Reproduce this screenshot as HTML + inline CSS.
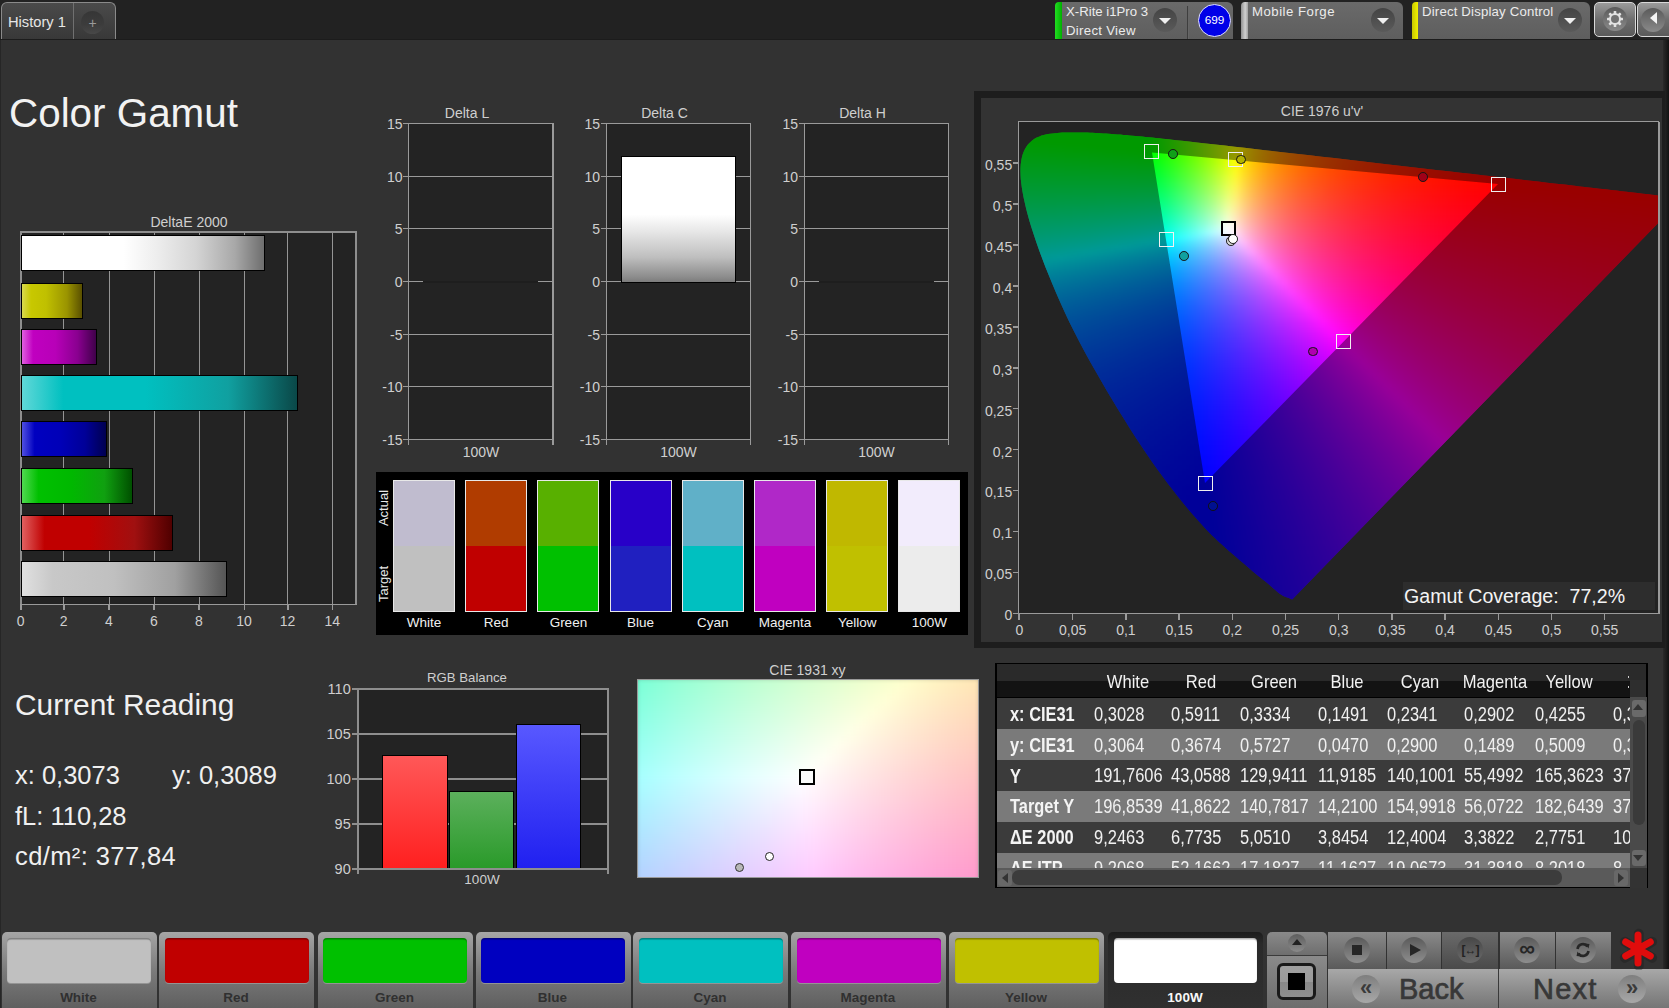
<!DOCTYPE html>
<html><head><meta charset="utf-8"><style>
html,body{margin:0;padding:0;}
body{width:1669px;height:1008px;position:relative;overflow:hidden;background:#323232;font-family:"Liberation Sans", sans-serif;}
.t{position:absolute;white-space:nowrap;font-family:"Liberation Sans", sans-serif;}
</style></head><body>
<div style="position:absolute;left:0px;top:0px;width:1669px;height:39px;background:#222;"></div>
<div style="position:absolute;left:0px;top:39px;width:1669px;height:1px;background:#1c1c1c;"></div>
<div style="position:absolute;left:1px;top:2px;width:114.5px;height:37px;background:linear-gradient(#4a4a4a,#383838);border:1px solid #8a8a8a;border-bottom:none;border-radius:6px 6px 0 0;box-sizing:border-box;"></div>
<div style="position:absolute;left:73px;top:3px;width:1px;height:36px;background:#707070;"></div>
<div style="position:absolute;left:81px;top:11px;width:23px;height:23px;border-radius:50%;background:linear-gradient(#363636,#3c3c3c 60%,#484848);"></div>
<div class="t" style="left:-407.5px;width:1000px;text-align:center;top:15.5px;font-size:14px;line-height:14px;color:#9a9a9a;font-weight:normal;">+</div>
<div class="t" style="left:8px;top:14.7px;font-size:14.7px;line-height:14.7px;color:#e6e6e6;font-weight:normal;">History 1</div>
<div style="position:absolute;left:1055px;top:2px;width:178px;height:37px;background:linear-gradient(#6a6a6a,#5e5e5e);border-radius:6px 6px 0 0;"></div>
<div style="position:absolute;left:1055px;top:2px;width:7px;height:37px;background:linear-gradient(90deg,#22dd22,#00b000);border-radius:4px 0 0 0;"></div>
<div style="position:absolute;left:1187px;top:6px;width:1px;height:33px;background:#3e3e3e;"></div>
<div style="position:absolute;left:1188px;top:6px;width:1px;height:33px;background:#666;"></div>
<div class="t" style="left:1066px;top:5.4px;font-size:13.2px;line-height:13.2px;color:#ececec;font-weight:normal;">X-Rite i1Pro 3</div>
<div class="t" style="left:1066px;top:23.9px;font-size:13.2px;line-height:13.2px;color:#ececec;font-weight:normal;letter-spacing:0.3px;">Direct View</div>
<div style="position:absolute;left:1152.5px;top:8px;width:24px;height:24px;border-radius:50%;background:linear-gradient(#444,#5a5a5a);"></div>
<div style="position:absolute;left:1158.5px;top:18px;width:0;height:0;border-left:6px solid transparent;border-right:6px solid transparent;border-top:6px solid #f0f0f0;"></div>
<div style="position:absolute;left:1198.2px;top:4px;width:33px;height:33px;border-radius:50%;background:#0000e8;border:1.8px solid #e0e0ff;box-sizing:border-box;"></div>
<div class="t" style="left:714.5999999999999px;width:1000px;text-align:center;top:15.4px;font-size:11.8px;line-height:11.8px;color:#ffffff;font-weight:normal;">699</div>
<div style="position:absolute;left:1241px;top:2px;width:162px;height:37px;background:linear-gradient(#6a6a6a,#5e5e5e);border-radius:6px 6px 0 0;"></div>
<div style="position:absolute;left:1241px;top:2px;width:7px;height:37px;background:linear-gradient(90deg,#909090,#d0d0d0 60%,#a0a0a0);border-radius:4px 0 0 0;"></div>
<div class="t" style="left:1252px;top:5.4px;font-size:13.2px;line-height:13.2px;color:#ececec;font-weight:normal;letter-spacing:0.5px;">Mobile Forge</div>
<div style="position:absolute;left:1371px;top:8px;width:24px;height:24px;border-radius:50%;background:linear-gradient(#444,#5a5a5a);"></div>
<div style="position:absolute;left:1377px;top:18px;width:0;height:0;border-left:6px solid transparent;border-right:6px solid transparent;border-top:6px solid #f0f0f0;"></div>
<div style="position:absolute;left:1412px;top:2px;width:178px;height:37px;background:linear-gradient(#6a6a6a,#5e5e5e);border-radius:6px 6px 0 0;"></div>
<div style="position:absolute;left:1412px;top:2px;width:6px;height:37px;background:linear-gradient(90deg,#c8c800,#f0f000);border-radius:4px 0 0 0;"></div>
<div class="t" style="left:1422px;top:5.4px;font-size:13.2px;line-height:13.2px;color:#ececec;font-weight:normal;letter-spacing:0.18px;">Direct Display Control</div>
<div style="position:absolute;left:1558px;top:8px;width:24px;height:24px;border-radius:50%;background:linear-gradient(#444,#5a5a5a);"></div>
<div style="position:absolute;left:1564px;top:18px;width:0;height:0;border-left:6px solid transparent;border-right:6px solid transparent;border-top:6px solid #f0f0f0;"></div>
<div style="position:absolute;left:1594px;top:2px;width:42px;height:35px;background:linear-gradient(#9a9a9a,#6e6e6e 50%,#5a5a5a);border:1.5px solid #d8d8d8;border-radius:5px;box-sizing:border-box;"></div>
<div style="position:absolute;left:1603px;top:7px;width:24px;height:24px;border-radius:50%;background:linear-gradient(#5a5a5a,#8a8a8a);"></div>
<svg style="position:absolute;left:1605px;top:9.3px" width="20" height="20" viewBox="-10 -10 20 20"><g fill="#e2e2e2"><rect x="-1.3" y="-8" width="2.6" height="4" rx="0.6" transform="rotate(0)"/><rect x="-1.3" y="-8" width="2.6" height="4" rx="0.6" transform="rotate(45)"/><rect x="-1.3" y="-8" width="2.6" height="4" rx="0.6" transform="rotate(90)"/><rect x="-1.3" y="-8" width="2.6" height="4" rx="0.6" transform="rotate(135)"/><rect x="-1.3" y="-8" width="2.6" height="4" rx="0.6" transform="rotate(180)"/><rect x="-1.3" y="-8" width="2.6" height="4" rx="0.6" transform="rotate(225)"/><rect x="-1.3" y="-8" width="2.6" height="4" rx="0.6" transform="rotate(270)"/><rect x="-1.3" y="-8" width="2.6" height="4" rx="0.6" transform="rotate(315)"/><circle r="6"/></g><circle r="4" fill="#727272"/></svg>
<div style="position:absolute;left:1637px;top:2px;width:40px;height:35px;background:linear-gradient(#9a9a9a,#6e6e6e 50%,#5a5a5a);border:1.5px solid #d8d8d8;border-radius:5px;box-sizing:border-box;"></div>
<div style="position:absolute;left:1641px;top:7.5px;width:24px;height:24px;border-radius:50%;background:linear-gradient(#5a5a5a,#8a8a8a);"></div>
<div style="position:absolute;left:1650px;top:12px;width:0;height:0;border-top:6.5px solid transparent;border-bottom:6.5px solid transparent;border-right:7px solid #f4f4f4;"></div>
<div style="position:absolute;left:0px;top:40px;width:1.2px;height:968px;background:#262626;"></div>
<div style="position:absolute;left:1663px;top:40px;width:6px;height:968px;background:linear-gradient(90deg,#2a2a2a,#111);"></div>
<div class="t" style="left:9px;top:93.0px;font-size:40.4px;line-height:40.4px;color:#f2f2f2;font-weight:normal;">Color Gamut</div>
<div class="t" style="left:-311px;width:1000px;text-align:center;top:215.0px;font-size:14px;line-height:14px;color:#cfcfcf;font-weight:normal;">DeltaE 2000</div>
<div style="position:absolute;left:20.2px;top:231px;width:335px;height:373px;background:#232323;"></div>
<div style="position:absolute;left:63.3px;top:231px;width:1.2px;height:373px;background:#959595;"></div>
<div style="position:absolute;left:108.60000000000001px;top:231px;width:1.2px;height:373px;background:#959595;"></div>
<div style="position:absolute;left:153.6px;top:231px;width:1.2px;height:373px;background:#959595;"></div>
<div style="position:absolute;left:198.6px;top:231px;width:1.2px;height:373px;background:#959595;"></div>
<div style="position:absolute;left:243.8px;top:231px;width:1.2px;height:373px;background:#959595;"></div>
<div style="position:absolute;left:287.2px;top:231px;width:1.2px;height:373px;background:#959595;"></div>
<div style="position:absolute;left:331.9px;top:231px;width:1.2px;height:373px;background:#959595;"></div>
<div style="position:absolute;left:20.2px;top:231px;width:336px;height:1.5px;background:#8e8e8e;"></div>
<div style="position:absolute;left:20.2px;top:231px;width:1.5px;height:373px;background:#8e8e8e;"></div>
<div style="position:absolute;left:355.2px;top:231px;width:1.5px;height:373px;background:#8e8e8e;"></div>
<div style="position:absolute;left:20.2px;top:603.5px;width:336.5px;height:1.5px;background:#9a9a9a;"></div>
<div style="position:absolute;left:20.15px;top:604px;width:1.5px;height:6px;background:#9a9a9a;"></div>
<div class="t" style="left:-479.4px;width:1000px;text-align:center;top:614.0px;font-size:14px;line-height:14px;color:#cfcfcf;font-weight:normal;">0</div>
<div style="position:absolute;left:63.15px;top:604px;width:1.5px;height:6px;background:#9a9a9a;"></div>
<div class="t" style="left:-436.4px;width:1000px;text-align:center;top:614.0px;font-size:14px;line-height:14px;color:#cfcfcf;font-weight:normal;">2</div>
<div style="position:absolute;left:108.45px;top:604px;width:1.5px;height:6px;background:#9a9a9a;"></div>
<div class="t" style="left:-391.1px;width:1000px;text-align:center;top:614.0px;font-size:14px;line-height:14px;color:#cfcfcf;font-weight:normal;">4</div>
<div style="position:absolute;left:153.45px;top:604px;width:1.5px;height:6px;background:#9a9a9a;"></div>
<div class="t" style="left:-346.1px;width:1000px;text-align:center;top:614.0px;font-size:14px;line-height:14px;color:#cfcfcf;font-weight:normal;">6</div>
<div style="position:absolute;left:198.45px;top:604px;width:1.5px;height:6px;background:#9a9a9a;"></div>
<div class="t" style="left:-301.1px;width:1000px;text-align:center;top:614.0px;font-size:14px;line-height:14px;color:#cfcfcf;font-weight:normal;">8</div>
<div style="position:absolute;left:243.65px;top:604px;width:1.5px;height:6px;background:#9a9a9a;"></div>
<div class="t" style="left:-255.9px;width:1000px;text-align:center;top:614.0px;font-size:14px;line-height:14px;color:#cfcfcf;font-weight:normal;">10</div>
<div style="position:absolute;left:287.05px;top:604px;width:1.5px;height:6px;background:#9a9a9a;"></div>
<div class="t" style="left:-212.5px;width:1000px;text-align:center;top:614.0px;font-size:14px;line-height:14px;color:#cfcfcf;font-weight:normal;">12</div>
<div style="position:absolute;left:331.75px;top:604px;width:1.5px;height:6px;background:#9a9a9a;"></div>
<div class="t" style="left:-167.8px;width:1000px;text-align:center;top:614.0px;font-size:14px;line-height:14px;color:#cfcfcf;font-weight:normal;">14</div>
<div style="position:absolute;left:21px;top:234.8px;width:243.5px;height:36px;background:linear-gradient(90deg,#fff 0%,#fff 42%,#ededed 56%,#d4d4d4 72%,#a8a8a8 88%,#6e6e6e 100%);border:1.5px solid #000;box-sizing:border-box;"></div>
<div style="position:absolute;left:21px;top:282.8px;width:61.5px;height:36px;background:linear-gradient(90deg,#dada50 0%,#c8c800 15%,#c0c000 40%,#9a9400 75%,#5a5000 100%);border:1.5px solid #000;box-sizing:border-box;"></div>
<div style="position:absolute;left:21px;top:328.8px;width:75.5px;height:36px;background:linear-gradient(90deg,#e060e0 0%,#c000c0 15%,#b800b8 45%,#8a0090 75%,#40004a 100%);border:1.5px solid #000;box-sizing:border-box;"></div>
<div style="position:absolute;left:21px;top:374.8px;width:276.5px;height:36px;background:linear-gradient(90deg,#60d8d8 0%,#00c0c0 15%,#00c0c0 45%,#10a0a0 75%,#0a4848 100%);border:1.5px solid #000;box-sizing:border-box;"></div>
<div style="position:absolute;left:21px;top:421.3px;width:86px;height:36px;background:linear-gradient(90deg,#5050e0 0%,#0000c0 15%,#0000b8 45%,#000098 75%,#000050 100%);border:1.5px solid #000;box-sizing:border-box;"></div>
<div style="position:absolute;left:21px;top:467.8px;width:111.5px;height:36px;background:linear-gradient(90deg,#50d850 0%,#00c000 15%,#00b800 45%,#10a010 75%,#005000 100%);border:1.5px solid #000;box-sizing:border-box;"></div>
<div style="position:absolute;left:21px;top:514.8px;width:152px;height:36px;background:linear-gradient(90deg,#e06060 0%,#c00000 15%,#c00000 45%,#a01010 75%,#500000 100%);border:1.5px solid #000;box-sizing:border-box;"></div>
<div style="position:absolute;left:21px;top:561.3px;width:206px;height:36px;background:linear-gradient(90deg,#e0e0e0 0%,#c8c8c8 15%,#c0c0c0 45%,#a0a0a0 75%,#555 100%);border:1.5px solid #000;box-sizing:border-box;"></div>
<div class="t" style="left:-33px;width:1000px;text-align:center;top:106.0px;font-size:14px;line-height:14px;color:#cfcfcf;font-weight:normal;">Delta L</div>
<div style="position:absolute;left:408px;top:123px;width:144.4px;height:316px;background:#232323;"></div>
<div style="position:absolute;left:403px;top:123.2px;width:149.4px;height:1.2px;background:#9a9a9a;"></div>
<div class="t" style="left:-597.5px;width:1000px;text-align:right;top:116.5px;font-size:14px;line-height:14px;color:#cfcfcf;font-weight:normal;">15</div>
<div style="position:absolute;left:403px;top:176.2px;width:149.4px;height:1.2px;background:#9a9a9a;"></div>
<div class="t" style="left:-597.5px;width:1000px;text-align:right;top:169.5px;font-size:14px;line-height:14px;color:#cfcfcf;font-weight:normal;">10</div>
<div style="position:absolute;left:403px;top:228.2px;width:149.4px;height:1.2px;background:#9a9a9a;"></div>
<div class="t" style="left:-597.5px;width:1000px;text-align:right;top:221.5px;font-size:14px;line-height:14px;color:#cfcfcf;font-weight:normal;">5</div>
<div style="position:absolute;left:403px;top:281.2px;width:149.4px;height:1.2px;background:#9a9a9a;"></div>
<div class="t" style="left:-597.5px;width:1000px;text-align:right;top:274.5px;font-size:14px;line-height:14px;color:#cfcfcf;font-weight:normal;">0</div>
<div style="position:absolute;left:403px;top:334.2px;width:149.4px;height:1.2px;background:#9a9a9a;"></div>
<div class="t" style="left:-597.5px;width:1000px;text-align:right;top:327.5px;font-size:14px;line-height:14px;color:#cfcfcf;font-weight:normal;">-5</div>
<div style="position:absolute;left:403px;top:386.2px;width:149.4px;height:1.2px;background:#9a9a9a;"></div>
<div class="t" style="left:-597.5px;width:1000px;text-align:right;top:379.5px;font-size:14px;line-height:14px;color:#cfcfcf;font-weight:normal;">-10</div>
<div style="position:absolute;left:403px;top:439.2px;width:149.4px;height:1.2px;background:#9a9a9a;"></div>
<div class="t" style="left:-597.5px;width:1000px;text-align:right;top:432.5px;font-size:14px;line-height:14px;color:#cfcfcf;font-weight:normal;">-15</div>
<div style="position:absolute;left:408px;top:123px;width:1.2px;height:322px;background:#9a9a9a;"></div>
<div style="position:absolute;left:552.4px;top:123px;width:1.2px;height:322px;background:#9a9a9a;"></div>
<div class="t" style="left:-19px;width:1000px;text-align:center;top:444.5px;font-size:14px;line-height:14px;color:#cfcfcf;font-weight:normal;">100W</div>
<div style="position:absolute;left:423px;top:280.7px;width:115px;height:2px;background:#1e1e1e;"></div>
<div class="t" style="left:164.5px;width:1000px;text-align:center;top:106.0px;font-size:14px;line-height:14px;color:#cfcfcf;font-weight:normal;">Delta C</div>
<div style="position:absolute;left:605.5px;top:123px;width:144.4px;height:316px;background:#232323;"></div>
<div style="position:absolute;left:600.5px;top:123.2px;width:149.4px;height:1.2px;background:#9a9a9a;"></div>
<div class="t" style="left:-400.0px;width:1000px;text-align:right;top:116.5px;font-size:14px;line-height:14px;color:#cfcfcf;font-weight:normal;">15</div>
<div style="position:absolute;left:600.5px;top:176.2px;width:149.4px;height:1.2px;background:#9a9a9a;"></div>
<div class="t" style="left:-400.0px;width:1000px;text-align:right;top:169.5px;font-size:14px;line-height:14px;color:#cfcfcf;font-weight:normal;">10</div>
<div style="position:absolute;left:600.5px;top:228.2px;width:149.4px;height:1.2px;background:#9a9a9a;"></div>
<div class="t" style="left:-400.0px;width:1000px;text-align:right;top:221.5px;font-size:14px;line-height:14px;color:#cfcfcf;font-weight:normal;">5</div>
<div style="position:absolute;left:600.5px;top:281.2px;width:149.4px;height:1.2px;background:#9a9a9a;"></div>
<div class="t" style="left:-400.0px;width:1000px;text-align:right;top:274.5px;font-size:14px;line-height:14px;color:#cfcfcf;font-weight:normal;">0</div>
<div style="position:absolute;left:600.5px;top:334.2px;width:149.4px;height:1.2px;background:#9a9a9a;"></div>
<div class="t" style="left:-400.0px;width:1000px;text-align:right;top:327.5px;font-size:14px;line-height:14px;color:#cfcfcf;font-weight:normal;">-5</div>
<div style="position:absolute;left:600.5px;top:386.2px;width:149.4px;height:1.2px;background:#9a9a9a;"></div>
<div class="t" style="left:-400.0px;width:1000px;text-align:right;top:379.5px;font-size:14px;line-height:14px;color:#cfcfcf;font-weight:normal;">-10</div>
<div style="position:absolute;left:600.5px;top:439.2px;width:149.4px;height:1.2px;background:#9a9a9a;"></div>
<div class="t" style="left:-400.0px;width:1000px;text-align:right;top:432.5px;font-size:14px;line-height:14px;color:#cfcfcf;font-weight:normal;">-15</div>
<div style="position:absolute;left:605.5px;top:123px;width:1.2px;height:322px;background:#9a9a9a;"></div>
<div style="position:absolute;left:749.9px;top:123px;width:1.2px;height:322px;background:#9a9a9a;"></div>
<div class="t" style="left:178.5px;width:1000px;text-align:center;top:444.5px;font-size:14px;line-height:14px;color:#cfcfcf;font-weight:normal;">100W</div>
<div style="position:absolute;left:621.0px;top:156px;width:115px;height:126.5px;background:linear-gradient(#fff 0%,#fff 46%,#e6e6e6 60%,#bfbfbf 80%,#8c8c8c 96%,#7c7c7c 100%);border:1.5px solid #000;box-sizing:border-box;"></div>
<div class="t" style="left:362.5px;width:1000px;text-align:center;top:106.0px;font-size:14px;line-height:14px;color:#cfcfcf;font-weight:normal;">Delta H</div>
<div style="position:absolute;left:803.5px;top:123px;width:144.4px;height:316px;background:#232323;"></div>
<div style="position:absolute;left:798.5px;top:123.2px;width:149.4px;height:1.2px;background:#9a9a9a;"></div>
<div class="t" style="left:-202.0px;width:1000px;text-align:right;top:116.5px;font-size:14px;line-height:14px;color:#cfcfcf;font-weight:normal;">15</div>
<div style="position:absolute;left:798.5px;top:176.2px;width:149.4px;height:1.2px;background:#9a9a9a;"></div>
<div class="t" style="left:-202.0px;width:1000px;text-align:right;top:169.5px;font-size:14px;line-height:14px;color:#cfcfcf;font-weight:normal;">10</div>
<div style="position:absolute;left:798.5px;top:228.2px;width:149.4px;height:1.2px;background:#9a9a9a;"></div>
<div class="t" style="left:-202.0px;width:1000px;text-align:right;top:221.5px;font-size:14px;line-height:14px;color:#cfcfcf;font-weight:normal;">5</div>
<div style="position:absolute;left:798.5px;top:281.2px;width:149.4px;height:1.2px;background:#9a9a9a;"></div>
<div class="t" style="left:-202.0px;width:1000px;text-align:right;top:274.5px;font-size:14px;line-height:14px;color:#cfcfcf;font-weight:normal;">0</div>
<div style="position:absolute;left:798.5px;top:334.2px;width:149.4px;height:1.2px;background:#9a9a9a;"></div>
<div class="t" style="left:-202.0px;width:1000px;text-align:right;top:327.5px;font-size:14px;line-height:14px;color:#cfcfcf;font-weight:normal;">-5</div>
<div style="position:absolute;left:798.5px;top:386.2px;width:149.4px;height:1.2px;background:#9a9a9a;"></div>
<div class="t" style="left:-202.0px;width:1000px;text-align:right;top:379.5px;font-size:14px;line-height:14px;color:#cfcfcf;font-weight:normal;">-10</div>
<div style="position:absolute;left:798.5px;top:439.2px;width:149.4px;height:1.2px;background:#9a9a9a;"></div>
<div class="t" style="left:-202.0px;width:1000px;text-align:right;top:432.5px;font-size:14px;line-height:14px;color:#cfcfcf;font-weight:normal;">-15</div>
<div style="position:absolute;left:803.5px;top:123px;width:1.2px;height:322px;background:#9a9a9a;"></div>
<div style="position:absolute;left:947.9px;top:123px;width:1.2px;height:322px;background:#9a9a9a;"></div>
<div class="t" style="left:376.5px;width:1000px;text-align:center;top:444.5px;font-size:14px;line-height:14px;color:#cfcfcf;font-weight:normal;">100W</div>
<div style="position:absolute;left:818.5px;top:280.7px;width:115px;height:2px;background:#1e1e1e;"></div>
<div style="position:absolute;left:376px;top:472px;width:592px;height:163px;background:#000;"></div>
<div style="position:absolute;left:393.0px;top:480px;width:62px;height:132px;border:1.5px solid #e8e8e8;box-sizing:border-box;background:linear-gradient(#c0bccf 0,#c0bccf 50%,#c0c0c0 50%,#c0c0c0 100%);"></div>
<div class="t" style="left:-76.0px;width:1000px;text-align:center;top:615.8px;font-size:13.5px;line-height:13.5px;color:#f0f0f0;font-weight:normal;">White</div>
<div style="position:absolute;left:465.2px;top:480px;width:62px;height:132px;border:1.5px solid #e8e8e8;box-sizing:border-box;background:linear-gradient(#b03c00 0,#b03c00 50%,#c00000 50%,#c00000 100%);"></div>
<div class="t" style="left:-3.8000000000000114px;width:1000px;text-align:center;top:615.8px;font-size:13.5px;line-height:13.5px;color:#f0f0f0;font-weight:normal;">Red</div>
<div style="position:absolute;left:537.4px;top:480px;width:62px;height:132px;border:1.5px solid #e8e8e8;box-sizing:border-box;background:linear-gradient(#58b000 0,#58b000 50%,#00c000 50%,#00c000 100%);"></div>
<div class="t" style="left:68.39999999999998px;width:1000px;text-align:center;top:615.8px;font-size:13.5px;line-height:13.5px;color:#f0f0f0;font-weight:normal;">Green</div>
<div style="position:absolute;left:609.6px;top:480px;width:62px;height:132px;border:1.5px solid #e8e8e8;box-sizing:border-box;background:linear-gradient(#2800c8 0,#2800c8 50%,#2020c0 50%,#2020c0 100%);"></div>
<div class="t" style="left:140.60000000000002px;width:1000px;text-align:center;top:615.8px;font-size:13.5px;line-height:13.5px;color:#f0f0f0;font-weight:normal;">Blue</div>
<div style="position:absolute;left:681.8px;top:480px;width:62px;height:132px;border:1.5px solid #e8e8e8;box-sizing:border-box;background:linear-gradient(#60b0c8 0,#60b0c8 50%,#00c0c0 50%,#00c0c0 100%);"></div>
<div class="t" style="left:212.79999999999995px;width:1000px;text-align:center;top:615.8px;font-size:13.5px;line-height:13.5px;color:#f0f0f0;font-weight:normal;">Cyan</div>
<div style="position:absolute;left:754.0px;top:480px;width:62px;height:132px;border:1.5px solid #e8e8e8;box-sizing:border-box;background:linear-gradient(#b028c8 0,#b028c8 50%,#c000c0 50%,#c000c0 100%);"></div>
<div class="t" style="left:285.0px;width:1000px;text-align:center;top:615.8px;font-size:13.5px;line-height:13.5px;color:#f0f0f0;font-weight:normal;">Magenta</div>
<div style="position:absolute;left:826.2px;top:480px;width:62px;height:132px;border:1.5px solid #e8e8e8;box-sizing:border-box;background:linear-gradient(#c0b800 0,#c0b800 50%,#c0c000 50%,#c0c000 100%);"></div>
<div class="t" style="left:357.20000000000005px;width:1000px;text-align:center;top:615.8px;font-size:13.5px;line-height:13.5px;color:#f0f0f0;font-weight:normal;">Yellow</div>
<div style="position:absolute;left:898.4px;top:480px;width:62px;height:132px;border:1.5px solid #e8e8e8;box-sizing:border-box;background:linear-gradient(#f2ecfc 0,#f2ecfc 50%,#ececec 50%,#ececec 100%);"></div>
<div class="t" style="left:429.4px;width:1000px;text-align:center;top:615.8px;font-size:13.5px;line-height:13.5px;color:#f0f0f0;font-weight:normal;">100W</div>
<div class="t" style="left:354px;top:501px;width:60px;text-align:center;font-size:13px;line-height:14px;color:#e8e8e8;transform:rotate(-90deg);">Actual</div>
<div class="t" style="left:354px;top:576.5px;width:60px;text-align:center;font-size:13px;line-height:14px;color:#e8e8e8;transform:rotate(-90deg);">Target</div>
<div style="position:absolute;left:974px;top:91px;width:691px;height:557px;background:#1d1d1d;"></div>
<div style="position:absolute;left:981px;top:98px;width:681px;height:544px;background:#333;"></div>
<div class="t" style="left:822px;width:1000px;text-align:center;top:104.0px;font-size:14px;line-height:14px;color:#cfcfcf;font-weight:normal;">CIE 1976 u'v'</div>
<div style="position:absolute;left:1019px;top:121.5px;width:639px;height:491.5px;background:#232323;"></div>
<div style="position:absolute;left:1017.8px;top:120.7px;width:641.7px;height:1.5px;background:#9a9a9a;"></div>
<div style="position:absolute;left:1017.8px;top:120.7px;width:1.5px;height:499.3px;background:#9a9a9a;"></div>
<div style="position:absolute;left:1658px;top:121.5px;width:1.5px;height:491.5px;background:#9a9a9a;"></div>
<div style="position:absolute;left:1013px;top:612.5px;width:646.5px;height:1.5px;background:#9a9a9a;"></div>
<div style="position:absolute;left:1013px;top:612.5px;width:6px;height:1.5px;background:#9a9a9a;"></div>
<div class="t" style="left:12.200000000000045px;width:1000px;text-align:right;top:608.3px;font-size:14px;line-height:14px;color:#cfcfcf;font-weight:normal;">0</div>
<div style="position:absolute;left:1013px;top:571.5px;width:6px;height:1.5px;background:#9a9a9a;"></div>
<div class="t" style="left:12.200000000000045px;width:1000px;text-align:right;top:567.3px;font-size:14px;line-height:14px;color:#cfcfcf;font-weight:normal;">0,05</div>
<div style="position:absolute;left:1013px;top:530.5px;width:6px;height:1.5px;background:#9a9a9a;"></div>
<div class="t" style="left:12.200000000000045px;width:1000px;text-align:right;top:526.4px;font-size:14px;line-height:14px;color:#cfcfcf;font-weight:normal;">0,1</div>
<div style="position:absolute;left:1013px;top:489.5px;width:6px;height:1.5px;background:#9a9a9a;"></div>
<div class="t" style="left:12.200000000000045px;width:1000px;text-align:right;top:485.4px;font-size:14px;line-height:14px;color:#cfcfcf;font-weight:normal;">0,15</div>
<div style="position:absolute;left:1013px;top:448.5px;width:6px;height:1.5px;background:#9a9a9a;"></div>
<div class="t" style="left:12.200000000000045px;width:1000px;text-align:right;top:444.5px;font-size:14px;line-height:14px;color:#cfcfcf;font-weight:normal;">0,2</div>
<div style="position:absolute;left:1013px;top:407.5px;width:6px;height:1.5px;background:#9a9a9a;"></div>
<div class="t" style="left:12.200000000000045px;width:1000px;text-align:right;top:403.6px;font-size:14px;line-height:14px;color:#cfcfcf;font-weight:normal;">0,25</div>
<div style="position:absolute;left:1013px;top:367.0px;width:6px;height:1.5px;background:#9a9a9a;"></div>
<div class="t" style="left:12.200000000000045px;width:1000px;text-align:right;top:362.6px;font-size:14px;line-height:14px;color:#cfcfcf;font-weight:normal;">0,3</div>
<div style="position:absolute;left:1013px;top:326.0px;width:6px;height:1.5px;background:#9a9a9a;"></div>
<div class="t" style="left:12.200000000000045px;width:1000px;text-align:right;top:321.6px;font-size:14px;line-height:14px;color:#cfcfcf;font-weight:normal;">0,35</div>
<div style="position:absolute;left:1013px;top:285.0px;width:6px;height:1.5px;background:#9a9a9a;"></div>
<div class="t" style="left:12.200000000000045px;width:1000px;text-align:right;top:280.7px;font-size:14px;line-height:14px;color:#cfcfcf;font-weight:normal;">0,4</div>
<div style="position:absolute;left:1013px;top:244.0px;width:6px;height:1.5px;background:#9a9a9a;"></div>
<div class="t" style="left:12.200000000000045px;width:1000px;text-align:right;top:239.8px;font-size:14px;line-height:14px;color:#cfcfcf;font-weight:normal;">0,45</div>
<div style="position:absolute;left:1013px;top:203.0px;width:6px;height:1.5px;background:#9a9a9a;"></div>
<div class="t" style="left:12.200000000000045px;width:1000px;text-align:right;top:198.8px;font-size:14px;line-height:14px;color:#cfcfcf;font-weight:normal;">0,5</div>
<div style="position:absolute;left:1013px;top:162.0px;width:6px;height:1.5px;background:#9a9a9a;"></div>
<div class="t" style="left:12.200000000000045px;width:1000px;text-align:right;top:157.8px;font-size:14px;line-height:14px;color:#cfcfcf;font-weight:normal;">0,55</div>
<div style="position:absolute;left:1018.5px;top:613px;width:1.5px;height:7px;background:#9a9a9a;"></div>
<div class="t" style="left:519.5px;width:1000px;text-align:center;top:623.0px;font-size:14px;line-height:14px;color:#cfcfcf;font-weight:normal;">0</div>
<div style="position:absolute;left:1071.5px;top:613px;width:1.5px;height:7px;background:#9a9a9a;"></div>
<div class="t" style="left:572.7px;width:1000px;text-align:center;top:623.0px;font-size:14px;line-height:14px;color:#cfcfcf;font-weight:normal;">0,05</div>
<div style="position:absolute;left:1125.0px;top:613px;width:1.5px;height:7px;background:#9a9a9a;"></div>
<div class="t" style="left:625.9000000000001px;width:1000px;text-align:center;top:623.0px;font-size:14px;line-height:14px;color:#cfcfcf;font-weight:normal;">0,1</div>
<div style="position:absolute;left:1178.0px;top:613px;width:1.5px;height:7px;background:#9a9a9a;"></div>
<div class="t" style="left:679.0999999999999px;width:1000px;text-align:center;top:623.0px;font-size:14px;line-height:14px;color:#cfcfcf;font-weight:normal;">0,15</div>
<div style="position:absolute;left:1231.5px;top:613px;width:1.5px;height:7px;background:#9a9a9a;"></div>
<div class="t" style="left:732.3px;width:1000px;text-align:center;top:623.0px;font-size:14px;line-height:14px;color:#cfcfcf;font-weight:normal;">0,2</div>
<div style="position:absolute;left:1284.5px;top:613px;width:1.5px;height:7px;background:#9a9a9a;"></div>
<div class="t" style="left:785.5px;width:1000px;text-align:center;top:623.0px;font-size:14px;line-height:14px;color:#cfcfcf;font-weight:normal;">0,25</div>
<div style="position:absolute;left:1337.5px;top:613px;width:1.5px;height:7px;background:#9a9a9a;"></div>
<div class="t" style="left:838.7px;width:1000px;text-align:center;top:623.0px;font-size:14px;line-height:14px;color:#cfcfcf;font-weight:normal;">0,3</div>
<div style="position:absolute;left:1391.0px;top:613px;width:1.5px;height:7px;background:#9a9a9a;"></div>
<div class="t" style="left:891.9000000000001px;width:1000px;text-align:center;top:623.0px;font-size:14px;line-height:14px;color:#cfcfcf;font-weight:normal;">0,35</div>
<div style="position:absolute;left:1444.0px;top:613px;width:1.5px;height:7px;background:#9a9a9a;"></div>
<div class="t" style="left:945.0999999999999px;width:1000px;text-align:center;top:623.0px;font-size:14px;line-height:14px;color:#cfcfcf;font-weight:normal;">0,4</div>
<div style="position:absolute;left:1497.5px;top:613px;width:1.5px;height:7px;background:#9a9a9a;"></div>
<div class="t" style="left:998.3px;width:1000px;text-align:center;top:623.0px;font-size:14px;line-height:14px;color:#cfcfcf;font-weight:normal;">0,45</div>
<div style="position:absolute;left:1550.5px;top:613px;width:1.5px;height:7px;background:#9a9a9a;"></div>
<div class="t" style="left:1051.5px;width:1000px;text-align:center;top:623.0px;font-size:14px;line-height:14px;color:#cfcfcf;font-weight:normal;">0,5</div>
<div style="position:absolute;left:1603.5px;top:613px;width:1.5px;height:7px;background:#9a9a9a;"></div>
<div class="t" style="left:1104.7px;width:1000px;text-align:center;top:623.0px;font-size:14px;line-height:14px;color:#cfcfcf;font-weight:normal;">0,55</div>
<div style="position:absolute;left:1012px;top:115px;width:652px;height:505px;overflow:hidden;clip-path:path('M280.2 484.4 L279.0 483.9 L277.3 483.3 L275.3 482.6 L273.1 481.7 L270.9 480.7 L268.9 479.5 L267.0 478.2 L265.2 476.7 L263.3 475.1 L261.4 473.4 L259.2 471.4 L256.7 469.3 L254.0 467.1 L251.1 464.7 L247.9 462.2 L244.5 459.4 L240.9 456.4 L236.9 453.0 L232.3 449.1 L227.2 444.7 L221.8 440.1 L216.4 435.4 L211.3 430.8 L206.7 426.7 L202.9 423.1 L199.6 419.9 L196.5 416.8 L193.5 413.7 L190.4 410.3 L186.8 406.3 L182.8 401.8 L178.6 397.0 L174.2 391.8 L169.7 386.3 L165.1 380.5 L160.3 374.3 L155.4 367.9 L150.3 361.0 L145.1 353.9 L139.8 346.4 L134.5 338.7 L129.0 330.6 L123.5 322.2 L117.9 313.4 L112.2 304.3 L106.4 295.1 L100.7 285.6 L95.1 276.2 L89.5 266.6 L83.9 256.8 L78.3 246.9 L72.8 236.9 L67.5 227.1 L62.5 217.3 L57.7 207.7 L53.1 198.0 L48.8 188.4 L44.6 178.9 L40.7 169.7 L37.0 160.8 L33.5 152.2 L30.3 143.8 L27.3 135.7 L24.5 127.8 L22.0 120.3 L19.7 113.2 L17.6 106.5 L15.8 100.1 L14.2 94.1 L12.9 88.3 L11.7 82.9 L10.7 77.8 L9.9 73.0 L9.3 68.5 L8.8 64.3 L8.6 60.4 L8.5 56.7 L8.5 53.2 L8.7 49.8 L9.1 46.7 L9.6 43.8 L10.2 41.1 L11.0 38.6 L11.9 36.2 L13.0 34.0 L14.2 32.0 L15.5 30.1 L16.9 28.4 L18.5 26.9 L20.1 25.5 L21.8 24.2 L23.6 23.1 L25.5 22.2 L27.5 21.4 L29.5 20.6 L31.6 20.0 L33.7 19.4 L36.0 19.0 L38.2 18.7 L40.6 18.4 L42.9 18.2 L45.3 17.9 L47.7 17.8 L50.2 17.6 L52.7 17.6 L55.2 17.5 L57.7 17.5 L60.3 17.4 L62.8 17.4 L65.3 17.4 L67.8 17.5 L70.3 17.5 L72.9 17.6 L75.5 17.6 L78.0 17.7 L80.6 17.8 L83.3 17.9 L85.9 18.1 L88.6 18.2 L91.3 18.4 L94.1 18.6 L96.8 18.7 L99.7 18.9 L102.5 19.2 L105.4 19.4 L108.4 19.6 L111.4 19.9 L114.4 20.1 L117.4 20.4 L120.5 20.7 L123.7 21.0 L126.9 21.3 L130.2 21.6 L133.5 21.9 L136.9 22.3 L140.3 22.6 L143.8 23.0 L147.3 23.3 L150.6 23.7 L153.6 24.0 L156.6 24.3 L160.1 24.7 L164.4 25.2 L169.9 25.8 L176.8 26.5 L184.8 27.4 L193.7 28.4 L203.1 29.5 L212.8 30.6 L222.6 31.7 L232.4 32.8 L242.6 34.0 L253.0 35.2 L263.8 36.4 L274.8 37.7 L286.1 39.0 L297.8 40.3 L309.8 41.7 L322.1 43.1 L334.6 44.6 L347.2 46.0 L359.7 47.5 L372.4 48.9 L385.3 50.4 L398.3 51.9 L411.2 53.4 L423.9 54.9 L436.3 56.3 L448.5 57.7 L460.7 59.1 L472.6 60.4 L484.3 61.8 L495.5 63.1 L506.2 64.3 L516.3 65.5 L526.1 66.6 L535.3 67.7 L544.2 68.7 L552.6 69.6 L560.6 70.6 L568.0 71.4 L575.0 72.2 L581.5 73.0 L587.6 73.7 L593.5 74.3 L599.1 75.0 L604.5 75.6 L609.7 76.2 L614.5 76.8 L619.0 77.3 L623.3 77.8 L627.4 78.3 L630.9 78.7 L634.0 79.0 L636.9 79.3 L639.7 79.7 L642.6 80.0 L645.9 80.4 L646.0 80.4 L646.0 108.2 Z');"><div style="filter:blur(2.5px);"><div style="height:5px;background:linear-gradient(90deg,#00ff00 0px,#00ff00 8px,#00ff00 16px,#00ff00 24px,#00ff00 32px,#00ff00 40px,#00ff00 48px,#00ff00 56px,#00ff00 64px,#00ff00 72px,#00ff00 80px,#00ff00 88px,#00ff00 96px,#00ff00 104px,#00ff00 112px,#00ff00 120px,#00ff00 128px,#03ff00 136px,#15ff00 144px,#27ff00 152px,#3aff00 160px,#4dff00 168px,#62ff00 176px,#77ff00 184px,#8dff00 192px,#a5ff00 200px,#bdff00 208px,#d6ff00 216px,#f1ff00 224px,#fff200 232px,#ffda00 240px,#ffc500 248px,#ffb300 256px,#ffa400 264px,#ff9600 272px,#ff8a00 280px,#ff7f00 288px,#ff7500 296px,#ff6c00 304px,#ff6400 312px,#ff5c00 320px,#ff5500 328px,#ff4f00 336px,#ff4900 344px,#ff4400 352px,#ff3f00 360px,#ff3a00 368px,#ff3600 376px,#ff3200 384px,#ff2e00 392px,#ff2a00 400px,#ff2700 408px,#ff2400 416px,#ff2100 424px,#ff1e00 432px,#ff1b00 440px,#ff1900 448px,#ff1600 456px,#ff1400 464px,#ff1200 472px,#ff0f00 480px,#ff0d00 488px,#ff0c00 496px,#ff0a00 504px,#ff0800 512px,#ff0600 520px,#ff0500 528px,#ff0300 536px,#ff0200 544px,#ff0000 552px,#ff0000 560px,#ff0000 568px,#ff0000 576px,#ff0000 584px,#ff0000 592px,#ff0000 600px,#ff0000 608px,#ff0000 616px,#ff0000 624px,#ff0000 632px,#ff0000 640px,#ff0000 648px,#ff0000 656px);"></div><div style="height:5px;background:linear-gradient(90deg,#00ff00 0px,#00ff00 8px,#00ff00 16px,#00ff00 24px,#00ff00 32px,#00ff00 40px,#00ff00 48px,#00ff00 56px,#00ff00 64px,#00ff00 72px,#00ff00 80px,#00ff00 88px,#00ff00 96px,#00ff00 104px,#00ff00 112px,#00ff00 120px,#00ff00 128px,#02ff00 136px,#13ff00 144px,#26ff00 152px,#39ff00 160px,#4cff00 168px,#61ff00 176px,#77ff00 184px,#8dff00 192px,#a5ff00 200px,#beff00 208px,#d7ff00 216px,#f3ff00 224px,#fff000 232px,#ffd800 240px,#ffc300 248px,#ffb200 256px,#ffa200 264px,#ff9400 272px,#ff8800 280px,#ff7d00 288px,#ff7300 296px,#ff6a00 304px,#ff6200 312px,#ff5b00 320px,#ff5400 328px,#ff4e00 336px,#ff4800 344px,#ff4200 352px,#ff3d00 360px,#ff3900 368px,#ff3400 376px,#ff3000 384px,#ff2d00 392px,#ff2900 400px,#ff2600 408px,#ff2200 416px,#ff2000 424px,#ff1d00 432px,#ff1a00 440px,#ff1700 448px,#ff1500 456px,#ff1300 464px,#ff1100 472px,#ff0e00 480px,#ff0c00 488px,#ff0b00 496px,#ff0900 504px,#ff0700 512px,#ff0500 520px,#ff0400 528px,#ff0200 536px,#ff0100 544px,#ff0000 552px,#ff0000 560px,#ff0000 568px,#ff0000 576px,#ff0000 584px,#ff0000 592px,#ff0000 600px,#ff0000 608px,#ff0000 616px,#ff0000 624px,#ff0000 632px,#ff0000 640px,#ff0000 648px,#ff0000 656px);"></div><div style="height:5px;background:linear-gradient(90deg,#00ff00 0px,#00ff00 8px,#00ff00 16px,#00ff00 24px,#00ff00 32px,#00ff00 40px,#00ff00 48px,#00ff00 56px,#00ff00 64px,#00ff00 72px,#00ff00 80px,#00ff00 88px,#00ff00 96px,#00ff00 104px,#00ff00 112px,#00ff00 120px,#00ff00 128px,#00ff00 136px,#12ff00 144px,#24ff00 152px,#37ff00 160px,#4cff00 168px,#60ff00 176px,#76ff00 184px,#8dff00 192px,#a5ff00 200px,#beff00 208px,#d8ff00 216px,#f4ff00 224px,#ffee00 232px,#ffd600 240px,#ffc200 248px,#ffb000 256px,#ffa000 264px,#ff9200 272px,#ff8600 280px,#ff7b00 288px,#ff7100 296px,#ff6900 304px,#ff6000 312px,#ff5900 320px,#ff5200 328px,#ff4c00 336px,#ff4600 344px,#ff4100 352px,#ff3c00 360px,#ff3700 368px,#ff3300 376px,#ff2f00 384px,#ff2b00 392px,#ff2800 400px,#ff2400 408px,#ff2100 416px,#ff1e00 424px,#ff1c00 432px,#ff1900 440px,#ff1600 448px,#ff1400 456px,#ff1200 464px,#ff0f00 472px,#ff0d00 480px,#ff0b00 488px,#ff0a00 496px,#ff0800 504px,#ff0600 512px,#ff0400 520px,#ff0300 528px,#ff0100 536px,#ff0000 544px,#ff0000 552px,#ff0000 560px,#ff0000 568px,#ff0000 576px,#ff0000 584px,#ff0000 592px,#ff0000 600px,#ff0000 608px,#ff0000 616px,#ff0000 624px,#ff0000 632px,#ff0000 640px,#ff0000 648px,#ff0000 656px);"></div><div style="height:5px;background:linear-gradient(90deg,#00ff00 0px,#00ff00 8px,#00ff00 16px,#00ff00 24px,#00ff00 32px,#00ff00 40px,#00ff00 48px,#00ff00 56px,#00ff00 64px,#00ff00 72px,#00ff00 80px,#00ff00 88px,#00ff00 96px,#00ff00 104px,#00ff00 112px,#00ff00 120px,#00ff00 128px,#00ff00 136px,#10ff00 144px,#23ff00 152px,#36ff00 160px,#4bff00 168px,#60ff00 176px,#76ff00 184px,#8dff00 192px,#a5ff00 200px,#bfff00 208px,#daff00 216px,#f6ff00 224px,#ffec00 232px,#ffd400 240px,#ffc000 248px,#ffae00 256px,#ff9e00 264px,#ff9100 272px,#ff8400 280px,#ff7a00 288px,#ff7000 296px,#ff6700 304px,#ff5f00 312px,#ff5700 320px,#ff5100 328px,#ff4b00 336px,#ff4500 344px,#ff4000 352px,#ff3b00 360px,#ff3600 368px,#ff3200 376px,#ff2e00 384px,#ff2a00 392px,#ff2700 400px,#ff2300 408px,#ff2000 416px,#ff1d00 424px,#ff1a00 432px,#ff1800 440px,#ff1500 448px,#ff1300 456px,#ff1100 464px,#ff0e00 472px,#ff0c00 480px,#ff0a00 488px,#ff0900 496px,#ff0700 504px,#ff0500 512px,#ff0300 520px,#ff0200 528px,#ff0000 536px,#ff0000 544px,#ff0000 552px,#ff0000 560px,#ff0000 568px,#ff0000 576px,#ff0000 584px,#ff0000 592px,#ff0000 600px,#ff0000 608px,#ff0000 616px,#ff0000 624px,#ff0000 632px,#ff0000 640px,#ff0000 648px,#ff0000 656px);"></div><div style="height:5px;background:linear-gradient(90deg,#00ff00 0px,#00ff00 8px,#00ff00 16px,#00ff00 24px,#00ff00 32px,#00ff00 40px,#00ff00 48px,#00ff00 56px,#00ff00 64px,#00ff00 72px,#00ff00 80px,#00ff00 88px,#00ff00 96px,#00ff00 104px,#00ff00 112px,#00ff00 120px,#00ff00 128px,#00ff00 136px,#0fff00 144px,#21ff00 152px,#35ff00 160px,#4aff00 168px,#5fff00 176px,#76ff00 184px,#8dff00 192px,#a6ff00 200px,#bfff00 208px,#dbff00 216px,#f7ff00 224px,#ffeb00 232px,#ffd200 240px,#ffbe00 248px,#ffac00 256px,#ff9d00 264px,#ff8f00 272px,#ff8300 280px,#ff7800 288px,#ff6e00 296px,#ff6500 304px,#ff5d00 312px,#ff5600 320px,#ff4f00 328px,#ff4900 336px,#ff4300 344px,#ff3e00 352px,#ff3900 360px,#ff3500 368px,#ff3000 376px,#ff2c00 384px,#ff2900 392px,#ff2500 400px,#ff2200 408px,#ff1f00 416px,#ff1c00 424px,#ff1900 432px,#ff1700 440px,#ff1400 448px,#ff1200 456px,#ff1000 464px,#ff0d00 472px,#ff0b00 480px,#ff0900 488px,#ff0800 496px,#ff0600 504px,#ff0400 512px,#ff0200 520px,#ff0100 528px,#ff0000 536px,#ff0000 544px,#ff0000 552px,#ff0000 560px,#ff0000 568px,#ff0000 576px,#ff0000 584px,#ff0000 592px,#ff0000 600px,#ff0000 608px,#ff0000 616px,#ff0000 624px,#ff0000 632px,#ff0000 640px,#ff0000 648px,#ff0000 656px);"></div><div style="height:5px;background:linear-gradient(90deg,#00ff05 0px,#00ff04 8px,#00ff03 16px,#00ff02 24px,#00ff00 32px,#00ff00 40px,#00ff00 48px,#00ff00 56px,#00ff00 64px,#00ff00 72px,#00ff00 80px,#00ff00 88px,#00ff00 96px,#00ff00 104px,#00ff00 112px,#00ff00 120px,#00ff00 128px,#00ff00 136px,#0dff00 144px,#20ff00 152px,#34ff00 160px,#49ff00 168px,#5eff00 176px,#75ff00 184px,#8dff00 192px,#a6ff00 200px,#c0ff00 208px,#dcff00 216px,#f9ff00 224px,#ffe900 232px,#ffd100 240px,#ffbc00 248px,#ffaa00 256px,#ff9b00 264px,#ff8d00 272px,#ff8100 280px,#ff7600 288px,#ff6c00 296px,#ff6400 304px,#ff5c00 312px,#ff5400 320px,#ff4e00 328px,#ff4800 336px,#ff4200 344px,#ff3d00 352px,#ff3800 360px,#ff3300 368px,#ff2f00 376px,#ff2b00 384px,#ff2700 392px,#ff2400 400px,#ff2100 408px,#ff1e00 416px,#ff1b00 424px,#ff1800 432px,#ff1500 440px,#ff1300 448px,#ff1100 456px,#ff0e00 464px,#ff0c00 472px,#ff0a00 480px,#ff0800 488px,#ff0700 496px,#ff0500 504px,#ff0300 512px,#ff0200 520px,#ff0000 528px,#ff0000 536px,#ff0000 544px,#ff0000 552px,#ff0000 560px,#ff0000 568px,#ff0000 576px,#ff0000 584px,#ff0000 592px,#ff0000 600px,#ff0000 608px,#ff0000 616px,#ff0000 624px,#ff0000 632px,#ff0000 640px,#ff0000 648px,#ff0000 656px);"></div><div style="height:5px;background:linear-gradient(90deg,#00ff0d 0px,#00ff0c 8px,#00ff0b 16px,#00ff0a 24px,#00ff09 32px,#00ff08 40px,#00ff07 48px,#00ff05 56px,#00ff04 64px,#00ff03 72px,#00ff01 80px,#00ff00 88px,#00ff00 96px,#00ff00 104px,#00ff00 112px,#00ff00 120px,#00ff00 128px,#00ff00 136px,#0bff00 144px,#1eff00 152px,#33ff00 160px,#48ff00 168px,#5eff00 176px,#75ff00 184px,#8dff00 192px,#a6ff00 200px,#c1ff00 208px,#ddff00 216px,#faff00 224px,#ffe700 232px,#ffcf00 240px,#ffba00 248px,#ffa800 256px,#ff9900 264px,#ff8b00 272px,#ff7f00 280px,#ff7400 288px,#ff6b00 296px,#ff6200 304px,#ff5a00 312px,#ff5300 320px,#ff4c00 328px,#ff4600 336px,#ff4000 344px,#ff3b00 352px,#ff3600 360px,#ff3200 368px,#ff2e00 376px,#ff2a00 384px,#ff2600 392px,#ff2300 400px,#ff2000 408px,#ff1c00 416px,#ff1a00 424px,#ff1700 432px,#ff1400 440px,#ff1200 448px,#ff1000 456px,#ff0d00 464px,#ff0b00 472px,#ff0900 480px,#ff0700 488px,#ff0600 496px,#ff0400 504px,#ff0200 512px,#ff0100 520px,#ff0000 528px,#ff0000 536px,#ff0000 544px,#ff0000 552px,#ff0000 560px,#ff0000 568px,#ff0000 576px,#ff0000 584px,#ff0000 592px,#ff0000 600px,#ff0000 608px,#ff0000 616px,#ff0000 624px,#ff0000 632px,#ff0000 640px,#ff0000 648px,#ff0000 656px);"></div><div style="height:5px;background:linear-gradient(90deg,#00ff15 0px,#00ff14 8px,#00ff13 16px,#00ff12 24px,#00ff11 32px,#00ff10 40px,#00ff0f 48px,#00ff0e 56px,#00ff0d 64px,#00ff0c 72px,#00ff0b 80px,#00ff0a 88px,#00ff08 96px,#00ff07 104px,#00ff06 112px,#00ff04 120px,#00ff03 128px,#00ff01 136px,#09ff00 144px,#1dff00 152px,#31ff00 160px,#47ff00 168px,#5dff00 176px,#74ff00 184px,#8dff00 192px,#a7ff00 200px,#c2ff00 208px,#deff00 216px,#fcff00 224px,#ffe500 232px,#ffcd00 240px,#ffb800 248px,#ffa600 256px,#ff9700 264px,#ff8900 272px,#ff7d00 280px,#ff7200 288px,#ff6900 296px,#ff6000 304px,#ff5800 312px,#ff5100 320px,#ff4a00 328px,#ff4400 336px,#ff3f00 344px,#ff3a00 352px,#ff3500 360px,#ff3000 368px,#ff2c00 376px,#ff2800 384px,#ff2500 392px,#ff2100 400px,#ff1e00 408px,#ff1b00 416px,#ff1800 424px,#ff1600 432px,#ff1300 440px,#ff1100 448px,#ff0f00 456px,#ff0c00 464px,#ff0a00 472px,#ff0800 480px,#ff0600 488px,#ff0500 496px,#ff0300 504px,#ff0100 512px,#ff0000 520px,#ff0000 528px,#ff0000 536px,#ff0000 544px,#ff0000 552px,#ff0000 560px,#ff0000 568px,#ff0000 576px,#ff0000 584px,#ff0000 592px,#ff0000 600px,#ff0000 608px,#ff0000 616px,#ff0000 624px,#ff0000 632px,#ff0000 640px,#ff0000 648px,#ff0000 656px);"></div><div style="height:5px;background:linear-gradient(90deg,#00ff1d 0px,#00ff1d 8px,#00ff1c 16px,#00ff1b 24px,#00ff1a 32px,#00ff19 40px,#00ff18 48px,#00ff17 56px,#00ff17 64px,#00ff16 72px,#00ff15 80px,#00ff13 88px,#00ff12 96px,#00ff11 104px,#00ff10 112px,#00ff0f 120px,#00ff0d 128px,#00ff0c 136px,#08ff0b 144px,#1bff09 152px,#30ff08 160px,#46ff06 168px,#5cff04 176px,#74ff03 184px,#8dff01 192px,#a7ff00 200px,#c2ff00 208px,#dfff00 216px,#feff00 224px,#ffe300 232px,#ffcb00 240px,#ffb600 248px,#ffa400 256px,#ff9500 264px,#ff8700 272px,#ff7b00 280px,#ff7100 288px,#ff6700 296px,#ff5e00 304px,#ff5700 312px,#ff4f00 320px,#ff4900 328px,#ff4300 336px,#ff3d00 344px,#ff3800 352px,#ff3300 360px,#ff2f00 368px,#ff2b00 376px,#ff2700 384px,#ff2400 392px,#ff2000 400px,#ff1d00 408px,#ff1a00 416px,#ff1700 424px,#ff1500 432px,#ff1200 440px,#ff1000 448px,#ff0d00 456px,#ff0b00 464px,#ff0900 472px,#ff0700 480px,#ff0500 488px,#ff0400 496px,#ff0200 504px,#ff0000 512px,#ff0000 520px,#ff0000 528px,#ff0000 536px,#ff0000 544px,#ff0000 552px,#ff0000 560px,#ff0000 568px,#ff0000 576px,#ff0000 584px,#ff0000 592px,#ff0000 600px,#ff0000 608px,#ff0000 616px,#ff0000 624px,#ff0000 632px,#ff0000 640px,#ff0000 648px,#ff0000 656px);"></div><div style="height:5px;background:linear-gradient(90deg,#00ff26 0px,#00ff25 8px,#00ff24 16px,#00ff24 24px,#00ff23 32px,#00ff22 40px,#00ff22 48px,#00ff21 56px,#00ff20 64px,#00ff1f 72px,#00ff1e 80px,#00ff1d 88px,#00ff1d 96px,#00ff1c 104px,#00ff1b 112px,#00ff1a 120px,#00ff18 128px,#00ff17 136px,#06ff16 144px,#1aff15 152px,#2fff14 160px,#44ff12 168px,#5bff11 176px,#73ff0f 184px,#8dff0e 192px,#a7ff0c 200px,#c3ff0a 208px,#e1ff09 216px,#fffe07 224px,#ffe104 232px,#ffc902 240px,#ffb400 248px,#ffa200 256px,#ff9300 264px,#ff8500 272px,#ff7900 280px,#ff6f00 288px,#ff6500 296px,#ff5d00 304px,#ff5500 312px,#ff4e00 320px,#ff4700 328px,#ff4100 336px,#ff3c00 344px,#ff3700 352px,#ff3200 360px,#ff2e00 368px,#ff2a00 376px,#ff2600 384px,#ff2200 392px,#ff1f00 400px,#ff1c00 408px,#ff1900 416px,#ff1600 424px,#ff1300 432px,#ff1100 440px,#ff0f00 448px,#ff0c00 456px,#ff0a00 464px,#ff0800 472px,#ff0600 480px,#ff0400 488px,#ff0300 496px,#ff0100 504px,#ff0000 512px,#ff0000 520px,#ff0000 528px,#ff0000 536px,#ff0000 544px,#ff0000 552px,#ff0000 560px,#ff0000 568px,#ff0000 576px,#ff0000 584px,#ff0000 592px,#ff0000 600px,#ff0000 608px,#ff0000 616px,#ff0000 624px,#ff0000 632px,#ff0000 640px,#ff0000 648px,#ff0000 656px);"></div><div style="height:5px;background:linear-gradient(90deg,#00ff2e 0px,#00ff2e 8px,#00ff2d 16px,#00ff2d 24px,#00ff2c 32px,#00ff2c 40px,#00ff2b 48px,#00ff2a 56px,#00ff2a 64px,#00ff29 72px,#00ff28 80px,#00ff28 88px,#00ff27 96px,#00ff26 104px,#00ff25 112px,#00ff25 120px,#00ff24 128px,#00ff23 136px,#04ff22 144px,#18ff21 152px,#2dff20 160px,#43ff1f 168px,#5bff1e 176px,#73ff1c 184px,#8dff1b 192px,#a8ff1a 200px,#c4ff19 208px,#e2ff17 216px,#fffc15 224px,#ffdf11 232px,#ffc70e 240px,#ffb20b 248px,#ffa009 256px,#ff9107 264px,#ff8405 272px,#ff7804 280px,#ff6d02 288px,#ff6301 296px,#ff5b00 304px,#ff5300 312px,#ff4c00 320px,#ff4600 328px,#ff4000 336px,#ff3a00 344px,#ff3500 352px,#ff3100 360px,#ff2c00 368px,#ff2800 376px,#ff2400 384px,#ff2100 392px,#ff1e00 400px,#ff1a00 408px,#ff1800 416px,#ff1500 424px,#ff1200 432px,#ff1000 440px,#ff0d00 448px,#ff0b00 456px,#ff0900 464px,#ff0700 472px,#ff0500 480px,#ff0300 488px,#ff0200 496px,#ff0000 504px,#ff0000 512px,#ff0000 520px,#ff0000 528px,#ff0000 536px,#ff0000 544px,#ff0000 552px,#ff0000 560px,#ff0000 568px,#ff0000 576px,#ff0000 584px,#ff0000 592px,#ff0000 600px,#ff0000 608px,#ff0000 616px,#ff0000 624px,#ff0000 632px,#ff0000 640px,#ff0000 648px,#ff0000 656px);"></div><div style="height:5px;background:linear-gradient(90deg,#00ff37 0px,#00ff37 8px,#00ff36 16px,#00ff36 24px,#00ff35 32px,#00ff35 40px,#00ff35 48px,#00ff34 56px,#00ff34 64px,#00ff33 72px,#00ff33 80px,#00ff32 88px,#00ff32 96px,#00ff31 104px,#00ff31 112px,#00ff30 120px,#00ff2f 128px,#00ff2f 136px,#02ff2e 144px,#16ff2d 152px,#2cff2c 160px,#42ff2c 168px,#5aff2b 176px,#72ff2a 184px,#8cff29 192px,#a8ff28 200px,#c5ff27 208px,#e3ff26 216px,#fffa24 224px,#ffdd1f 232px,#ffc51b 240px,#ffb017 248px,#ff9e14 256px,#ff8f11 264px,#ff820e 272px,#ff760c 280px,#ff6b0a 288px,#ff6209 296px,#ff5907 304px,#ff5106 312px,#ff4a04 320px,#ff4403 328px,#ff3e02 336px,#ff3901 344px,#ff3400 352px,#ff2f00 360px,#ff2b00 368px,#ff2700 376px,#ff2300 384px,#ff2000 392px,#ff1c00 400px,#ff1900 408px,#ff1600 416px,#ff1400 424px,#ff1100 432px,#ff0f00 440px,#ff0c00 448px,#ff0a00 456px,#ff0800 464px,#ff0600 472px,#ff0400 480px,#ff0200 488px,#ff0100 496px,#ff0000 504px,#ff0000 512px,#ff0000 520px,#ff0000 528px,#ff0000 536px,#ff0000 544px,#ff0000 552px,#ff0000 560px,#ff0000 568px,#ff0000 576px,#ff0000 584px,#ff0000 592px,#ff0000 600px,#ff0000 608px,#ff0000 616px,#ff0000 624px,#ff0000 632px,#ff0000 640px,#ff0000 648px,#ff0000 656px);"></div><div style="height:5px;background:linear-gradient(90deg,#00ff40 0px,#00ff40 8px,#00ff3f 16px,#00ff3f 24px,#00ff3f 32px,#00ff3f 40px,#00ff3e 48px,#00ff3e 56px,#00ff3e 64px,#00ff3e 72px,#00ff3d 80px,#00ff3d 88px,#00ff3d 96px,#00ff3c 104px,#00ff3c 112px,#00ff3c 120px,#00ff3b 128px,#00ff3b 136px,#00ff3a 144px,#14ff3a 152px,#2aff39 160px,#41ff39 168px,#59ff38 176px,#72ff38 184px,#8cff37 192px,#a8ff37 200px,#c6ff36 208px,#e5ff36 216px,#fff833 224px,#ffdb2d 232px,#ffc327 240px,#ffae22 248px,#ff9c1e 256px,#ff8d1b 264px,#ff8018 272px,#ff7415 280px,#ff6913 288px,#ff6011 296px,#ff570f 304px,#ff500d 312px,#ff490b 320px,#ff420a 328px,#ff3c08 336px,#ff3707 344px,#ff3206 352px,#ff2e05 360px,#ff2904 368px,#ff2503 376px,#ff2202 384px,#ff1e02 392px,#ff1b01 400px,#ff1800 408px,#ff1500 416px,#ff1200 424px,#ff1000 432px,#ff0d00 440px,#ff0b00 448px,#ff0900 456px,#ff0700 464px,#ff0500 472px,#ff0300 480px,#ff0100 488px,#ff0000 496px,#ff0000 504px,#ff0000 512px,#ff0000 520px,#ff0000 528px,#ff0000 536px,#ff0000 544px,#ff0000 552px,#ff0000 560px,#ff0000 568px,#ff0000 576px,#ff0000 584px,#ff0000 592px,#ff0000 600px,#ff0000 608px,#ff0000 616px,#ff0000 624px,#ff0000 632px,#ff0000 640px,#ff0000 648px,#ff0000 656px);"></div><div style="height:5px;background:linear-gradient(90deg,#00ff49 0px,#00ff49 8px,#00ff49 16px,#00ff49 24px,#00ff49 32px,#00ff48 40px,#00ff48 48px,#00ff48 56px,#00ff48 64px,#00ff48 72px,#00ff48 80px,#00ff48 88px,#00ff48 96px,#00ff48 104px,#00ff48 112px,#00ff47 120px,#00ff47 128px,#00ff47 136px,#00ff47 144px,#13ff47 152px,#29ff47 160px,#40ff47 168px,#58ff46 176px,#71ff46 184px,#8cff46 192px,#a9ff46 200px,#c7ff46 208px,#e6ff46 216px,#fff643 224px,#ffd93b 232px,#ffc034 240px,#ffac2e 248px,#ff9a29 256px,#ff8b25 264px,#ff7e21 272px,#ff721e 280px,#ff671b 288px,#ff5e18 296px,#ff5516 304px,#ff4e14 312px,#ff4712 320px,#ff4110 328px,#ff3b0f 336px,#ff360d 344px,#ff310c 352px,#ff2c0b 360px,#ff2809 368px,#ff2408 376px,#ff2007 384px,#ff1d06 392px,#ff1a05 400px,#ff1705 408px,#ff1404 416px,#ff1103 424px,#ff0f02 432px,#ff0c02 440px,#ff0a01 448px,#ff0800 456px,#ff0600 464px,#ff0400 472px,#ff0200 480px,#ff0000 488px,#ff0000 496px,#ff0000 504px,#ff0000 512px,#ff0000 520px,#ff0000 528px,#ff0000 536px,#ff0000 544px,#ff0000 552px,#ff0000 560px,#ff0000 568px,#ff0000 576px,#ff0000 584px,#ff0000 592px,#ff0000 600px,#ff0000 608px,#ff0000 616px,#ff0000 624px,#ff0000 632px,#ff0000 640px,#ff0000 648px,#ff0000 656px);"></div><div style="height:5px;background:linear-gradient(90deg,#00ff52 0px,#00ff52 8px,#00ff52 16px,#00ff52 24px,#00ff52 32px,#00ff53 40px,#00ff53 48px,#00ff53 56px,#00ff53 64px,#00ff53 72px,#00ff53 80px,#00ff53 88px,#00ff53 96px,#00ff53 104px,#00ff54 112px,#00ff54 120px,#00ff54 128px,#00ff54 136px,#00ff54 144px,#11ff54 152px,#27ff55 160px,#3eff55 168px,#57ff55 176px,#71ff55 184px,#8cff55 192px,#a9ff56 200px,#c8ff56 208px,#e8ff56 216px,#fff453 224px,#ffd749 232px,#ffbe41 240px,#ffaa3a 248px,#ff9834 256px,#ff892f 264px,#ff7b2b 272px,#ff7027 280px,#ff6524 288px,#ff5c20 296px,#ff541e 304px,#ff4c1b 312px,#ff4519 320px,#ff3f17 328px,#ff3915 336px,#ff3413 344px,#ff2f12 352px,#ff2b10 360px,#ff260f 368px,#ff220d 376px,#ff1f0c 384px,#ff1b0b 392px,#ff180a 400px,#ff1509 408px,#ff1308 416px,#ff1007 424px,#ff0d07 432px,#ff0b06 440px,#ff0905 448px,#ff0704 456px,#ff0504 464px,#ff0303 472px,#ff0102 480px,#ff0002 488px,#ff0001 496px,#ff0001 504px,#ff0000 512px,#ff0000 520px,#ff0000 528px,#ff0000 536px,#ff0000 544px,#ff0000 552px,#ff0000 560px,#ff0000 568px,#ff0000 576px,#ff0000 584px,#ff0000 592px,#ff0000 600px,#ff0000 608px,#ff0000 616px,#ff0000 624px,#ff0000 632px,#ff0000 640px,#ff0000 648px,#ff0000 656px);"></div><div style="height:5px;background:linear-gradient(90deg,#00ff5b 0px,#00ff5c 8px,#00ff5c 16px,#00ff5c 24px,#00ff5d 32px,#00ff5d 40px,#00ff5d 48px,#00ff5d 56px,#00ff5e 64px,#00ff5e 72px,#00ff5e 80px,#00ff5f 88px,#00ff5f 96px,#00ff60 104px,#00ff60 112px,#00ff60 120px,#00ff61 128px,#00ff61 136px,#00ff62 144px,#0fff62 152px,#25ff63 160px,#3dff63 168px,#56ff64 176px,#70ff65 184px,#8cff65 192px,#a9ff66 200px,#c9ff67 208px,#e9ff67 216px,#fff263 224px,#ffd558 232px,#ffbc4e 240px,#ffa746 248px,#ff9640 256px,#ff873a 264px,#ff7935 272px,#ff6e30 280px,#ff632c 288px,#ff5a29 296px,#ff5225 304px,#ff4a23 312px,#ff4320 320px,#ff3d1e 328px,#ff381b 336px,#ff3219 344px,#ff2d17 352px,#ff2916 360px,#ff2514 368px,#ff2113 376px,#ff1d11 384px,#ff1a10 392px,#ff170f 400px,#ff140e 408px,#ff110d 416px,#ff0f0c 424px,#ff0c0b 432px,#ff0a0a 440px,#ff0809 448px,#ff0508 456px,#ff0307 464px,#ff0207 472px,#ff0006 480px,#ff0005 488px,#ff0005 496px,#ff0004 504px,#ff0003 512px,#ff0003 520px,#ff0002 528px,#ff0002 536px,#ff0001 544px,#ff0001 552px,#ff0001 560px,#ff0000 568px,#ff0000 576px,#ff0000 584px,#ff0000 592px,#ff0000 600px,#ff0000 608px,#ff0000 616px,#ff0000 624px,#ff0000 632px,#ff0000 640px,#ff0000 648px,#ff0000 656px);"></div><div style="height:5px;background:linear-gradient(90deg,#00ff65 0px,#00ff66 8px,#00ff66 16px,#00ff66 24px,#00ff67 32px,#00ff67 40px,#00ff68 48px,#00ff68 56px,#00ff69 64px,#00ff69 72px,#00ff6a 80px,#00ff6b 88px,#00ff6b 96px,#00ff6c 104px,#00ff6d 112px,#00ff6d 120px,#00ff6e 128px,#00ff6f 136px,#00ff70 144px,#0dff70 152px,#24ff71 160px,#3cff72 168px,#55ff73 176px,#70ff74 184px,#8cff76 192px,#aaff77 200px,#caff78 208px,#ebff79 216px,#fff073 224px,#ffd266 232px,#ffba5c 240px,#ffa553 248px,#ff944b 256px,#ff8544 264px,#ff773e 272px,#ff6c39 280px,#ff6135 288px,#ff5831 296px,#ff502d 304px,#ff482a 312px,#ff4227 320px,#ff3c24 328px,#ff3622 336px,#ff311f 344px,#ff2c1d 352px,#ff271b 360px,#ff231a 368px,#ff2018 376px,#ff1c16 384px,#ff1915 392px,#ff1614 400px,#ff1312 408px,#ff1011 416px,#ff0d10 424px,#ff0b0f 432px,#ff090e 440px,#ff060d 448px,#ff040c 456px,#ff020b 464px,#ff000a 472px,#ff000a 480px,#ff0009 488px,#ff0008 496px,#ff0007 504px,#ff0007 512px,#ff0006 520px,#ff0006 528px,#ff0005 536px,#ff0004 544px,#ff0004 552px,#ff0003 560px,#ff0003 568px,#ff0002 576px,#ff0002 584px,#ff0002 592px,#ff0001 600px,#ff0001 608px,#ff0000 616px,#ff0000 624px,#ff0000 632px,#ff0000 640px,#ff0000 648px,#ff0000 656px);"></div><div style="height:5px;background:linear-gradient(90deg,#00ff6f 0px,#00ff70 8px,#00ff70 16px,#00ff71 24px,#00ff71 32px,#00ff72 40px,#00ff73 48px,#00ff74 56px,#00ff74 64px,#00ff75 72px,#00ff76 80px,#00ff77 88px,#00ff78 96px,#00ff79 104px,#00ff7a 112px,#00ff7b 120px,#00ff7c 128px,#00ff7d 136px,#00ff7e 144px,#0bff7f 152px,#22ff80 160px,#3aff82 168px,#54ff83 176px,#6fff85 184px,#8cff86 192px,#aaff88 200px,#cbff8a 208px,#edff8c 216px,#ffee84 224px,#ffd076 232px,#ffb869 240px,#ffa35f 248px,#ff9156 256px,#ff824f 264px,#ff7548 272px,#ff6a43 280px,#ff5f3e 288px,#ff5639 296px,#ff4e35 304px,#ff4731 312px,#ff402e 320px,#ff3a2b 328px,#ff3428 336px,#ff2f26 344px,#ff2a23 352px,#ff2621 360px,#ff221f 368px,#ff1e1d 376px,#ff1b1c 384px,#ff171a 392px,#ff1418 400px,#ff1117 408px,#ff0f16 416px,#ff0c14 424px,#ff0a13 432px,#ff0712 440px,#ff0511 448px,#ff0310 456px,#ff010f 464px,#ff000e 472px,#ff000d 480px,#ff000c 488px,#ff000c 496px,#ff000b 504px,#ff000a 512px,#ff0009 520px,#ff0009 528px,#ff0008 536px,#ff0007 544px,#ff0007 552px,#ff0006 560px,#ff0006 568px,#ff0005 576px,#ff0005 584px,#ff0004 592px,#ff0004 600px,#ff0003 608px,#ff0003 616px,#ff0002 624px,#ff0002 632px,#ff0002 640px,#ff0001 648px,#ff0001 656px);"></div><div style="height:5px;background:linear-gradient(90deg,#00ff79 0px,#00ff7a 8px,#00ff7b 16px,#00ff7b 24px,#00ff7c 32px,#00ff7d 40px,#00ff7e 48px,#00ff7f 56px,#00ff80 64px,#00ff81 72px,#00ff82 80px,#00ff83 88px,#00ff84 96px,#00ff86 104px,#00ff87 112px,#00ff88 120px,#00ff8a 128px,#00ff8b 136px,#00ff8d 144px,#09ff8e 152px,#20ff90 160px,#39ff92 168px,#53ff94 176px,#6fff96 184px,#8cff98 192px,#abff9a 200px,#ccff9d 208px,#efff9f 216px,#ffec96 224px,#ffce85 232px,#ffb577 240px,#ffa16c 248px,#ff8f62 256px,#ff805a 264px,#ff7353 272px,#ff674c 280px,#ff5d47 288px,#ff5441 296px,#ff4c3d 304px,#ff4539 312px,#ff3e35 320px,#ff3832 328px,#ff322f 336px,#ff2d2c 344px,#ff2929 352px,#ff2427 360px,#ff2025 368px,#ff1d23 376px,#ff1921 384px,#ff161f 392px,#ff131d 400px,#ff101c 408px,#ff0d1a 416px,#ff0b19 424px,#ff0817 432px,#ff0616 440px,#ff0415 448px,#ff0214 456px,#ff0013 464px,#ff0012 472px,#ff0011 480px,#ff0010 488px,#ff000f 496px,#ff000e 504px,#ff000d 512px,#ff000d 520px,#ff000c 528px,#ff000b 536px,#ff000a 544px,#ff000a 552px,#ff0009 560px,#ff0009 568px,#ff0008 576px,#ff0007 584px,#ff0007 592px,#ff0006 600px,#ff0006 608px,#ff0005 616px,#ff0005 624px,#ff0004 632px,#ff0004 640px,#ff0004 648px,#ff0003 656px);"></div><div style="height:5px;background:linear-gradient(90deg,#00ff83 0px,#00ff84 8px,#00ff85 16px,#00ff86 24px,#00ff87 32px,#00ff88 40px,#00ff8a 48px,#00ff8b 56px,#00ff8c 64px,#00ff8d 72px,#00ff8f 80px,#00ff90 88px,#00ff91 96px,#00ff93 104px,#00ff95 112px,#00ff96 120px,#00ff98 128px,#00ff9a 136px,#00ff9c 144px,#06ff9e 152px,#1effa0 160px,#37ffa2 168px,#52ffa5 176px,#6effa7 184px,#8cffaa 192px,#abffad 200px,#cdffb0 208px,#f1ffb3 216px,#ffe9a7 224px,#ffcb95 232px,#ffb386 240px,#ff9e79 248px,#ff8d6e 256px,#ff7e65 264px,#ff715d 272px,#ff6556 280px,#ff5b50 288px,#ff524a 296px,#ff4a45 304px,#ff4340 312px,#ff3c3c 320px,#ff3639 328px,#ff3135 336px,#ff2c32 344px,#ff272f 352px,#ff232d 360px,#ff1f2a 368px,#ff1b28 376px,#ff1826 384px,#ff1424 392px,#ff1122 400px,#ff0f20 408px,#ff0c1f 416px,#ff0a1d 424px,#ff071c 432px,#ff051a 440px,#ff0319 448px,#ff0118 456px,#ff0017 464px,#ff0015 472px,#ff0014 480px,#ff0013 488px,#ff0012 496px,#ff0011 504px,#ff0011 512px,#ff0010 520px,#ff000f 528px,#ff000e 536px,#ff000d 544px,#ff000d 552px,#ff000c 560px,#ff000b 568px,#ff000b 576px,#ff000a 584px,#ff000a 592px,#ff0009 600px,#ff0008 608px,#ff0008 616px,#ff0007 624px,#ff0007 632px,#ff0006 640px,#ff0006 648px,#ff0006 656px);"></div><div style="height:5px;background:linear-gradient(90deg,#00ff8e 0px,#00ff8f 8px,#00ff90 16px,#00ff91 24px,#00ff93 32px,#00ff94 40px,#00ff95 48px,#00ff97 56px,#00ff98 64px,#00ff9a 72px,#00ff9b 80px,#00ff9d 88px,#00ff9f 96px,#00ffa1 104px,#00ffa3 112px,#00ffa5 120px,#00ffa7 128px,#00ffa9 136px,#00ffac 144px,#04ffae 152px,#1cffb1 160px,#36ffb4 168px,#51ffb6 176px,#6dffba 184px,#8cffbd 192px,#acffc0 200px,#ceffc4 208px,#f2ffc8 216px,#ffe7b9 224px,#ffc9a5 232px,#ffb094 240px,#ff9c86 248px,#ff8b7a 256px,#ff7c70 264px,#ff6f67 272px,#ff635f 280px,#ff5959 288px,#ff5053 296px,#ff484d 304px,#ff4148 312px,#ff3a44 320px,#ff3440 328px,#ff2f3c 336px,#ff2a39 344px,#ff2535 352px,#ff2133 360px,#ff1d30 368px,#ff1a2d 376px,#ff162b 384px,#ff1329 392px,#ff1027 400px,#ff0d25 408px,#ff0b23 416px,#ff0821 424px,#ff0620 432px,#ff041e 440px,#ff021d 448px,#ff001c 456px,#ff001a 464px,#ff0019 472px,#ff0018 480px,#ff0017 488px,#ff0016 496px,#ff0015 504px,#ff0014 512px,#ff0013 520px,#ff0012 528px,#ff0011 536px,#ff0011 544px,#ff0010 552px,#ff000f 560px,#ff000e 568px,#ff000e 576px,#ff000d 584px,#ff000c 592px,#ff000c 600px,#ff000b 608px,#ff000b 616px,#ff000a 624px,#ff0009 632px,#ff0009 640px,#ff0008 648px,#ff0008 656px);"></div><div style="height:5px;background:linear-gradient(90deg,#00ff98 0px,#00ff9a 8px,#00ff9b 16px,#00ff9d 24px,#00ff9e 32px,#00ffa0 40px,#00ffa1 48px,#00ffa3 56px,#00ffa5 64px,#00ffa7 72px,#00ffa9 80px,#00ffab 88px,#00ffad 96px,#00ffaf 104px,#00ffb1 112px,#00ffb4 120px,#00ffb6 128px,#00ffb9 136px,#00ffbc 144px,#02ffbf 152px,#1affc2 160px,#34ffc5 168px,#50ffc9 176px,#6dffcd 184px,#8bffd0 192px,#acffd5 200px,#cfffd9 208px,#f4ffde 216px,#ffe5cc 224px,#ffc7b5 232px,#ffaea3 240px,#ff9a93 248px,#ff8887 256px,#ff797b 264px,#ff6c72 272px,#ff6169 280px,#ff5762 288px,#ff4e5b 296px,#ff4655 304px,#ff3f50 312px,#ff394b 320px,#ff3347 328px,#ff2d43 336px,#ff283f 344px,#ff243c 352px,#ff2038 360px,#ff1c35 368px,#ff1833 376px,#ff1530 384px,#ff122e 392px,#ff0f2c 400px,#ff0c2a 408px,#ff0928 416px,#ff0726 424px,#ff0524 432px,#ff0223 440px,#ff0021 448px,#ff0020 456px,#ff001e 464px,#ff001d 472px,#ff001c 480px,#ff001b 488px,#ff0019 496px,#ff0018 504px,#ff0017 512px,#ff0016 520px,#ff0015 528px,#ff0014 536px,#ff0014 544px,#ff0013 552px,#ff0012 560px,#ff0011 568px,#ff0010 576px,#ff0010 584px,#ff000f 592px,#ff000e 600px,#ff000e 608px,#ff000d 616px,#ff000c 624px,#ff000c 632px,#ff000b 640px,#ff000b 648px,#ff000a 656px);"></div><div style="height:5px;background:linear-gradient(90deg,#00ffa3 0px,#00ffa5 8px,#00ffa6 16px,#00ffa8 24px,#00ffaa 32px,#00ffac 40px,#00ffae 48px,#00ffb0 56px,#00ffb2 64px,#00ffb4 72px,#00ffb6 80px,#00ffb9 88px,#00ffbb 96px,#00ffbe 104px,#00ffc0 112px,#00ffc3 120px,#00ffc6 128px,#00ffc9 136px,#00ffcd 144px,#00ffd0 152px,#18ffd4 160px,#33ffd8 168px,#4effdc 176px,#6cffe0 184px,#8bffe5 192px,#adffea 200px,#d0ffef 208px,#f7fff5 216px,#ffe2de 224px,#ffc4c6 232px,#ffacb2 240px,#ff97a1 248px,#ff8693 256px,#ff7787 264px,#ff6a7c 272px,#ff5f73 280px,#ff556b 288px,#ff4c64 296px,#ff445e 304px,#ff3d58 312px,#ff3752 320px,#ff314e 328px,#ff2c49 336px,#ff2745 344px,#ff2242 352px,#ff1e3e 360px,#ff1a3b 368px,#ff1738 376px,#ff1336 384px,#ff1033 392px,#ff0d31 400px,#ff0b2e 408px,#ff082c 416px,#ff062a 424px,#ff0329 432px,#ff0127 440px,#ff0025 448px,#ff0024 456px,#ff0022 464px,#ff0021 472px,#ff001f 480px,#ff001e 488px,#ff001d 496px,#ff001c 504px,#ff001b 512px,#ff001a 520px,#ff0019 528px,#ff0018 536px,#ff0017 544px,#ff0016 552px,#ff0015 560px,#ff0014 568px,#ff0013 576px,#ff0012 584px,#ff0012 592px,#ff0011 600px,#ff0010 608px,#ff0010 616px,#ff000f 624px,#ff000e 632px,#ff000e 640px,#ff000d 648px,#ff000d 656px);"></div><div style="height:5px;background:linear-gradient(90deg,#00ffae 0px,#00ffb0 8px,#00ffb2 16px,#00ffb4 24px,#00ffb6 32px,#00ffb8 40px,#00ffba 48px,#00ffbd 56px,#00ffbf 64px,#00ffc1 72px,#00ffc4 80px,#00ffc7 88px,#00ffca 96px,#00ffcd 104px,#00ffd0 112px,#00ffd3 120px,#00ffd6 128px,#00ffda 136px,#00ffde 144px,#00ffe2 152px,#16ffe6 160px,#31ffeb 168px,#4dffef 176px,#6bfff4 184px,#8bfffa 192px,#adfeff 200px,#ccf8ff 208px,#ecf2ff 216px,#ffe0f2 224px,#ffc2d7 232px,#ffa9c1 240px,#ff95af 248px,#ff83a0 256px,#ff7593 264px,#ff6887 272px,#ff5d7d 280px,#ff5375 288px,#ff4a6d 296px,#ff4266 304px,#ff3b60 312px,#ff355a 320px,#ff2f55 328px,#ff2a50 336px,#ff254c 344px,#ff2048 352px,#ff1c44 360px,#ff1941 368px,#ff153e 376px,#ff123b 384px,#ff0f38 392px,#ff0c36 400px,#ff0933 408px,#ff0731 416px,#ff042f 424px,#ff022d 432px,#ff002b 440px,#ff0029 448px,#ff0028 456px,#ff0026 464px,#ff0025 472px,#ff0023 480px,#ff0022 488px,#ff0020 496px,#ff001f 504px,#ff001e 512px,#ff001d 520px,#ff001c 528px,#ff001b 536px,#ff001a 544px,#ff0019 552px,#ff0018 560px,#ff0017 568px,#ff0016 576px,#ff0015 584px,#ff0014 592px,#ff0014 600px,#ff0013 608px,#ff0012 616px,#ff0012 624px,#ff0011 632px,#ff0010 640px,#ff0010 648px,#ff000f 656px);"></div><div style="height:5px;background:linear-gradient(90deg,#00ffba 0px,#00ffbc 8px,#00ffbe 16px,#00ffc0 24px,#00ffc2 32px,#00ffc5 40px,#00ffc7 48px,#00ffca 56px,#00ffcd 64px,#00ffcf 72px,#00ffd2 80px,#00ffd5 88px,#00ffd9 96px,#00ffdc 104px,#00ffe0 112px,#00ffe3 120px,#00ffe7 128px,#00ffeb 136px,#00fff0 144px,#00fff4 152px,#14fff9 160px,#2ffffe 168px,#4afaff 176px,#66f5ff 184px,#82efff 192px,#9fe9ff 200px,#bce4ff 208px,#dadeff 216px,#f9d8ff 224px,#ffbfe8 232px,#ffa6d1 240px,#ff92bd 248px,#ff81ad 256px,#ff729e 264px,#ff6592 272px,#ff5a88 280px,#ff517e 288px,#ff4876 296px,#ff406e 304px,#ff3968 312px,#ff3362 320px,#ff2d5c 328px,#ff2857 336px,#ff2352 344px,#ff1f4e 352px,#ff1b4a 360px,#ff1747 368px,#ff1443 376px,#ff1040 384px,#ff0d3d 392px,#ff0a3b 400px,#ff0838 408px,#ff0536 416px,#ff0333 424px,#ff0131 432px,#ff002f 440px,#ff002d 448px,#ff002c 456px,#ff002a 464px,#ff0028 472px,#ff0027 480px,#ff0025 488px,#ff0024 496px,#ff0023 504px,#ff0021 512px,#ff0020 520px,#ff001f 528px,#ff001e 536px,#ff001d 544px,#ff001c 552px,#ff001b 560px,#ff001a 568px,#ff0019 576px,#ff0018 584px,#ff0017 592px,#ff0016 600px,#ff0016 608px,#ff0015 616px,#ff0014 624px,#ff0013 632px,#ff0013 640px,#ff0012 648px,#ff0011 656px);"></div><div style="height:5px;background:linear-gradient(90deg,#00ffc6 0px,#00ffc8 8px,#00ffca 16px,#00ffcd 24px,#00ffcf 32px,#00ffd2 40px,#00ffd5 48px,#00ffd8 56px,#00ffdb 64px,#00ffde 72px,#00ffe1 80px,#00ffe5 88px,#00ffe8 96px,#00ffec 104px,#00fff0 112px,#00fff4 120px,#00fff9 128px,#00fffd 136px,#00fcff 144px,#00f7ff 152px,#11f2ff 160px,#2aedff 168px,#44e7ff 176px,#5ee2ff 184px,#78ddff 192px,#93d7ff 200px,#afd1ff 208px,#cbccff 216px,#e7c6ff 224px,#ffbcfa 232px,#ffa4e1 240px,#ff8fcb 248px,#ff7eba 256px,#ff70aa 264px,#ff639d 272px,#ff5892 280px,#ff4e88 288px,#ff467f 296px,#ff3e77 304px,#ff3770 312px,#ff3169 320px,#ff2b63 328px,#ff265e 336px,#ff2159 344px,#ff1d55 352px,#ff1950 360px,#ff154d 368px,#ff1249 376px,#ff0f46 384px,#ff0c43 392px,#ff0940 400px,#ff063d 408px,#ff043a 416px,#ff0238 424px,#ff0036 432px,#ff0034 440px,#ff0032 448px,#ff0030 456px,#ff002e 464px,#ff002c 472px,#ff002b 480px,#ff0029 488px,#ff0028 496px,#ff0026 504px,#ff0025 512px,#ff0023 520px,#ff0022 528px,#ff0021 536px,#ff0020 544px,#ff001f 552px,#ff001e 560px,#ff001d 568px,#ff001c 576px,#ff001b 584px,#ff001a 592px,#ff0019 600px,#ff0018 608px,#ff0017 616px,#ff0017 624px,#ff0016 632px,#ff0015 640px,#ff0015 648px,#ff0014 656px);"></div><div style="height:5px;background:linear-gradient(90deg,#00ffd1 0px,#00ffd4 8px,#00ffd7 16px,#00ffd9 24px,#00ffdc 32px,#00ffdf 40px,#00ffe2 48px,#00ffe6 56px,#00ffe9 64px,#00ffec 72px,#00fff0 80px,#00fff4 88px,#00fff8 96px,#00fffc 104px,#00fdff 112px,#00f9ff 120px,#00f4ff 128px,#00efff 136px,#00eaff 144px,#00e6ff 152px,#0de1ff 160px,#25dcff 168px,#3dd7ff 176px,#56d1ff 184px,#6fccff 192px,#88c7ff 200px,#a2c1ff 208px,#bdbcff 216px,#d7b6ff 224px,#f2b0ff 232px,#ffa1f1 240px,#ff8dda 248px,#ff7cc7 256px,#ff6db7 264px,#ff61a9 272px,#ff569c 280px,#ff4c92 288px,#ff4488 296px,#ff3c7f 304px,#ff3578 312px,#ff2f71 320px,#ff296b 328px,#ff2465 336px,#ff2060 344px,#ff1b5b 352px,#ff1757 360px,#ff1452 368px,#ff104f 376px,#ff0d4b 384px,#ff0a48 392px,#ff0845 400px,#ff0542 408px,#ff033f 416px,#ff003d 424px,#ff003a 432px,#ff0038 440px,#ff0036 448px,#ff0034 456px,#ff0032 464px,#ff0030 472px,#ff002e 480px,#ff002d 488px,#ff002b 496px,#ff002a 504px,#ff0028 512px,#ff0027 520px,#ff0025 528px,#ff0024 536px,#ff0023 544px,#ff0022 552px,#ff0021 560px,#ff0020 568px,#ff001f 576px,#ff001e 584px,#ff001d 592px,#ff001c 600px,#ff001b 608px,#ff001a 616px,#ff0019 624px,#ff0018 632px,#ff0018 640px,#ff0017 648px,#ff0016 656px);"></div><div style="height:5px;background:linear-gradient(90deg,#00ffde 0px,#00ffe0 8px,#00ffe3 16px,#00ffe6 24px,#00ffea 32px,#00ffed 40px,#00fff0 48px,#00fff4 56px,#00fff8 64px,#00fffc 72px,#00feff 80px,#00faff 88px,#00f6ff 96px,#00f1ff 104px,#00edff 112px,#00e9ff 120px,#00e4ff 128px,#00e0ff 136px,#00dbff 144px,#00d6ff 152px,#0bd1ff 160px,#21ccff 168px,#38c7ff 176px,#4fc2ff 184px,#67bdff 192px,#7fb8ff 200px,#97b3ff 208px,#b0aeff 216px,#c9a8ff 224px,#e3a3ff 232px,#fd9dff 240px,#ff8ae9 248px,#ff79d4 256px,#ff6bc3 264px,#ff5eb4 272px,#ff53a7 280px,#ff4a9b 288px,#ff4191 296px,#ff3a88 304px,#ff3380 312px,#ff2d79 320px,#ff2872 328px,#ff226c 336px,#ff1e66 344px,#ff1a61 352px,#ff165d 360px,#ff1258 368px,#ff0f54 376px,#ff0c51 384px,#ff094d 392px,#ff064a 400px,#ff0447 408px,#ff0144 416px,#ff0041 424px,#ff003f 432px,#ff003c 440px,#ff003a 448px,#ff0038 456px,#ff0036 464px,#ff0034 472px,#ff0032 480px,#ff0030 488px,#ff002f 496px,#ff002d 504px,#ff002c 512px,#ff002a 520px,#ff0029 528px,#ff0027 536px,#ff0026 544px,#ff0025 552px,#ff0024 560px,#ff0023 568px,#ff0022 576px,#ff0021 584px,#ff0020 592px,#ff001f 600px,#ff001e 608px,#ff001d 616px,#ff001c 624px,#ff001b 632px,#ff001a 640px,#ff0019 648px,#ff0019 656px);"></div><div style="height:5px;background:linear-gradient(90deg,#00ffea 0px,#00ffed 8px,#00fff1 16px,#00fff4 24px,#00fff7 32px,#00fffb 40px,#00ffff 48px,#00fbff 56px,#00f7ff 64px,#00f3ff 72px,#00efff 80px,#00ebff 88px,#00e7ff 96px,#00e3ff 104px,#00deff 112px,#00daff 120px,#00d6ff 128px,#00d1ff 136px,#00cdff 144px,#00c8ff 152px,#08c3ff 160px,#1dbfff 168px,#33baff 176px,#49b5ff 184px,#60b0ff 192px,#76abff 200px,#8da6ff 208px,#a5a1ff 216px,#bd9bff 224px,#d596ff 232px,#ed91ff 240px,#ff87f8 248px,#ff76e2 256px,#ff68d0 264px,#ff5cc0 272px,#ff51b2 280px,#ff48a5 288px,#ff3f9b 296px,#ff3891 304px,#ff3188 312px,#ff2b81 320px,#ff267a 328px,#ff2173 336px,#ff1c6d 344px,#ff1868 352px,#ff1463 360px,#ff115e 368px,#ff0d5a 376px,#ff0a56 384px,#ff0752 392px,#ff054f 400px,#ff024c 408px,#ff0049 416px,#ff0046 424px,#ff0043 432px,#ff0041 440px,#ff003e 448px,#ff003c 456px,#ff003a 464px,#ff0038 472px,#ff0036 480px,#ff0034 488px,#ff0032 496px,#ff0031 504px,#ff002f 512px,#ff002e 520px,#ff002c 528px,#ff002b 536px,#ff0029 544px,#ff0028 552px,#ff0027 560px,#ff0026 568px,#ff0024 576px,#ff0023 584px,#ff0022 592px,#ff0021 600px,#ff0020 608px,#ff001f 616px,#ff001e 624px,#ff001e 632px,#ff001d 640px,#ff001c 648px,#ff001b 656px);"></div><div style="height:5px;background:linear-gradient(90deg,#00fff7 0px,#00fffa 8px,#00fffe 16px,#00fcff 24px,#00f9ff 32px,#00f5ff 40px,#00f1ff 48px,#00edff 56px,#00eaff 64px,#00e6ff 72px,#00e2ff 80px,#00deff 88px,#00daff 96px,#00d5ff 104px,#00d1ff 112px,#00cdff 120px,#00c9ff 128px,#00c4ff 136px,#00c0ff 144px,#00bbff 152px,#05b7ff 160px,#1ab2ff 168px,#2faeff 176px,#44a9ff 184px,#59a4ff 192px,#6e9fff 200px,#849aff 208px,#9b95ff 216px,#b190ff 224px,#c88bff 232px,#df86ff 240px,#f780ff 248px,#ff74f0 256px,#ff65dc 264px,#ff59cb 272px,#ff4fbd 280px,#ff45b0 288px,#ff3da4 296px,#ff369a 304px,#ff2f91 312px,#ff2989 320px,#ff2481 328px,#ff1f7a 336px,#ff1a74 344px,#ff166e 352px,#ff1269 360px,#ff0f64 368px,#ff0c60 376px,#ff095c 384px,#ff0658 392px,#ff0354 400px,#ff0151 408px,#ff004e 416px,#ff004b 424px,#ff0048 432px,#ff0045 440px,#ff0043 448px,#ff0040 456px,#ff003e 464px,#ff003c 472px,#ff003a 480px,#ff0038 488px,#ff0036 496px,#ff0034 504px,#ff0032 512px,#ff0031 520px,#ff002f 528px,#ff002e 536px,#ff002c 544px,#ff002b 552px,#ff002a 560px,#ff0029 568px,#ff0027 576px,#ff0026 584px,#ff0025 592px,#ff0024 600px,#ff0023 608px,#ff0022 616px,#ff0021 624px,#ff0020 632px,#ff001f 640px,#ff001e 648px,#ff001d 656px);"></div><div style="height:5px;background:linear-gradient(90deg,#00faff 0px,#00f6ff 8px,#00f3ff 16px,#00efff 24px,#00ecff 32px,#00e8ff 40px,#00e4ff 48px,#00e1ff 56px,#00ddff 64px,#00d9ff 72px,#00d5ff 80px,#00d1ff 88px,#00cdff 96px,#00c9ff 104px,#00c5ff 112px,#00c1ff 120px,#00bdff 128px,#00b8ff 136px,#00b4ff 144px,#00b0ff 152px,#03abff 160px,#17a7ff 168px,#2ba2ff 176px,#3f9eff 184px,#5399ff 192px,#6794ff 200px,#7c90ff 208px,#918bff 216px,#a786ff 224px,#bd81ff 232px,#d37cff 240px,#e977ff 248px,#ff71fe 256px,#ff63e9 264px,#ff57d7 272px,#ff4cc8 280px,#ff43ba 288px,#ff3bae 296px,#ff33a3 304px,#ff2d99 312px,#ff2791 320px,#ff2289 328px,#ff1d82 336px,#ff187b 344px,#ff1475 352px,#ff116f 360px,#ff0d6a 368px,#ff0a66 376px,#ff0761 384px,#ff045d 392px,#ff0259 400px,#ff0056 408px,#ff0052 416px,#ff004f 424px,#ff004c 432px,#ff0049 440px,#ff0047 448px,#ff0044 456px,#ff0042 464px,#ff0040 472px,#ff003e 480px,#ff003c 488px,#ff003a 496px,#ff0038 504px,#ff0036 512px,#ff0034 520px,#ff0033 528px,#ff0031 536px,#ff0030 544px,#ff002e 552px,#ff002d 560px,#ff002c 568px,#ff002a 576px,#ff0029 584px,#ff0028 592px,#ff0027 600px,#ff0026 608px,#ff0025 616px,#ff0024 624px,#ff0023 632px,#ff0022 640px,#ff0021 648px,#ff0020 656px);"></div><div style="height:5px;background:linear-gradient(90deg,#00eeff 0px,#00eaff 8px,#00e7ff 16px,#00e3ff 24px,#00e0ff 32px,#00dcff 40px,#00d8ff 48px,#00d5ff 56px,#00d1ff 64px,#00cdff 72px,#00caff 80px,#00c6ff 88px,#00c2ff 96px,#00beff 104px,#00baff 112px,#00b6ff 120px,#00b2ff 128px,#00aeff 136px,#00a9ff 144px,#00a5ff 152px,#01a1ff 160px,#149cff 168px,#2798ff 176px,#3a94ff 184px,#4d8fff 192px,#618aff 200px,#7586ff 208px,#8981ff 216px,#9d7cff 224px,#b278ff 232px,#c773ff 240px,#dc6eff 248px,#f269ff 256px,#ff60f6 264px,#ff54e3 272px,#ff4ad3 280px,#ff40c4 288px,#ff38b7 296px,#ff31ac 304px,#ff2ba2 312px,#ff2599 320px,#ff2090 328px,#ff1b89 336px,#ff1782 344px,#ff137c 352px,#ff0f76 360px,#ff0c70 368px,#ff086b 376px,#ff0567 384px,#ff0363 392px,#ff005f 400px,#ff005b 408px,#ff0057 416px,#ff0054 424px,#ff0051 432px,#ff004e 440px,#ff004b 448px,#ff0048 456px,#ff0046 464px,#ff0044 472px,#ff0041 480px,#ff003f 488px,#ff003d 496px,#ff003b 504px,#ff0039 512px,#ff0038 520px,#ff0036 528px,#ff0034 536px,#ff0033 544px,#ff0031 552px,#ff0030 560px,#ff002f 568px,#ff002d 576px,#ff002c 584px,#ff002b 592px,#ff002a 600px,#ff0028 608px,#ff0027 616px,#ff0026 624px,#ff0025 632px,#ff0024 640px,#ff0023 648px,#ff0022 656px);"></div><div style="height:5px;background:linear-gradient(90deg,#00e2ff 0px,#00dfff 8px,#00dcff 16px,#00d8ff 24px,#00d5ff 32px,#00d1ff 40px,#00ceff 48px,#00caff 56px,#00c6ff 64px,#00c3ff 72px,#00bfff 80px,#00bbff 88px,#00b7ff 96px,#00b3ff 104px,#00b0ff 112px,#00acff 120px,#00a8ff 128px,#00a4ff 136px,#009fff 144px,#009bff 152px,#0097ff 160px,#1193ff 168px,#238fff 176px,#368aff 184px,#4886ff 192px,#5b81ff 200px,#6e7dff 208px,#8178ff 216px,#9574ff 224px,#a96fff 232px,#bd6aff 240px,#d166ff 248px,#e561ff 256px,#fa5cff 264px,#ff51f0 272px,#ff47de 280px,#ff3ecf 288px,#ff36c1 296px,#ff2fb5 304px,#ff29ab 312px,#ff23a1 320px,#ff1e98 328px,#ff1990 336px,#ff1589 344px,#ff1182 352px,#ff0d7c 360px,#ff0a77 368px,#ff0771 376px,#ff046d 384px,#ff0168 392px,#ff0064 400px,#ff0060 408px,#ff005c 416px,#ff0059 424px,#ff0055 432px,#ff0052 440px,#ff004f 448px,#ff004d 456px,#ff004a 464px,#ff0048 472px,#ff0045 480px,#ff0043 488px,#ff0041 496px,#ff003f 504px,#ff003d 512px,#ff003b 520px,#ff0039 528px,#ff0038 536px,#ff0036 544px,#ff0034 552px,#ff0033 560px,#ff0032 568px,#ff0030 576px,#ff002f 584px,#ff002e 592px,#ff002c 600px,#ff002b 608px,#ff002a 616px,#ff0029 624px,#ff0028 632px,#ff0027 640px,#ff0026 648px,#ff0025 656px);"></div><div style="height:5px;background:linear-gradient(90deg,#00d8ff 0px,#00d4ff 8px,#00d1ff 16px,#00ceff 24px,#00caff 32px,#00c7ff 40px,#00c3ff 48px,#00c0ff 56px,#00bcff 64px,#00b9ff 72px,#00b5ff 80px,#00b1ff 88px,#00aeff 96px,#00aaff 104px,#00a6ff 112px,#00a2ff 120px,#009eff 128px,#009aff 136px,#0096ff 144px,#0092ff 152px,#008eff 160px,#0f8aff 168px,#2086ff 176px,#3282ff 184px,#447dff 192px,#5679ff 200px,#6875ff 208px,#7a70ff 216px,#8d6cff 224px,#a067ff 232px,#b363ff 240px,#c65eff 248px,#da59ff 256px,#ee55ff 264px,#ff4ffc 272px,#ff45ea 280px,#ff3cd9 288px,#ff34cb 296px,#ff2dbf 304px,#ff26b3 312px,#ff21a9 320px,#ff1ca0 328px,#ff1798 336px,#ff1390 344px,#ff0f89 352px,#ff0b83 360px,#ff087d 368px,#ff0577 376px,#ff0272 384px,#ff006e 392px,#ff0069 400px,#ff0065 408px,#ff0061 416px,#ff005d 424px,#ff005a 432px,#ff0057 440px,#ff0054 448px,#ff0051 456px,#ff004e 464px,#ff004c 472px,#ff0049 480px,#ff0047 488px,#ff0045 496px,#ff0042 504px,#ff0040 512px,#ff003f 520px,#ff003d 528px,#ff003b 536px,#ff0039 544px,#ff0038 552px,#ff0036 560px,#ff0035 568px,#ff0033 576px,#ff0032 584px,#ff0030 592px,#ff002f 600px,#ff002e 608px,#ff002d 616px,#ff002c 624px,#ff002a 632px,#ff0029 640px,#ff0028 648px,#ff0027 656px);"></div><div style="height:5px;background:linear-gradient(90deg,#00ceff 0px,#00cbff 8px,#00c7ff 16px,#00c4ff 24px,#00c1ff 32px,#00bdff 40px,#00baff 48px,#00b6ff 56px,#00b3ff 64px,#00afff 72px,#00acff 80px,#00a8ff 88px,#00a5ff 96px,#00a1ff 104px,#009dff 112px,#0099ff 120px,#0096ff 128px,#0092ff 136px,#008eff 144px,#008aff 152px,#0086ff 160px,#0d82ff 168px,#1d7eff 176px,#2e7aff 184px,#3f76ff 192px,#5171ff 200px,#626dff 208px,#7469ff 216px,#8665ff 224px,#9860ff 232px,#aa5cff 240px,#bd57ff 248px,#cf53ff 256px,#e24eff 264px,#f649ff 272px,#ff42f5 280px,#ff39e4 288px,#ff31d5 296px,#ff2ac8 304px,#ff24bc 312px,#ff1fb2 320px,#ff1aa8 328px,#ff159f 336px,#ff1197 344px,#ff0d90 352px,#ff0a89 360px,#ff0683 368px,#ff037d 376px,#ff0178 384px,#ff0073 392px,#ff006e 400px,#ff006a 408px,#ff0066 416px,#ff0062 424px,#ff005f 432px,#ff005b 440px,#ff0058 448px,#ff0055 456px,#ff0052 464px,#ff0050 472px,#ff004d 480px,#ff004b 488px,#ff0048 496px,#ff0046 504px,#ff0044 512px,#ff0042 520px,#ff0040 528px,#ff003e 536px,#ff003c 544px,#ff003b 552px,#ff0039 560px,#ff0038 568px,#ff0036 576px,#ff0035 584px,#ff0033 592px,#ff0032 600px,#ff0031 608px,#ff002f 616px,#ff002e 624px,#ff002d 632px,#ff002c 640px,#ff002b 648px,#ff002a 656px);"></div><div style="height:5px;background:linear-gradient(90deg,#00c5ff 0px,#00c1ff 8px,#00beff 16px,#00bbff 24px,#00b8ff 32px,#00b4ff 40px,#00b1ff 48px,#00aeff 56px,#00aaff 64px,#00a7ff 72px,#00a3ff 80px,#00a0ff 88px,#009cff 96px,#0099ff 104px,#0095ff 112px,#0091ff 120px,#008eff 128px,#008aff 136px,#0086ff 144px,#0082ff 152px,#007eff 160px,#0b7aff 168px,#1b77ff 176px,#2b73ff 184px,#3b6eff 192px,#4c6aff 200px,#5d66ff 208px,#6e62ff 216px,#7f5eff 224px,#905aff 232px,#a255ff 240px,#b451ff 248px,#c64cff 256px,#d848ff 264px,#ea43ff 272px,#fd3fff 280px,#ff37ef 288px,#ff2fe0 296px,#ff28d2 304px,#ff22c5 312px,#ff1dba 320px,#ff18b0 328px,#ff13a7 336px,#ff0f9e 344px,#ff0b97 352px,#ff0890 360px,#ff0589 368px,#ff0283 376px,#ff007e 384px,#ff0079 392px,#ff0074 400px,#ff006f 408px,#ff006b 416px,#ff0067 424px,#ff0063 432px,#ff0060 440px,#ff005d 448px,#ff0059 456px,#ff0057 464px,#ff0054 472px,#ff0051 480px,#ff004e 488px,#ff004c 496px,#ff004a 504px,#ff0048 512px,#ff0045 520px,#ff0043 528px,#ff0042 536px,#ff0040 544px,#ff003e 552px,#ff003c 560px,#ff003b 568px,#ff0039 576px,#ff0038 584px,#ff0036 592px,#ff0035 600px,#ff0033 608px,#ff0032 616px,#ff0031 624px,#ff0030 632px,#ff002e 640px,#ff002d 648px,#ff002c 656px);"></div><div style="height:5px;background:linear-gradient(90deg,#00bcff 0px,#00b9ff 8px,#00b6ff 16px,#00b2ff 24px,#00afff 32px,#00acff 40px,#00a9ff 48px,#00a5ff 56px,#00a2ff 64px,#009fff 72px,#009bff 80px,#0098ff 88px,#0094ff 96px,#0091ff 104px,#008dff 112px,#008aff 120px,#0086ff 128px,#0082ff 136px,#007fff 144px,#007bff 152px,#0077ff 160px,#0973ff 168px,#1870ff 176px,#286cff 184px,#3868ff 192px,#4864ff 200px,#5860ff 208px,#685cff 216px,#7958ff 224px,#8953ff 232px,#9a4fff 240px,#ab4bff 248px,#bd47ff 256px,#ce42ff 264px,#e03eff 272px,#f23aff 280px,#ff34fa 288px,#ff2dea 296px,#ff26db 304px,#ff20ce 312px,#ff1ac3 320px,#ff16b8 328px,#ff11ae 336px,#ff0da6 344px,#ff099e 352px,#ff0696 360px,#ff0390 368px,#ff0089 376px,#ff0084 384px,#ff007e 392px,#ff0079 400px,#ff0075 408px,#ff0070 416px,#ff006c 424px,#ff0068 432px,#ff0064 440px,#ff0061 448px,#ff005e 456px,#ff005b 464px,#ff0058 472px,#ff0055 480px,#ff0052 488px,#ff0050 496px,#ff004d 504px,#ff004b 512px,#ff0049 520px,#ff0047 528px,#ff0045 536px,#ff0043 544px,#ff0041 552px,#ff003f 560px,#ff003e 568px,#ff003c 576px,#ff003a 584px,#ff0039 592px,#ff0038 600px,#ff0036 608px,#ff0035 616px,#ff0033 624px,#ff0032 632px,#ff0031 640px,#ff0030 648px,#ff002f 656px);"></div><div style="height:5px;background:linear-gradient(90deg,#00b4ff 0px,#00b1ff 8px,#00aeff 16px,#00aaff 24px,#00a7ff 32px,#00a4ff 40px,#00a1ff 48px,#009eff 56px,#009aff 64px,#0097ff 72px,#0094ff 80px,#0090ff 88px,#008dff 96px,#008aff 104px,#0086ff 112px,#0083ff 120px,#007fff 128px,#007cff 136px,#0078ff 144px,#0074ff 152px,#0071ff 160px,#076dff 168px,#1669ff 176px,#2565ff 184px,#3462ff 192px,#445eff 200px,#535aff 208px,#6356ff 216px,#7352ff 224px,#834eff 232px,#934aff 240px,#a446ff 248px,#b441ff 256px,#c53dff 264px,#d639ff 272px,#e735ff 280px,#f930ff 288px,#ff2af4 296px,#ff23e5 304px,#ff1ed7 312px,#ff18cb 320px,#ff13c0 328px,#ff0fb6 336px,#ff0bad 344px,#ff08a5 352px,#ff049d 360px,#ff0196 368px,#ff0090 376px,#ff008a 384px,#ff0084 392px,#ff007f 400px,#ff007a 408px,#ff0075 416px,#ff0071 424px,#ff006d 432px,#ff0069 440px,#ff0065 448px,#ff0062 456px,#ff005f 464px,#ff005c 472px,#ff0059 480px,#ff0056 488px,#ff0054 496px,#ff0051 504px,#ff004f 512px,#ff004c 520px,#ff004a 528px,#ff0048 536px,#ff0046 544px,#ff0044 552px,#ff0042 560px,#ff0041 568px,#ff003f 576px,#ff003d 584px,#ff003c 592px,#ff003a 600px,#ff0039 608px,#ff0037 616px,#ff0036 624px,#ff0035 632px,#ff0034 640px,#ff0032 648px,#ff0031 656px);"></div><div style="height:5px;background:linear-gradient(90deg,#00acff 0px,#00a9ff 8px,#00a6ff 16px,#00a3ff 24px,#00a0ff 32px,#009dff 40px,#009aff 48px,#0097ff 56px,#0093ff 64px,#0090ff 72px,#008dff 80px,#008aff 88px,#0086ff 96px,#0083ff 104px,#007fff 112px,#007cff 120px,#0079ff 128px,#0075ff 136px,#0072ff 144px,#006eff 152px,#006aff 160px,#0567ff 168px,#1463ff 176px,#225fff 184px,#315cff 192px,#4058ff 200px,#4f54ff 208px,#5e50ff 216px,#6e4cff 224px,#7d48ff 232px,#8d45ff 240px,#9d41ff 248px,#ad3cff 256px,#bd38ff 264px,#cd34ff 272px,#de30ff 280px,#ee2cff 288px,#ff28ff 296px,#ff21ef 304px,#ff1be1 312px,#ff16d4 320px,#ff11c8 328px,#ff0dbe 336px,#ff09b5 344px,#ff06ac 352px,#ff02a4 360px,#ff009d 368px,#ff0096 376px,#ff008f 384px,#ff008a 392px,#ff0084 400px,#ff007f 408px,#ff007a 416px,#ff0076 424px,#ff0072 432px,#ff006e 440px,#ff006a 448px,#ff0066 456px,#ff0063 464px,#ff0060 472px,#ff005d 480px,#ff005a 488px,#ff0057 496px,#ff0055 504px,#ff0052 512px,#ff0050 520px,#ff004e 528px,#ff004c 536px,#ff0049 544px,#ff0048 552px,#ff0046 560px,#ff0044 568px,#ff0042 576px,#ff0040 584px,#ff003f 592px,#ff003d 600px,#ff003c 608px,#ff003a 616px,#ff0039 624px,#ff0037 632px,#ff0036 640px,#ff0035 648px,#ff0034 656px);"></div><div style="height:5px;background:linear-gradient(90deg,#00a5ff 0px,#00a2ff 8px,#009fff 16px,#009cff 24px,#0099ff 32px,#0096ff 40px,#0093ff 48px,#0090ff 56px,#008dff 64px,#0089ff 72px,#0086ff 80px,#0083ff 88px,#0080ff 96px,#007cff 104px,#0079ff 112px,#0076ff 120px,#0072ff 128px,#006fff 136px,#006cff 144px,#0068ff 152px,#0065ff 160px,#0461ff 168px,#125eff 176px,#205aff 184px,#2e56ff 192px,#3c53ff 200px,#4b4fff 208px,#5a4bff 216px,#6847ff 224px,#7744ff 232px,#8740ff 240px,#963cff 248px,#a538ff 256px,#b534ff 264px,#c530ff 272px,#d52cff 280px,#e528ff 288px,#f524ff 296px,#ff1ff9 304px,#ff19ea 312px,#ff14dd 320px,#ff0fd1 328px,#ff0bc6 336px,#ff07bc 344px,#ff04b3 352px,#ff01ab 360px,#ff00a3 368px,#ff009c 376px,#ff0095 384px,#ff008f 392px,#ff008a 400px,#ff0084 408px,#ff007f 416px,#ff007b 424px,#ff0076 432px,#ff0072 440px,#ff006e 448px,#ff006b 456px,#ff0067 464px,#ff0064 472px,#ff0061 480px,#ff005e 488px,#ff005b 496px,#ff0059 504px,#ff0056 512px,#ff0054 520px,#ff0051 528px,#ff004f 536px,#ff004d 544px,#ff004b 552px,#ff0049 560px,#ff0047 568px,#ff0045 576px,#ff0043 584px,#ff0042 592px,#ff0040 600px,#ff003e 608px,#ff003d 616px,#ff003c 624px,#ff003a 632px,#ff0039 640px,#ff0037 648px,#ff0036 656px);"></div><div style="height:5px;background:linear-gradient(90deg,#009eff 0px,#009bff 8px,#0098ff 16px,#0095ff 24px,#0092ff 32px,#008fff 40px,#008cff 48px,#0089ff 56px,#0086ff 64px,#0083ff 72px,#0080ff 80px,#007dff 88px,#007aff 96px,#0076ff 104px,#0073ff 112px,#0070ff 120px,#006dff 128px,#0069ff 136px,#0066ff 144px,#0063ff 152px,#005fff 160px,#025cff 168px,#1058ff 176px,#1d55ff 184px,#2b51ff 192px,#394eff 200px,#474aff 208px,#5546ff 216px,#6443ff 224px,#723fff 232px,#813bff 240px,#9037ff 248px,#9e34ff 256px,#ae30ff 264px,#bd2cff 272px,#cc28ff 280px,#dc24ff 288px,#eb20ff 296px,#fb1cff 304px,#ff17f4 312px,#ff12e6 320px,#ff0dd9 328px,#ff09ce 336px,#ff05c4 344px,#ff02ba 352px,#ff00b2 360px,#ff00aa 368px,#ff00a2 376px,#ff009b 384px,#ff0095 392px,#ff008f 400px,#ff008a 408px,#ff0085 416px,#ff0080 424px,#ff007b 432px,#ff0077 440px,#ff0073 448px,#ff006f 456px,#ff006c 464px,#ff0068 472px,#ff0065 480px,#ff0062 488px,#ff005f 496px,#ff005c 504px,#ff005a 512px,#ff0057 520px,#ff0055 528px,#ff0052 536px,#ff0050 544px,#ff004e 552px,#ff004c 560px,#ff004a 568px,#ff0048 576px,#ff0046 584px,#ff0045 592px,#ff0043 600px,#ff0041 608px,#ff0040 616px,#ff003e 624px,#ff003d 632px,#ff003b 640px,#ff003a 648px,#ff0039 656px);"></div><div style="height:5px;background:linear-gradient(90deg,#0098ff 0px,#0095ff 8px,#0092ff 16px,#008fff 24px,#008cff 32px,#0089ff 40px,#0086ff 48px,#0083ff 56px,#0080ff 64px,#007dff 72px,#007aff 80px,#0077ff 88px,#0074ff 96px,#0071ff 104px,#006eff 112px,#006aff 120px,#0067ff 128px,#0064ff 136px,#0061ff 144px,#005dff 152px,#005aff 160px,#0157ff 168px,#0e53ff 176px,#1b50ff 184px,#294cff 192px,#3649ff 200px,#4445ff 208px,#5142ff 216px,#5f3eff 224px,#6d3bff 232px,#7b37ff 240px,#8a33ff 248px,#982fff 256px,#a72cff 264px,#b528ff 272px,#c424ff 280px,#d320ff 288px,#e21cff 296px,#f218ff 304px,#ff14fd 312px,#ff0fef 320px,#ff0be2 328px,#ff07d6 336px,#ff03cb 344px,#ff00c1 352px,#ff00b8 360px,#ff00b0 368px,#ff00a9 376px,#ff00a2 384px,#ff009b 392px,#ff0095 400px,#ff008f 408px,#ff008a 416px,#ff0085 424px,#ff0080 432px,#ff007c 440px,#ff0078 448px,#ff0074 456px,#ff0070 464px,#ff006c 472px,#ff0069 480px,#ff0066 488px,#ff0063 496px,#ff0060 504px,#ff005d 512px,#ff005b 520px,#ff0058 528px,#ff0056 536px,#ff0053 544px,#ff0051 552px,#ff004f 560px,#ff004d 568px,#ff004b 576px,#ff0049 584px,#ff0047 592px,#ff0046 600px,#ff0044 608px,#ff0042 616px,#ff0041 624px,#ff003f 632px,#ff003e 640px,#ff003d 648px,#ff003b 656px);"></div><div style="height:5px;background:linear-gradient(90deg,#0092ff 0px,#008fff 8px,#008cff 16px,#0089ff 24px,#0086ff 32px,#0083ff 40px,#0081ff 48px,#007eff 56px,#007bff 64px,#0078ff 72px,#0075ff 80px,#0072ff 88px,#006fff 96px,#006bff 104px,#0068ff 112px,#0065ff 120px,#0062ff 128px,#005fff 136px,#005cff 144px,#0058ff 152px,#0055ff 160px,#0052ff 168px,#0c4fff 176px,#194bff 184px,#2648ff 192px,#3344ff 200px,#4041ff 208px,#4e3eff 216px,#5b3aff 224px,#6936ff 232px,#7633ff 240px,#842fff 248px,#922cff 256px,#a028ff 264px,#ae24ff 272px,#bd21ff 280px,#cb1dff 288px,#da19ff 296px,#e915ff 304px,#f711ff 312px,#ff0df8 320px,#ff09ea 328px,#ff05de 336px,#ff01d3 344px,#ff00c9 352px,#ff00bf 360px,#ff00b7 368px,#ff00af 376px,#ff00a8 384px,#ff00a1 392px,#ff009b 400px,#ff0095 408px,#ff008f 416px,#ff008a 424px,#ff0085 432px,#ff0080 440px,#ff007c 448px,#ff0078 456px,#ff0074 464px,#ff0071 472px,#ff006d 480px,#ff006a 488px,#ff0067 496px,#ff0064 504px,#ff0061 512px,#ff005e 520px,#ff005c 528px,#ff0059 536px,#ff0057 544px,#ff0054 552px,#ff0052 560px,#ff0050 568px,#ff004e 576px,#ff004c 584px,#ff004a 592px,#ff0049 600px,#ff0047 608px,#ff0045 616px,#ff0044 624px,#ff0042 632px,#ff0041 640px,#ff003f 648px,#ff003e 656px);"></div><div style="height:5px;background:linear-gradient(90deg,#008cff 0px,#0089ff 8px,#0086ff 16px,#0084ff 24px,#0081ff 32px,#007eff 40px,#007bff 48px,#0078ff 56px,#0075ff 64px,#0072ff 72px,#006fff 80px,#006cff 88px,#0069ff 96px,#0066ff 104px,#0063ff 112px,#0060ff 120px,#005dff 128px,#005aff 136px,#0057ff 144px,#0054ff 152px,#0051ff 160px,#004dff 168px,#0b4aff 176px,#1747ff 184px,#2444ff 192px,#3040ff 200px,#3d3dff 208px,#4a39ff 216px,#5736ff 224px,#6433ff 232px,#722fff 240px,#7f2cff 248px,#8d28ff 256px,#9a25ff 264px,#a821ff 272px,#b61dff 280px,#c41aff 288px,#d216ff 296px,#e012ff 304px,#ef0eff 312px,#fd0bff 320px,#ff06f3 328px,#ff03e6 336px,#ff00db 344px,#ff00d0 352px,#ff00c6 360px,#ff00be 368px,#ff00b5 376px,#ff00ae 384px,#ff00a7 392px,#ff00a0 400px,#ff009a 408px,#ff0094 416px,#ff008f 424px,#ff008a 432px,#ff0085 440px,#ff0081 448px,#ff007d 456px,#ff0079 464px,#ff0075 472px,#ff0071 480px,#ff006e 488px,#ff006b 496px,#ff0068 504px,#ff0065 512px,#ff0062 520px,#ff005f 528px,#ff005d 536px,#ff005a 544px,#ff0058 552px,#ff0056 560px,#ff0053 568px,#ff0051 576px,#ff004f 584px,#ff004d 592px,#ff004c 600px,#ff004a 608px,#ff0048 616px,#ff0046 624px,#ff0045 632px,#ff0043 640px,#ff0042 648px,#ff0040 656px);"></div><div style="height:5px;background:linear-gradient(90deg,#0086ff 0px,#0084ff 8px,#0081ff 16px,#007eff 24px,#007bff 32px,#0079ff 40px,#0076ff 48px,#0073ff 56px,#0070ff 64px,#006dff 72px,#006aff 80px,#0068ff 88px,#0065ff 96px,#0062ff 104px,#005fff 112px,#005cff 120px,#0059ff 128px,#0056ff 136px,#0053ff 144px,#004fff 152px,#004cff 160px,#0049ff 168px,#0946ff 176px,#1543ff 184px,#2140ff 192px,#2e3cff 200px,#3a39ff 208px,#4736ff 216px,#5332ff 224px,#602fff 232px,#6d2cff 240px,#7a28ff 248px,#8725ff 256px,#9421ff 264px,#a21eff 272px,#af1aff 280px,#bd17ff 288px,#ca13ff 296px,#d80fff 304px,#e60cff 312px,#f408ff 320px,#ff04fc 328px,#ff00ee 336px,#ff00e2 344px,#ff00d8 352px,#ff00ce 360px,#ff00c4 368px,#ff00bc 376px,#ff00b4 384px,#ff00ad 392px,#ff00a6 400px,#ff00a0 408px,#ff009a 416px,#ff0094 424px,#ff008f 432px,#ff008a 440px,#ff0085 448px,#ff0081 456px,#ff007d 464px,#ff0079 472px,#ff0075 480px,#ff0072 488px,#ff006f 496px,#ff006b 504px,#ff0068 512px,#ff0065 520px,#ff0063 528px,#ff0060 536px,#ff005d 544px,#ff005b 552px,#ff0059 560px,#ff0057 568px,#ff0054 576px,#ff0052 584px,#ff0050 592px,#ff004e 600px,#ff004d 608px,#ff004b 616px,#ff0049 624px,#ff0047 632px,#ff0046 640px,#ff0044 648px,#ff0043 656px);"></div><div style="height:5px;background:linear-gradient(90deg,#0081ff 0px,#007fff 8px,#007cff 16px,#0079ff 24px,#0076ff 32px,#0074ff 40px,#0071ff 48px,#006eff 56px,#006bff 64px,#0069ff 72px,#0066ff 80px,#0063ff 88px,#0060ff 96px,#005dff 104px,#005aff 112px,#0057ff 120px,#0054ff 128px,#0051ff 136px,#004eff 144px,#004bff 152px,#0048ff 160px,#0045ff 168px,#0842ff 176px,#133fff 184px,#1f3cff 192px,#2b39ff 200px,#3735ff 208px,#4432ff 216px,#502fff 224px,#5c2cff 232px,#6928ff 240px,#7525ff 248px,#8222ff 256px,#8f1eff 264px,#9c1bff 272px,#a917ff 280px,#b614ff 288px,#c310ff 296px,#d10dff 304px,#de09ff 312px,#ec05ff 320px,#fa02ff 328px,#ff00f7 336px,#ff00ea 344px,#ff00df 352px,#ff00d5 360px,#ff00cb 368px,#ff00c2 376px,#ff00ba 384px,#ff00b3 392px,#ff00ac 400px,#ff00a5 408px,#ff009f 416px,#ff0099 424px,#ff0094 432px,#ff008f 440px,#ff008a 448px,#ff0086 456px,#ff0081 464px,#ff007d 472px,#ff007a 480px,#ff0076 488px,#ff0072 496px,#ff006f 504px,#ff006c 512px,#ff0069 520px,#ff0066 528px,#ff0063 536px,#ff0061 544px,#ff005e 552px,#ff005c 560px,#ff005a 568px,#ff0057 576px,#ff0055 584px,#ff0053 592px,#ff0051 600px,#ff004f 608px,#ff004e 616px,#ff004c 624px,#ff004a 632px,#ff0048 640px,#ff0047 648px,#ff0045 656px);"></div><div style="height:5px;background:linear-gradient(90deg,#007cff 0px,#007aff 8px,#0077ff 16px,#0074ff 24px,#0072ff 32px,#006fff 40px,#006cff 48px,#006aff 56px,#0067ff 64px,#0064ff 72px,#0061ff 80px,#005fff 88px,#005cff 96px,#0059ff 104px,#0056ff 112px,#0053ff 120px,#0050ff 128px,#004dff 136px,#004aff 144px,#0047ff 152px,#0044ff 160px,#0041ff 168px,#063eff 176px,#123bff 184px,#1d38ff 192px,#2935ff 200px,#3532ff 208px,#412fff 216px,#4d2cff 224px,#5928ff 232px,#6525ff 240px,#7122ff 248px,#7d1fff 256px,#8a1bff 264px,#9618ff 272px,#a314ff 280px,#b011ff 288px,#bd0eff 296px,#ca0aff 304px,#d707ff 312px,#e403ff 320px,#f100ff 328px,#ff00ff 336px,#ff00f2 344px,#ff00e7 352px,#ff00dc 360px,#ff00d2 368px,#ff00c9 376px,#ff00c1 384px,#ff00b9 392px,#ff00b1 400px,#ff00ab 408px,#ff00a4 416px,#ff009e 424px,#ff0099 432px,#ff0094 440px,#ff008f 448px,#ff008a 456px,#ff0086 464px,#ff0082 472px,#ff007e 480px,#ff007a 488px,#ff0076 496px,#ff0073 504px,#ff0070 512px,#ff006d 520px,#ff006a 528px,#ff0067 536px,#ff0064 544px,#ff0062 552px,#ff005f 560px,#ff005d 568px,#ff005b 576px,#ff0058 584px,#ff0056 592px,#ff0054 600px,#ff0052 608px,#ff0050 616px,#ff004f 624px,#ff004d 632px,#ff004b 640px,#ff004a 648px,#ff0048 656px);"></div><div style="height:5px;background:linear-gradient(90deg,#0077ff 0px,#0075ff 8px,#0072ff 16px,#0070ff 24px,#006dff 32px,#006bff 40px,#0068ff 48px,#0065ff 56px,#0063ff 64px,#0060ff 72px,#005dff 80px,#005aff 88px,#0058ff 96px,#0055ff 104px,#0052ff 112px,#004fff 120px,#004cff 128px,#0049ff 136px,#0047ff 144px,#0044ff 152px,#0041ff 160px,#003eff 168px,#053bff 176px,#1038ff 184px,#1b35ff 192px,#2732ff 200px,#322fff 208px,#3e2cff 216px,#4928ff 224px,#5525ff 232px,#6122ff 240px,#6d1fff 248px,#791cff 256px,#8518ff 264px,#9115ff 272px,#9e12ff 280px,#aa0fff 288px,#b70bff 296px,#c308ff 304px,#d004ff 312px,#dd01ff 320px,#ea00ff 328px,#f700ff 336px,#ff00fa 344px,#ff00ee 352px,#ff00e3 360px,#ff00d9 368px,#ff00d0 376px,#ff00c7 384px,#ff00bf 392px,#ff00b7 400px,#ff00b0 408px,#ff00aa 416px,#ff00a4 424px,#ff009e 432px,#ff0099 440px,#ff0094 448px,#ff008f 456px,#ff008a 464px,#ff0086 472px,#ff0082 480px,#ff007e 488px,#ff007a 496px,#ff0077 504px,#ff0074 512px,#ff0070 520px,#ff006d 528px,#ff006a 536px,#ff0068 544px,#ff0065 552px,#ff0062 560px,#ff0060 568px,#ff005e 576px,#ff005b 584px,#ff0059 592px,#ff0057 600px,#ff0055 608px,#ff0053 616px,#ff0051 624px,#ff0050 632px,#ff004e 640px,#ff004c 648px,#ff004b 656px);"></div><div style="height:5px;background:linear-gradient(90deg,#0073ff 0px,#0070ff 8px,#006eff 16px,#006bff 24px,#0069ff 32px,#0066ff 40px,#0064ff 48px,#0061ff 56px,#005eff 64px,#005cff 72px,#0059ff 80px,#0056ff 88px,#0054ff 96px,#0051ff 104px,#004eff 112px,#004bff 120px,#0049ff 128px,#0046ff 136px,#0043ff 144px,#0040ff 152px,#003dff 160px,#003aff 168px,#0437ff 176px,#0f34ff 184px,#1a31ff 192px,#252eff 200px,#302bff 208px,#3b28ff 216px,#4725ff 224px,#5222ff 232px,#5d1fff 240px,#691cff 248px,#7519ff 256px,#8116ff 264px,#8c13ff 272px,#980fff 280px,#a40cff 288px,#b109ff 296px,#bd06ff 304px,#c902ff 312px,#d600ff 320px,#e200ff 328px,#ef00ff 336px,#fc00ff 344px,#ff00f6 352px,#ff00ea 360px,#ff00e0 368px,#ff00d6 376px,#ff00cd 384px,#ff00c5 392px,#ff00bd 400px,#ff00b6 408px,#ff00af 416px,#ff00a9 424px,#ff00a3 432px,#ff009e 440px,#ff0098 448px,#ff0093 456px,#ff008f 464px,#ff008a 472px,#ff0086 480px,#ff0082 488px,#ff007e 496px,#ff007b 504px,#ff0077 512px,#ff0074 520px,#ff0071 528px,#ff006e 536px,#ff006b 544px,#ff0068 552px,#ff0066 560px,#ff0063 568px,#ff0061 576px,#ff005f 584px,#ff005c 592px,#ff005a 600px,#ff0058 608px,#ff0056 616px,#ff0054 624px,#ff0052 632px,#ff0051 640px,#ff004f 648px,#ff004d 656px);"></div><div style="height:5px;background:linear-gradient(90deg,#006fff 0px,#006cff 8px,#006aff 16px,#0067ff 24px,#0065ff 32px,#0062ff 40px,#0060ff 48px,#005dff 56px,#005aff 64px,#0058ff 72px,#0055ff 80px,#0053ff 88px,#0050ff 96px,#004dff 104px,#004aff 112px,#0048ff 120px,#0045ff 128px,#0042ff 136px,#003fff 144px,#003dff 152px,#003aff 160px,#0037ff 168px,#0334ff 176px,#0d31ff 184px,#182eff 192px,#232bff 200px,#2e29ff 208px,#3926ff 216px,#4423ff 224px,#4f20ff 232px,#5a1dff 240px,#6519ff 248px,#7116ff 256px,#7c13ff 264px,#8810ff 272px,#930dff 280px,#9f0aff 288px,#ab07ff 296px,#b703ff 304px,#c300ff 312px,#cf00ff 320px,#db00ff 328px,#e700ff 336px,#f400ff 344px,#ff00fe 352px,#ff00f2 360px,#ff00e7 368px,#ff00dd 376px,#ff00d4 384px,#ff00cb 392px,#ff00c3 400px,#ff00bc 408px,#ff00b5 416px,#ff00ae 424px,#ff00a8 432px,#ff00a2 440px,#ff009d 448px,#ff0098 456px,#ff0093 464px,#ff008f 472px,#ff008a 480px,#ff0086 488px,#ff0082 496px,#ff007f 504px,#ff007b 512px,#ff0078 520px,#ff0075 528px,#ff0071 536px,#ff006f 544px,#ff006c 552px,#ff0069 560px,#ff0066 568px,#ff0064 576px,#ff0062 584px,#ff005f 592px,#ff005d 600px,#ff005b 608px,#ff0059 616px,#ff0057 624px,#ff0055 632px,#ff0053 640px,#ff0051 648px,#ff0050 656px);"></div><div style="height:5px;background:linear-gradient(90deg,#006bff 0px,#0068ff 8px,#0066ff 16px,#0063ff 24px,#0061ff 32px,#005eff 40px,#005cff 48px,#0059ff 56px,#0057ff 64px,#0054ff 72px,#0051ff 80px,#004fff 88px,#004cff 96px,#004aff 104px,#0047ff 112px,#0044ff 120px,#0042ff 128px,#003fff 136px,#003cff 144px,#0039ff 152px,#0037ff 160px,#0034ff 168px,#0131ff 176px,#0c2eff 184px,#162bff 192px,#2129ff 200px,#2c26ff 208px,#3623ff 216px,#4120ff 224px,#4c1dff 232px,#571aff 240px,#6217ff 248px,#6d14ff 256px,#7811ff 264px,#830eff 272px,#8f0bff 280px,#9a08ff 288px,#a605ff 296px,#b101ff 304px,#bd00ff 312px,#c900ff 320px,#d400ff 328px,#e000ff 336px,#ec00ff 344px,#f900ff 352px,#ff00f9 360px,#ff00ee 368px,#ff00e4 376px,#ff00da 384px,#ff00d1 392px,#ff00c9 400px,#ff00c1 408px,#ff00ba 416px,#ff00b4 424px,#ff00ad 432px,#ff00a7 440px,#ff00a2 448px,#ff009d 456px,#ff0098 464px,#ff0093 472px,#ff008f 480px,#ff008a 488px,#ff0086 496px,#ff0083 504px,#ff007f 512px,#ff007b 520px,#ff0078 528px,#ff0075 536px,#ff0072 544px,#ff006f 552px,#ff006c 560px,#ff006a 568px,#ff0067 576px,#ff0065 584px,#ff0062 592px,#ff0060 600px,#ff005e 608px,#ff005c 616px,#ff005a 624px,#ff0058 632px,#ff0056 640px,#ff0054 648px,#ff0052 656px);"></div><div style="height:5px;background:linear-gradient(90deg,#0067ff 0px,#0064ff 8px,#0062ff 16px,#005fff 24px,#005dff 32px,#005aff 40px,#0058ff 48px,#0056ff 56px,#0053ff 64px,#0050ff 72px,#004eff 80px,#004bff 88px,#0049ff 96px,#0046ff 104px,#0044ff 112px,#0041ff 120px,#003eff 128px,#003cff 136px,#0039ff 144px,#0036ff 152px,#0034ff 160px,#0031ff 168px,#002eff 176px,#0b2bff 184px,#1529ff 192px,#1f26ff 200px,#2923ff 208px,#3420ff 216px,#3e1dff 224px,#491aff 232px,#5417ff 240px,#5e15ff 248px,#6912ff 256px,#740fff 264px,#7f0cff 272px,#8a09ff 280px,#9506ff 288px,#a003ff 296px,#ac00ff 304px,#b700ff 312px,#c300ff 320px,#ce00ff 328px,#da00ff 336px,#e500ff 344px,#f100ff 352px,#fd00ff 360px,#ff00f5 368px,#ff00eb 376px,#ff00e1 384px,#ff00d8 392px,#ff00cf 400px,#ff00c7 408px,#ff00c0 416px,#ff00b9 424px,#ff00b2 432px,#ff00ac 440px,#ff00a7 448px,#ff00a1 456px,#ff009c 464px,#ff0097 472px,#ff0093 480px,#ff008f 488px,#ff008a 496px,#ff0086 504px,#ff0083 512px,#ff007f 520px,#ff007c 528px,#ff0079 536px,#ff0075 544px,#ff0072 552px,#ff0070 560px,#ff006d 568px,#ff006a 576px,#ff0068 584px,#ff0065 592px,#ff0063 600px,#ff0061 608px,#ff005f 616px,#ff005d 624px,#ff005b 632px,#ff0059 640px,#ff0057 648px,#ff0055 656px);"></div><div style="height:5px;background:linear-gradient(90deg,#0063ff 0px,#0060ff 8px,#005eff 16px,#005cff 24px,#0059ff 32px,#0057ff 40px,#0054ff 48px,#0052ff 56px,#0050ff 64px,#004dff 72px,#004bff 80px,#0048ff 88px,#0046ff 96px,#0043ff 104px,#0040ff 112px,#003eff 120px,#003bff 128px,#0039ff 136px,#0036ff 144px,#0033ff 152px,#0031ff 160px,#002eff 168px,#002bff 176px,#0929ff 184px,#1326ff 192px,#1d23ff 200px,#2720ff 208px,#321eff 216px,#3c1bff 224px,#4618ff 232px,#5115ff 240px,#5b12ff 248px,#660fff 256px,#700cff 264px,#7b0aff 272px,#8607ff 280px,#9104ff 288px,#9c01ff 296px,#a700ff 304px,#b200ff 312px,#bd00ff 320px,#c800ff 328px,#d300ff 336px,#df00ff 344px,#ea00ff 352px,#f600ff 360px,#ff00fc 368px,#ff00f1 376px,#ff00e7 384px,#ff00de 392px,#ff00d5 400px,#ff00cd 408px,#ff00c5 416px,#ff00be 424px,#ff00b8 432px,#ff00b1 440px,#ff00ac 448px,#ff00a6 456px,#ff00a1 464px,#ff009c 472px,#ff0097 480px,#ff0093 488px,#ff008e 496px,#ff008a 504px,#ff0087 512px,#ff0083 520px,#ff007f 528px,#ff007c 536px,#ff0079 544px,#ff0076 552px,#ff0073 560px,#ff0070 568px,#ff006d 576px,#ff006b 584px,#ff0068 592px,#ff0066 600px,#ff0064 608px,#ff0061 616px,#ff005f 624px,#ff005d 632px,#ff005b 640px,#ff0059 648px,#ff0058 656px);"></div><div style="height:5px;background:linear-gradient(90deg,#005fff 0px,#005dff 8px,#005bff 16px,#0058ff 24px,#0056ff 32px,#0053ff 40px,#0051ff 48px,#004fff 56px,#004cff 64px,#004aff 72px,#0047ff 80px,#0045ff 88px,#0042ff 96px,#0040ff 104px,#003dff 112px,#003bff 120px,#0038ff 128px,#0036ff 136px,#0033ff 144px,#0031ff 152px,#002eff 160px,#002bff 168px,#0029ff 176px,#0826ff 184px,#1223ff 192px,#1c21ff 200px,#261eff 208px,#301bff 216px,#3a18ff 224px,#4416ff 232px,#4e13ff 240px,#5810ff 248px,#620dff 256px,#6d0aff 264px,#7708ff 272px,#8205ff 280px,#8c02ff 288px,#9700ff 296px,#a200ff 304px,#ac00ff 312px,#b700ff 320px,#c200ff 328px,#cd00ff 336px,#d800ff 344px,#e400ff 352px,#ef00ff 360px,#fa00ff 368px,#ff00f8 376px,#ff00ee 384px,#ff00e4 392px,#ff00db 400px,#ff00d3 408px,#ff00cb 416px,#ff00c4 424px,#ff00bd 432px,#ff00b7 440px,#ff00b0 448px,#ff00ab 456px,#ff00a5 464px,#ff00a0 472px,#ff009b 480px,#ff0097 488px,#ff0093 496px,#ff008e 504px,#ff008a 512px,#ff0087 520px,#ff0083 528px,#ff0080 536px,#ff007c 544px,#ff0079 552px,#ff0076 560px,#ff0073 568px,#ff0071 576px,#ff006e 584px,#ff006b 592px,#ff0069 600px,#ff0067 608px,#ff0064 616px,#ff0062 624px,#ff0060 632px,#ff005e 640px,#ff005c 648px,#ff005a 656px);"></div><div style="height:5px;background:linear-gradient(90deg,#005cff 0px,#0059ff 8px,#0057ff 16px,#0055ff 24px,#0053ff 32px,#0050ff 40px,#004eff 48px,#004bff 56px,#0049ff 64px,#0047ff 72px,#0044ff 80px,#0042ff 88px,#003fff 96px,#003dff 104px,#003aff 112px,#0038ff 120px,#0036ff 128px,#0033ff 136px,#0030ff 144px,#002eff 152px,#002bff 160px,#0029ff 168px,#0026ff 176px,#0724ff 184px,#1121ff 192px,#1a1eff 200px,#241cff 208px,#2e19ff 216px,#3716ff 224px,#4114ff 232px,#4b11ff 240px,#550eff 248px,#5f0bff 256px,#6908ff 264px,#7406ff 272px,#7e03ff 280px,#8800ff 288px,#9300ff 296px,#9d00ff 304px,#a800ff 312px,#b200ff 320px,#bd00ff 328px,#c800ff 336px,#d200ff 344px,#dd00ff 352px,#e800ff 360px,#f300ff 368px,#ff00ff 376px,#ff00f5 384px,#ff00eb 392px,#ff00e1 400px,#ff00d9 408px,#ff00d1 416px,#ff00c9 424px,#ff00c2 432px,#ff00bc 440px,#ff00b5 448px,#ff00b0 456px,#ff00aa 464px,#ff00a5 472px,#ff00a0 480px,#ff009b 488px,#ff0097 496px,#ff0092 504px,#ff008e 512px,#ff008b 520px,#ff0087 528px,#ff0083 536px,#ff0080 544px,#ff007d 552px,#ff007a 560px,#ff0077 568px,#ff0074 576px,#ff0071 584px,#ff006f 592px,#ff006c 600px,#ff006a 608px,#ff0067 616px,#ff0065 624px,#ff0063 632px,#ff0061 640px,#ff005f 648px,#ff005d 656px);"></div><div style="height:5px;background:linear-gradient(90deg,#0058ff 0px,#0056ff 8px,#0054ff 16px,#0052ff 24px,#004fff 32px,#004dff 40px,#004bff 48px,#0048ff 56px,#0046ff 64px,#0044ff 72px,#0041ff 80px,#003fff 88px,#003dff 96px,#003aff 104px,#0038ff 112px,#0035ff 120px,#0033ff 128px,#0030ff 136px,#002eff 144px,#002bff 152px,#0029ff 160px,#0026ff 168px,#0024ff 176px,#0621ff 184px,#0f1fff 192px,#191cff 200px,#2219ff 208px,#2c17ff 216px,#3514ff 224px,#3f11ff 232px,#490fff 240px,#520cff 248px,#5c09ff 256px,#6607ff 264px,#7004ff 272px,#7a01ff 280px,#8400ff 288px,#8e00ff 296px,#9900ff 304px,#a300ff 312px,#ad00ff 320px,#b800ff 328px,#c200ff 336px,#cd00ff 344px,#d700ff 352px,#e200ff 360px,#ed00ff 368px,#f800ff 376px,#ff00fb 384px,#ff00f1 392px,#ff00e8 400px,#ff00df 408px,#ff00d6 416px,#ff00cf 424px,#ff00c8 432px,#ff00c1 440px,#ff00ba 448px,#ff00b4 456px,#ff00af 464px,#ff00a9 472px,#ff00a4 480px,#ff009f 488px,#ff009b 496px,#ff0096 504px,#ff0092 512px,#ff008e 520px,#ff008b 528px,#ff0087 536px,#ff0083 544px,#ff0080 552px,#ff007d 560px,#ff007a 568px,#ff0077 576px,#ff0074 584px,#ff0072 592px,#ff006f 600px,#ff006d 608px,#ff006a 616px,#ff0068 624px,#ff0066 632px,#ff0063 640px,#ff0061 648px,#ff005f 656px);"></div><div style="height:5px;background:linear-gradient(90deg,#0055ff 0px,#0053ff 8px,#0051ff 16px,#004eff 24px,#004cff 32px,#004aff 40px,#0048ff 48px,#0045ff 56px,#0043ff 64px,#0041ff 72px,#003eff 80px,#003cff 88px,#003aff 96px,#0037ff 104px,#0035ff 112px,#0033ff 120px,#0030ff 128px,#002eff 136px,#002bff 144px,#0029ff 152px,#0026ff 160px,#0024ff 168px,#0021ff 176px,#051fff 184px,#0e1cff 192px,#171aff 200px,#2017ff 208px,#2a15ff 216px,#3312ff 224px,#3d0fff 232px,#460dff 240px,#500aff 248px,#5907ff 256px,#6305ff 264px,#6d02ff 272px,#7600ff 280px,#8000ff 288px,#8a00ff 296px,#9400ff 304px,#9e00ff 312px,#a800ff 320px,#b300ff 328px,#bd00ff 336px,#c700ff 344px,#d200ff 352px,#dc00ff 360px,#e700ff 368px,#f100ff 376px,#fc00ff 384px,#ff00f8 392px,#ff00ee 400px,#ff00e5 408px,#ff00dc 416px,#ff00d4 424px,#ff00cd 432px,#ff00c6 440px,#ff00bf 448px,#ff00b9 456px,#ff00b3 464px,#ff00ae 472px,#ff00a9 480px,#ff00a4 488px,#ff009f 496px,#ff009a 504px,#ff0096 512px,#ff0092 520px,#ff008e 528px,#ff008b 536px,#ff0087 544px,#ff0084 552px,#ff0080 560px,#ff007d 568px,#ff007a 576px,#ff0077 584px,#ff0075 592px,#ff0072 600px,#ff0070 608px,#ff006d 616px,#ff006b 624px,#ff0068 632px,#ff0066 640px,#ff0064 648px,#ff0062 656px);"></div><div style="height:5px;background:linear-gradient(90deg,#0052ff 0px,#0050ff 8px,#004eff 16px,#004bff 24px,#0049ff 32px,#0047ff 40px,#0045ff 48px,#0043ff 56px,#0040ff 64px,#003eff 72px,#003cff 80px,#0039ff 88px,#0037ff 96px,#0035ff 104px,#0032ff 112px,#0030ff 120px,#002eff 128px,#002bff 136px,#0029ff 144px,#0026ff 152px,#0024ff 160px,#0022ff 168px,#001fff 176px,#041dff 184px,#0d1aff 192px,#1618ff 200px,#1f15ff 208px,#2813ff 216px,#3110ff 224px,#3a0dff 232px,#440bff 240px,#4d08ff 248px,#5606ff 256px,#6003ff 264px,#6900ff 272px,#7300ff 280px,#7d00ff 288px,#8600ff 296px,#9000ff 304px,#9a00ff 312px,#a400ff 320px,#ae00ff 328px,#b800ff 336px,#c200ff 344px,#cc00ff 352px,#d600ff 360px,#e100ff 368px,#eb00ff 376px,#f500ff 384px,#ff00fe 392px,#ff00f4 400px,#ff00eb 408px,#ff00e2 416px,#ff00da 424px,#ff00d2 432px,#ff00cb 440px,#ff00c4 448px,#ff00be 456px,#ff00b8 464px,#ff00b2 472px,#ff00ad 480px,#ff00a8 488px,#ff00a3 496px,#ff009e 504px,#ff009a 512px,#ff0096 520px,#ff0092 528px,#ff008e 536px,#ff008b 544px,#ff0087 552px,#ff0084 560px,#ff0081 568px,#ff007e 576px,#ff007b 584px,#ff0078 592px,#ff0075 600px,#ff0073 608px,#ff0070 616px,#ff006e 624px,#ff006b 632px,#ff0069 640px,#ff0067 648px,#ff0065 656px);"></div><div style="height:5px;background:linear-gradient(90deg,#004fff 0px,#004dff 8px,#004bff 16px,#0049ff 24px,#0046ff 32px,#0044ff 40px,#0042ff 48px,#0040ff 56px,#003eff 64px,#003bff 72px,#0039ff 80px,#0037ff 88px,#0035ff 96px,#0032ff 104px,#0030ff 112px,#002eff 120px,#002bff 128px,#0029ff 136px,#0027ff 144px,#0024ff 152px,#0022ff 160px,#001fff 168px,#001dff 176px,#031bff 184px,#0c18ff 192px,#1416ff 200px,#1d13ff 208px,#2611ff 216px,#2f0eff 224px,#380cff 232px,#4109ff 240px,#4b07ff 248px,#5404ff 256px,#5d01ff 264px,#6600ff 272px,#7000ff 280px,#7900ff 288px,#8300ff 296px,#8c00ff 304px,#9600ff 312px,#9f00ff 320px,#a900ff 328px,#b300ff 336px,#bd00ff 344px,#c700ff 352px,#d100ff 360px,#db00ff 368px,#e500ff 376px,#ef00ff 384px,#f900ff 392px,#ff00fa 400px,#ff00f1 408px,#ff00e8 416px,#ff00df 424px,#ff00d8 432px,#ff00d0 440px,#ff00c9 448px,#ff00c3 456px,#ff00bd 464px,#ff00b7 472px,#ff00b1 480px,#ff00ac 488px,#ff00a7 496px,#ff00a3 504px,#ff009e 512px,#ff009a 520px,#ff0096 528px,#ff0092 536px,#ff008e 544px,#ff008b 552px,#ff0087 560px,#ff0084 568px,#ff0081 576px,#ff007e 584px,#ff007b 592px,#ff0078 600px,#ff0076 608px,#ff0073 616px,#ff0070 624px,#ff006e 632px,#ff006c 640px,#ff006a 648px,#ff0067 656px);"></div><div style="height:5px;background:linear-gradient(90deg,#004cff 0px,#004aff 8px,#0048ff 16px,#0046ff 24px,#0044ff 32px,#0042ff 40px,#003fff 48px,#003dff 56px,#003bff 64px,#0039ff 72px,#0037ff 80px,#0034ff 88px,#0032ff 96px,#0030ff 104px,#002eff 112px,#002bff 120px,#0029ff 128px,#0027ff 136px,#0024ff 144px,#0022ff 152px,#0020ff 160px,#001dff 168px,#001bff 176px,#0219ff 184px,#0b16ff 192px,#1314ff 200px,#1c11ff 208px,#250fff 216px,#2d0cff 224px,#360aff 232px,#3f07ff 240px,#4805ff 248px,#5102ff 256px,#5a00ff 264px,#6300ff 272px,#6d00ff 280px,#7600ff 288px,#7f00ff 296px,#8800ff 304px,#9200ff 312px,#9b00ff 320px,#a500ff 328px,#ae00ff 336px,#b800ff 344px,#c200ff 352px,#cb00ff 360px,#d500ff 368px,#df00ff 376px,#e900ff 384px,#f300ff 392px,#fd00ff 400px,#ff00f7 408px,#ff00ee 416px,#ff00e5 424px,#ff00dd 432px,#ff00d6 440px,#ff00ce 448px,#ff00c8 456px,#ff00c1 464px,#ff00bc 472px,#ff00b6 480px,#ff00b1 488px,#ff00ab 496px,#ff00a7 504px,#ff00a2 512px,#ff009e 520px,#ff009a 528px,#ff0096 536px,#ff0092 544px,#ff008e 552px,#ff008b 560px,#ff0087 568px,#ff0084 576px,#ff0081 584px,#ff007e 592px,#ff007b 600px,#ff0079 608px,#ff0076 616px,#ff0073 624px,#ff0071 632px,#ff006f 640px,#ff006c 648px,#ff006a 656px);"></div><div style="height:5px;background:linear-gradient(90deg,#0049ff 0px,#0047ff 8px,#0045ff 16px,#0043ff 24px,#0041ff 32px,#003fff 40px,#003dff 48px,#003bff 56px,#0038ff 64px,#0036ff 72px,#0034ff 80px,#0032ff 88px,#0030ff 96px,#002dff 104px,#002bff 112px,#0029ff 120px,#0027ff 128px,#0024ff 136px,#0022ff 144px,#0020ff 152px,#001eff 160px,#001bff 168px,#0019ff 176px,#0117ff 184px,#0a14ff 192px,#1212ff 200px,#1b0fff 208px,#230dff 216px,#2c0bff 224px,#3408ff 232px,#3d06ff 240px,#4603ff 248px,#4f01ff 256px,#5800ff 264px,#6100ff 272px,#6a00ff 280px,#7300ff 288px,#7c00ff 296px,#8500ff 304px,#8e00ff 312px,#9700ff 320px,#a100ff 328px,#aa00ff 336px,#b300ff 344px,#bd00ff 352px,#c600ff 360px,#d000ff 368px,#da00ff 376px,#e300ff 384px,#ed00ff 392px,#f700ff 400px,#ff00fd 408px,#ff00f4 416px,#ff00eb 424px,#ff00e3 432px,#ff00db 440px,#ff00d4 448px,#ff00cd 456px,#ff00c6 464px,#ff00c0 472px,#ff00ba 480px,#ff00b5 488px,#ff00b0 496px,#ff00ab 504px,#ff00a6 512px,#ff00a2 520px,#ff009d 528px,#ff0099 536px,#ff0095 544px,#ff0092 552px,#ff008e 560px,#ff008b 568px,#ff0087 576px,#ff0084 584px,#ff0081 592px,#ff007e 600px,#ff007c 608px,#ff0079 616px,#ff0076 624px,#ff0074 632px,#ff0071 640px,#ff006f 648px,#ff006d 656px);"></div><div style="height:5px;background:linear-gradient(90deg,#0047ff 0px,#0045ff 8px,#0043ff 16px,#0041ff 24px,#003fff 32px,#003cff 40px,#003aff 48px,#0038ff 56px,#0036ff 64px,#0034ff 72px,#0032ff 80px,#0030ff 88px,#002dff 96px,#002bff 104px,#0029ff 112px,#0027ff 120px,#0025ff 128px,#0022ff 136px,#0020ff 144px,#001eff 152px,#001cff 160px,#0019ff 168px,#0017ff 176px,#0015ff 184px,#0912ff 192px,#1110ff 200px,#190eff 208px,#220bff 216px,#2a09ff 224px,#3307ff 232px,#3b04ff 240px,#4402ff 248px,#4c00ff 256px,#5500ff 264px,#5e00ff 272px,#6700ff 280px,#6f00ff 288px,#7800ff 296px,#8100ff 304px,#8a00ff 312px,#9300ff 320px,#9d00ff 328px,#a600ff 336px,#af00ff 344px,#b800ff 352px,#c200ff 360px,#cb00ff 368px,#d400ff 376px,#de00ff 384px,#e700ff 392px,#f100ff 400px,#fb00ff 408px,#ff00fa 416px,#ff00f1 424px,#ff00e8 432px,#ff00e0 440px,#ff00d9 448px,#ff00d2 456px,#ff00cb 464px,#ff00c5 472px,#ff00bf 480px,#ff00b9 488px,#ff00b4 496px,#ff00af 504px,#ff00aa 512px,#ff00a6 520px,#ff00a1 528px,#ff009d 536px,#ff0099 544px,#ff0095 552px,#ff0092 560px,#ff008e 568px,#ff008b 576px,#ff0088 584px,#ff0084 592px,#ff0081 600px,#ff007f 608px,#ff007c 616px,#ff0079 624px,#ff0077 632px,#ff0074 640px,#ff0072 648px,#ff006f 656px);"></div><div style="height:5px;background:linear-gradient(90deg,#0044ff 0px,#0042ff 8px,#0040ff 16px,#003eff 24px,#003cff 32px,#003aff 40px,#0038ff 48px,#0036ff 56px,#0034ff 64px,#0032ff 72px,#0030ff 80px,#002dff 88px,#002bff 96px,#0029ff 104px,#0027ff 112px,#0025ff 120px,#0023ff 128px,#0020ff 136px,#001eff 144px,#001cff 152px,#001aff 160px,#0017ff 168px,#0015ff 176px,#0013ff 184px,#0811ff 192px,#100eff 200px,#180cff 208px,#200aff 216px,#2807ff 224px,#3105ff 232px,#3903ff 240px,#4200ff 248px,#4a00ff 256px,#5300ff 264px,#5b00ff 272px,#6400ff 280px,#6c00ff 288px,#7500ff 296px,#7e00ff 304px,#8700ff 312px,#9000ff 320px,#9900ff 328px,#a200ff 336px,#ab00ff 344px,#b400ff 352px,#bd00ff 360px,#c600ff 368px,#cf00ff 376px,#d900ff 384px,#e200ff 392px,#eb00ff 400px,#f500ff 408px,#fe00ff 416px,#ff00f6 424px,#ff00ee 432px,#ff00e6 440px,#ff00de 448px,#ff00d7 456px,#ff00d0 464px,#ff00c9 472px,#ff00c3 480px,#ff00be 488px,#ff00b8 496px,#ff00b3 504px,#ff00ae 512px,#ff00a9 520px,#ff00a5 528px,#ff00a1 536px,#ff009d 544px,#ff0099 552px,#ff0095 560px,#ff0091 568px,#ff008e 576px,#ff008b 584px,#ff0088 592px,#ff0085 600px,#ff0082 608px,#ff007f 616px,#ff007c 624px,#ff0079 632px,#ff0077 640px,#ff0075 648px,#ff0072 656px);"></div><div style="height:5px;background:linear-gradient(90deg,#0042ff 0px,#0040ff 8px,#003eff 16px,#003cff 24px,#003aff 32px,#0038ff 40px,#0036ff 48px,#0034ff 56px,#0031ff 64px,#002fff 72px,#002dff 80px,#002bff 88px,#0029ff 96px,#0027ff 104px,#0025ff 112px,#0023ff 120px,#0021ff 128px,#001eff 136px,#001cff 144px,#001aff 152px,#0018ff 160px,#0016ff 168px,#0013ff 176px,#0011ff 184px,#070fff 192px,#0f0dff 200px,#170aff 208px,#1f08ff 216px,#2706ff 224px,#2f03ff 232px,#3701ff 240px,#4000ff 248px,#4800ff 256px,#5000ff 264px,#5900ff 272px,#6100ff 280px,#6a00ff 288px,#7200ff 296px,#7b00ff 304px,#8300ff 312px,#8c00ff 320px,#9500ff 328px,#9e00ff 336px,#a700ff 344px,#af00ff 352px,#b800ff 360px,#c100ff 368px,#ca00ff 376px,#d400ff 384px,#dd00ff 392px,#e600ff 400px,#ef00ff 408px,#f900ff 416px,#ff00fc 424px,#ff00f3 432px,#ff00eb 440px,#ff00e3 448px,#ff00dc 456px,#ff00d5 464px,#ff00ce 472px,#ff00c8 480px,#ff00c2 488px,#ff00bd 496px,#ff00b7 504px,#ff00b2 512px,#ff00ad 520px,#ff00a9 528px,#ff00a5 536px,#ff00a0 544px,#ff009c 552px,#ff0099 560px,#ff0095 568px,#ff0091 576px,#ff008e 584px,#ff008b 592px,#ff0088 600px,#ff0085 608px,#ff0082 616px,#ff007f 624px,#ff007c 632px,#ff007a 640px,#ff0077 648px,#ff0075 656px);"></div><div style="height:5px;background:linear-gradient(90deg,#003fff 0px,#003dff 8px,#003bff 16px,#0039ff 24px,#0037ff 32px,#0035ff 40px,#0033ff 48px,#0031ff 56px,#002fff 64px,#002dff 72px,#002bff 80px,#0029ff 88px,#0027ff 96px,#0025ff 104px,#0023ff 112px,#0021ff 120px,#001fff 128px,#001dff 136px,#001aff 144px,#0018ff 152px,#0016ff 160px,#0014ff 168px,#0012ff 176px,#000fff 184px,#060dff 192px,#0e0bff 200px,#1509ff 208px,#1d07ff 216px,#2504ff 224px,#2d02ff 232px,#3500ff 240px,#3e00ff 248px,#4600ff 256px,#4e00ff 264px,#5600ff 272px,#5e00ff 280px,#6700ff 288px,#6f00ff 296px,#7800ff 304px,#8000ff 312px,#8900ff 320px,#9100ff 328px,#9a00ff 336px,#a300ff 344px,#ab00ff 352px,#b400ff 360px,#bd00ff 368px,#c600ff 376px,#cf00ff 384px,#d800ff 392px,#e100ff 400px,#ea00ff 408px,#f300ff 416px,#fc00ff 424px,#ff00f9 432px,#ff00f0 440px,#ff00e8 448px,#ff00e1 456px,#ff00da 464px,#ff00d3 472px,#ff00cd 480px,#ff00c7 488px,#ff00c1 496px,#ff00bb 504px,#ff00b6 512px,#ff00b1 520px,#ff00ad 528px,#ff00a8 536px,#ff00a4 544px,#ff00a0 552px,#ff009c 560px,#ff0098 568px,#ff0095 576px,#ff0091 584px,#ff008e 592px,#ff008b 600px,#ff0088 608px,#ff0085 616px,#ff0082 624px,#ff007f 632px,#ff007d 640px,#ff007a 648px,#ff0078 656px);"></div><div style="height:5px;background:linear-gradient(90deg,#003dff 0px,#003bff 8px,#0039ff 16px,#0037ff 24px,#0035ff 32px,#0033ff 40px,#0031ff 48px,#002fff 56px,#002dff 64px,#002bff 72px,#0029ff 80px,#0027ff 88px,#0025ff 96px,#0023ff 104px,#0021ff 112px,#001fff 120px,#001dff 128px,#001bff 136px,#0019ff 144px,#0016ff 152px,#0014ff 160px,#0012ff 168px,#0010ff 176px,#000eff 184px,#050cff 192px,#0d09ff 200px,#1407ff 208px,#1c05ff 216px,#2403ff 224px,#2c01ff 232px,#3400ff 240px,#3c00ff 248px,#4400ff 256px,#4c00ff 264px,#5400ff 272px,#5c00ff 280px,#6400ff 288px,#6c00ff 296px,#7500ff 304px,#7d00ff 312px,#8500ff 320px,#8e00ff 328px,#9600ff 336px,#9f00ff 344px,#a700ff 352px,#b000ff 360px,#b900ff 368px,#c100ff 376px,#ca00ff 384px,#d300ff 392px,#dc00ff 400px,#e400ff 408px,#ed00ff 416px,#f600ff 424px,#ff00ff 432px,#ff00f6 440px,#ff00ee 448px,#ff00e6 456px,#ff00df 464px,#ff00d8 472px,#ff00d1 480px,#ff00cb 488px,#ff00c5 496px,#ff00c0 504px,#ff00ba 512px,#ff00b5 520px,#ff00b1 528px,#ff00ac 536px,#ff00a8 544px,#ff00a4 552px,#ff00a0 560px,#ff009c 568px,#ff0098 576px,#ff0095 584px,#ff0091 592px,#ff008e 600px,#ff008b 608px,#ff0088 616px,#ff0085 624px,#ff0082 632px,#ff007f 640px,#ff007d 648px,#ff007a 656px);"></div><div style="height:5px;background:linear-gradient(90deg,#003bff 0px,#0039ff 8px,#0037ff 16px,#0035ff 24px,#0033ff 32px,#0031ff 40px,#002fff 48px,#002dff 56px,#002bff 64px,#0029ff 72px,#0027ff 80px,#0025ff 88px,#0023ff 96px,#0021ff 104px,#001fff 112px,#001dff 120px,#001bff 128px,#0019ff 136px,#0017ff 144px,#0015ff 152px,#0013ff 160px,#0011ff 168px,#000eff 176px,#000cff 184px,#040aff 192px,#0c08ff 200px,#1306ff 208px,#1b04ff 216px,#2301ff 224px,#2a00ff 232px,#3200ff 240px,#3a00ff 248px,#4200ff 256px,#4a00ff 264px,#5200ff 272px,#5a00ff 280px,#6200ff 288px,#6a00ff 296px,#7200ff 304px,#7a00ff 312px,#8200ff 320px,#8a00ff 328px,#9300ff 336px,#9b00ff 344px,#a300ff 352px,#ac00ff 360px,#b400ff 368px,#bd00ff 376px,#c500ff 384px,#ce00ff 392px,#d700ff 400px,#df00ff 408px,#e800ff 416px,#f100ff 424px,#fa00ff 432px,#ff00fb 440px,#ff00f3 448px,#ff00eb 456px,#ff00e4 464px,#ff00dc 472px,#ff00d6 480px,#ff00d0 488px,#ff00ca 496px,#ff00c4 504px,#ff00bf 512px,#ff00b9 520px,#ff00b5 528px,#ff00b0 536px,#ff00ab 544px,#ff00a7 552px,#ff00a3 560px,#ff009f 568px,#ff009b 576px,#ff0098 584px,#ff0094 592px,#ff0091 600px,#ff008e 608px,#ff008b 616px,#ff0088 624px,#ff0085 632px,#ff0082 640px,#ff0080 648px,#ff007d 656px);"></div><div style="height:5px;background:linear-gradient(90deg,#0039ff 0px,#0037ff 8px,#0035ff 16px,#0033ff 24px,#0031ff 32px,#002fff 40px,#002dff 48px,#002bff 56px,#0029ff 64px,#0027ff 72px,#0025ff 80px,#0023ff 88px,#0021ff 96px,#001fff 104px,#001dff 112px,#001bff 120px,#0019ff 128px,#0017ff 136px,#0015ff 144px,#0013ff 152px,#0011ff 160px,#000fff 168px,#000dff 176px,#000bff 184px,#0309ff 192px,#0b07ff 200px,#1204ff 208px,#1a02ff 216px,#2100ff 224px,#2900ff 232px,#3000ff 240px,#3800ff 248px,#4000ff 256px,#4800ff 264px,#4f00ff 272px,#5700ff 280px,#5f00ff 288px,#6700ff 296px,#6f00ff 304px,#7700ff 312px,#7f00ff 320px,#8700ff 328px,#8f00ff 336px,#9800ff 344px,#a000ff 352px,#a800ff 360px,#b000ff 368px,#b900ff 376px,#c100ff 384px,#ca00ff 392px,#d200ff 400px,#db00ff 408px,#e300ff 416px,#ec00ff 424px,#f400ff 432px,#fd00ff 440px,#ff00f8 448px,#ff00f0 456px,#ff00e8 464px,#ff00e1 472px,#ff00da 480px,#ff00d4 488px,#ff00ce 496px,#ff00c8 504px,#ff00c3 512px,#ff00bd 520px,#ff00b8 528px,#ff00b4 536px,#ff00af 544px,#ff00ab 552px,#ff00a7 560px,#ff00a3 568px,#ff009f 576px,#ff009b 584px,#ff0098 592px,#ff0094 600px,#ff0091 608px,#ff008e 616px,#ff008b 624px,#ff0088 632px,#ff0085 640px,#ff0082 648px,#ff0080 656px);"></div><div style="height:5px;background:linear-gradient(90deg,#0036ff 0px,#0035ff 8px,#0033ff 16px,#0031ff 24px,#002fff 32px,#002dff 40px,#002bff 48px,#0029ff 56px,#0027ff 64px,#0025ff 72px,#0023ff 80px,#0021ff 88px,#0020ff 96px,#001eff 104px,#001cff 112px,#001aff 120px,#0018ff 128px,#0016ff 136px,#0014ff 144px,#0012ff 152px,#000fff 160px,#000dff 168px,#000bff 176px,#0009ff 184px,#0207ff 192px,#0a05ff 200px,#1103ff 208px,#1801ff 216px,#2000ff 224px,#2700ff 232px,#2f00ff 240px,#3600ff 248px,#3e00ff 256px,#4600ff 264px,#4d00ff 272px,#5500ff 280px,#5d00ff 288px,#6500ff 296px,#6c00ff 304px,#7400ff 312px,#7c00ff 320px,#8400ff 328px,#8c00ff 336px,#9400ff 344px,#9c00ff 352px,#a400ff 360px,#ac00ff 368px,#b500ff 376px,#bd00ff 384px,#c500ff 392px,#ce00ff 400px,#d600ff 408px,#de00ff 416px,#e700ff 424px,#ef00ff 432px,#f800ff 440px,#ff00fe 448px,#ff00f5 456px,#ff00ed 464px,#ff00e6 472px,#ff00df 480px,#ff00d9 488px,#ff00d2 496px,#ff00cc 504px,#ff00c7 512px,#ff00c1 520px,#ff00bc 528px,#ff00b8 536px,#ff00b3 544px,#ff00ae 552px,#ff00aa 560px,#ff00a6 568px,#ff00a2 576px,#ff009f 584px,#ff009b 592px,#ff0097 600px,#ff0094 608px,#ff0091 616px,#ff008e 624px,#ff008b 632px,#ff0088 640px,#ff0085 648px,#ff0083 656px);"></div><div style="height:5px;background:linear-gradient(90deg,#0034ff 0px,#0033ff 8px,#0031ff 16px,#002fff 24px,#002dff 32px,#002bff 40px,#0029ff 48px,#0027ff 56px,#0025ff 64px,#0024ff 72px,#0022ff 80px,#0020ff 88px,#001eff 96px,#001cff 104px,#001aff 112px,#0018ff 120px,#0016ff 128px,#0014ff 136px,#0012ff 144px,#0010ff 152px,#000eff 160px,#000cff 168px,#000aff 176px,#0008ff 184px,#0206ff 192px,#0904ff 200px,#1002ff 208px,#1700ff 216px,#1f00ff 224px,#2600ff 232px,#2d00ff 240px,#3500ff 248px,#3c00ff 256px,#4400ff 264px,#4b00ff 272px,#5300ff 280px,#5a00ff 288px,#6200ff 296px,#6a00ff 304px,#7100ff 312px,#7900ff 320px,#8100ff 328px,#8900ff 336px,#9100ff 344px,#9900ff 352px,#a100ff 360px,#a900ff 368px,#b100ff 376px,#b900ff 384px,#c100ff 392px,#c900ff 400px,#d100ff 408px,#da00ff 416px,#e200ff 424px,#ea00ff 432px,#f300ff 440px,#fb00ff 448px,#ff00fa 456px,#ff00f3 464px,#ff00eb 472px,#ff00e4 480px,#ff00dd 488px,#ff00d7 496px,#ff00d1 504px,#ff00cb 512px,#ff00c6 520px,#ff00c0 528px,#ff00bb 536px,#ff00b7 544px,#ff00b2 552px,#ff00ae 560px,#ff00aa 568px,#ff00a6 576px,#ff00a2 584px,#ff009e 592px,#ff009b 600px,#ff0097 608px,#ff0094 616px,#ff0091 624px,#ff008e 632px,#ff008b 640px,#ff0088 648px,#ff0085 656px);"></div><div style="height:5px;background:linear-gradient(90deg,#0032ff 0px,#0031ff 8px,#002fff 16px,#002dff 24px,#002bff 32px,#0029ff 40px,#0027ff 48px,#0026ff 56px,#0024ff 64px,#0022ff 72px,#0020ff 80px,#001eff 88px,#001cff 96px,#001aff 104px,#0018ff 112px,#0016ff 120px,#0014ff 128px,#0012ff 136px,#0010ff 144px,#000eff 152px,#000cff 160px,#000bff 168px,#0009ff 176px,#0006ff 184px,#0104ff 192px,#0802ff 200px,#0f00ff 208px,#1600ff 216px,#1d00ff 224px,#2500ff 232px,#2c00ff 240px,#3300ff 248px,#3a00ff 256px,#4200ff 264px,#4900ff 272px,#5100ff 280px,#5800ff 288px,#6000ff 296px,#6700ff 304px,#6f00ff 312px,#7600ff 320px,#7e00ff 328px,#8600ff 336px,#8e00ff 344px,#9500ff 352px,#9d00ff 360px,#a500ff 368px,#ad00ff 376px,#b500ff 384px,#bd00ff 392px,#c500ff 400px,#cd00ff 408px,#d500ff 416px,#dd00ff 424px,#e500ff 432px,#ee00ff 440px,#f600ff 448px,#fe00ff 456px,#ff00f8 464px,#ff00f0 472px,#ff00e9 480px,#ff00e2 488px,#ff00db 496px,#ff00d5 504px,#ff00cf 512px,#ff00ca 520px,#ff00c4 528px,#ff00bf 536px,#ff00ba 544px,#ff00b6 552px,#ff00b1 560px,#ff00ad 568px,#ff00a9 576px,#ff00a5 584px,#ff00a1 592px,#ff009e 600px,#ff009a 608px,#ff0097 616px,#ff0094 624px,#ff0091 632px,#ff008e 640px,#ff008b 648px,#ff0088 656px);"></div><div style="height:5px;background:linear-gradient(90deg,#0031ff 0px,#002fff 8px,#002dff 16px,#002bff 24px,#0029ff 32px,#0027ff 40px,#0026ff 48px,#0024ff 56px,#0022ff 64px,#0020ff 72px,#001eff 80px,#001cff 88px,#001aff 96px,#0019ff 104px,#0017ff 112px,#0015ff 120px,#0013ff 128px,#0011ff 136px,#000fff 144px,#000dff 152px,#000bff 160px,#0009ff 168px,#0007ff 176px,#0005ff 184px,#0003ff 192px,#0701ff 200px,#0e00ff 208px,#1500ff 216px,#1c00ff 224px,#2300ff 232px,#2a00ff 240px,#3200ff 248px,#3900ff 256px,#4000ff 264px,#4700ff 272px,#4f00ff 280px,#5600ff 288px,#5d00ff 296px,#6500ff 304px,#6c00ff 312px,#7400ff 320px,#7b00ff 328px,#8300ff 336px,#8a00ff 344px,#9200ff 352px,#9a00ff 360px,#a200ff 368px,#a900ff 376px,#b100ff 384px,#b900ff 392px,#c100ff 400px,#c900ff 408px,#d100ff 416px,#d900ff 424px,#e100ff 432px,#e900ff 440px,#f100ff 448px,#f900ff 456px,#ff00fd 464px,#ff00f5 472px,#ff00ed 480px,#ff00e6 488px,#ff00e0 496px,#ff00d9 504px,#ff00d3 512px,#ff00ce 520px,#ff00c8 528px,#ff00c3 536px,#ff00be 544px,#ff00ba 552px,#ff00b5 560px,#ff00b1 568px,#ff00ad 576px,#ff00a9 584px,#ff00a5 592px,#ff00a1 600px,#ff009e 608px,#ff009a 616px,#ff0097 624px,#ff0094 632px,#ff0091 640px,#ff008e 648px,#ff008b 656px);"></div><div style="height:5px;background:linear-gradient(90deg,#002fff 0px,#002dff 8px,#002bff 16px,#0029ff 24px,#0028ff 32px,#0026ff 40px,#0024ff 48px,#0022ff 56px,#0020ff 64px,#001eff 72px,#001dff 80px,#001bff 88px,#0019ff 96px,#0017ff 104px,#0015ff 112px,#0013ff 120px,#0011ff 128px,#000fff 136px,#000eff 144px,#000cff 152px,#000aff 160px,#0008ff 168px,#0006ff 176px,#0004ff 184px,#0002ff 192px,#0600ff 200px,#0d00ff 208px,#1400ff 216px,#1b00ff 224px,#2200ff 232px,#2900ff 240px,#3000ff 248px,#3700ff 256px,#3e00ff 264px,#4600ff 272px,#4d00ff 280px,#5400ff 288px,#5b00ff 296px,#6200ff 304px,#6a00ff 312px,#7100ff 320px,#7900ff 328px,#8000ff 336px,#8800ff 344px,#8f00ff 352px,#9700ff 360px,#9e00ff 368px,#a600ff 376px,#ad00ff 384px,#b500ff 392px,#bd00ff 400px,#c500ff 408px,#cc00ff 416px,#d400ff 424px,#dc00ff 432px,#e400ff 440px,#ec00ff 448px,#f400ff 456px,#fc00ff 464px,#ff00fa 472px,#ff00f2 480px,#ff00eb 488px,#ff00e4 496px,#ff00de 504px,#ff00d8 512px,#ff00d2 520px,#ff00cc 528px,#ff00c7 536px,#ff00c2 544px,#ff00bd 552px,#ff00b9 560px,#ff00b4 568px,#ff00b0 576px,#ff00ac 584px,#ff00a8 592px,#ff00a4 600px,#ff00a1 608px,#ff009d 616px,#ff009a 624px,#ff0097 632px,#ff0094 640px,#ff0091 648px,#ff008e 656px);"></div><div style="height:5px;background:linear-gradient(90deg,#002dff 0px,#002bff 8px,#0029ff 16px,#0028ff 24px,#0026ff 32px,#0024ff 40px,#0022ff 48px,#0020ff 56px,#001fff 64px,#001dff 72px,#001bff 80px,#0019ff 88px,#0017ff 96px,#0016ff 104px,#0014ff 112px,#0012ff 120px,#0010ff 128px,#000eff 136px,#000cff 144px,#000aff 152px,#0008ff 160px,#0006ff 168px,#0005ff 176px,#0003ff 184px,#0001ff 192px,#0500ff 200px,#0c00ff 208px,#1300ff 216px,#1a00ff 224px,#2100ff 232px,#2800ff 240px,#2f00ff 248px,#3600ff 256px,#3d00ff 264px,#4400ff 272px,#4b00ff 280px,#5200ff 288px,#5900ff 296px,#6000ff 304px,#6700ff 312px,#6f00ff 320px,#7600ff 328px,#7d00ff 336px,#8500ff 344px,#8c00ff 352px,#9300ff 360px,#9b00ff 368px,#a200ff 376px,#aa00ff 384px,#b100ff 392px,#b900ff 400px,#c100ff 408px,#c800ff 416px,#d000ff 424px,#d800ff 432px,#e000ff 440px,#e700ff 448px,#ef00ff 456px,#f700ff 464px,#ff00ff 472px,#ff00f7 480px,#ff00f0 488px,#ff00e9 496px,#ff00e2 504px,#ff00dc 512px,#ff00d6 520px,#ff00d0 528px,#ff00cb 536px,#ff00c6 544px,#ff00c1 552px,#ff00bc 560px,#ff00b8 568px,#ff00b3 576px,#ff00af 584px,#ff00ab 592px,#ff00a8 600px,#ff00a4 608px,#ff00a0 616px,#ff009d 624px,#ff009a 632px,#ff0097 640px,#ff0094 648px,#ff0091 656px);"></div><div style="height:5px;background:linear-gradient(90deg,#002bff 0px,#0029ff 8px,#0028ff 16px,#0026ff 24px,#0024ff 32px,#0022ff 40px,#0021ff 48px,#001fff 56px,#001dff 64px,#001bff 72px,#001aff 80px,#0018ff 88px,#0016ff 96px,#0014ff 104px,#0012ff 112px,#0010ff 120px,#000fff 128px,#000dff 136px,#000bff 144px,#0009ff 152px,#0007ff 160px,#0005ff 168px,#0003ff 176px,#0001ff 184px,#0000ff 192px,#0500ff 200px,#0b00ff 208px,#1200ff 216px,#1900ff 224px,#2000ff 232px,#2600ff 240px,#2d00ff 248px,#3400ff 256px,#3b00ff 264px,#4200ff 272px,#4900ff 280px,#5000ff 288px,#5700ff 296px,#5e00ff 304px,#6500ff 312px,#6c00ff 320px,#7300ff 328px,#7b00ff 336px,#8200ff 344px,#8900ff 352px,#9000ff 360px,#9800ff 368px,#9f00ff 376px,#a600ff 384px,#ae00ff 392px,#b500ff 400px,#bd00ff 408px,#c400ff 416px,#cc00ff 424px,#d400ff 432px,#db00ff 440px,#e300ff 448px,#eb00ff 456px,#f200ff 464px,#fa00ff 472px,#ff00fc 480px,#ff00f4 488px,#ff00ed 496px,#ff00e7 504px,#ff00e0 512px,#ff00da 520px,#ff00d4 528px,#ff00cf 536px,#ff00ca 544px,#ff00c5 552px,#ff00c0 560px,#ff00bb 568px,#ff00b7 576px,#ff00b3 584px,#ff00af 592px,#ff00ab 600px,#ff00a7 608px,#ff00a3 616px,#ff00a0 624px,#ff009d 632px,#ff0099 640px,#ff0096 648px,#ff0093 656px);"></div><div style="height:5px;background:linear-gradient(90deg,#0029ff 0px,#0028ff 8px,#0026ff 16px,#0024ff 24px,#0023ff 32px,#0021ff 40px,#001fff 48px,#001dff 56px,#001cff 64px,#001aff 72px,#0018ff 80px,#0016ff 88px,#0014ff 96px,#0013ff 104px,#0011ff 112px,#000fff 120px,#000dff 128px,#000bff 136px,#000aff 144px,#0008ff 152px,#0006ff 160px,#0004ff 168px,#0002ff 176px,#0000ff 184px,#0000ff 192px,#0400ff 200px,#0b00ff 208px,#1100ff 216px,#1800ff 224px,#1e00ff 232px,#2500ff 240px,#2c00ff 248px,#3300ff 256px,#3900ff 264px,#4000ff 272px,#4700ff 280px,#4e00ff 288px,#5500ff 296px,#5c00ff 304px,#6300ff 312px,#6a00ff 320px,#7100ff 328px,#7800ff 336px,#7f00ff 344px,#8600ff 352px,#8d00ff 360px,#9500ff 368px,#9c00ff 376px,#a300ff 384px,#aa00ff 392px,#b200ff 400px,#b900ff 408px,#c100ff 416px,#c800ff 424px,#d000ff 432px,#d700ff 440px,#df00ff 448px,#e600ff 456px,#ee00ff 464px,#f600ff 472px,#fd00ff 480px,#ff00f9 488px,#ff00f2 496px,#ff00eb 504px,#ff00e5 512px,#ff00de 520px,#ff00d9 528px,#ff00d3 536px,#ff00ce 544px,#ff00c8 552px,#ff00c4 560px,#ff00bf 568px,#ff00ba 576px,#ff00b6 584px,#ff00b2 592px,#ff00ae 600px,#ff00aa 608px,#ff00a7 616px,#ff00a3 624px,#ff00a0 632px,#ff009c 640px,#ff0099 648px,#ff0096 656px);"></div><div style="height:5px;background:linear-gradient(90deg,#0028ff 0px,#0026ff 8px,#0024ff 16px,#0023ff 24px,#0021ff 32px,#001fff 40px,#001eff 48px,#001cff 56px,#001aff 64px,#0018ff 72px,#0017ff 80px,#0015ff 88px,#0013ff 96px,#0011ff 104px,#000fff 112px,#000eff 120px,#000cff 128px,#000aff 136px,#0008ff 144px,#0006ff 152px,#0005ff 160px,#0003ff 168px,#0001ff 176px,#0000ff 184px,#0000ff 192px,#0300ff 200px,#0a00ff 208px,#1000ff 216px,#1700ff 224px,#1d00ff 232px,#2400ff 240px,#2b00ff 248px,#3100ff 256px,#3800ff 264px,#3f00ff 272px,#4500ff 280px,#4c00ff 288px,#5300ff 296px,#5a00ff 304px,#6100ff 312px,#6800ff 320px,#6f00ff 328px,#7500ff 336px,#7c00ff 344px,#8300ff 352px,#8b00ff 360px,#9200ff 368px,#9900ff 376px,#a000ff 384px,#a700ff 392px,#ae00ff 400px,#b600ff 408px,#bd00ff 416px,#c400ff 424px,#cc00ff 432px,#d300ff 440px,#da00ff 448px,#e200ff 456px,#e900ff 464px,#f100ff 472px,#f800ff 480px,#ff00fe 488px,#ff00f7 496px,#ff00f0 504px,#ff00e9 512px,#ff00e3 520px,#ff00dd 528px,#ff00d7 536px,#ff00d1 544px,#ff00cc 552px,#ff00c7 560px,#ff00c3 568px,#ff00be 576px,#ff00ba 584px,#ff00b5 592px,#ff00b1 600px,#ff00ae 608px,#ff00aa 616px,#ff00a6 624px,#ff00a3 632px,#ff009f 640px,#ff009c 648px,#ff0099 656px);"></div><div style="height:5px;background:linear-gradient(90deg,#0026ff 0px,#0024ff 8px,#0023ff 16px,#0021ff 24px,#001fff 32px,#001eff 40px,#001cff 48px,#001aff 56px,#0019ff 64px,#0017ff 72px,#0015ff 80px,#0013ff 88px,#0012ff 96px,#0010ff 104px,#000eff 112px,#000cff 120px,#000bff 128px,#0009ff 136px,#0007ff 144px,#0005ff 152px,#0003ff 160px,#0002ff 168px,#0000ff 176px,#0000ff 184px,#0000ff 192px,#0300ff 200px,#0900ff 208px,#0f00ff 216px,#1600ff 224px,#1c00ff 232px,#2300ff 240px,#2900ff 248px,#3000ff 256px,#3600ff 264px,#3d00ff 272px,#4400ff 280px,#4a00ff 288px,#5100ff 296px,#5800ff 304px,#5f00ff 312px,#6500ff 320px,#6c00ff 328px,#7300ff 336px,#7a00ff 344px,#8100ff 352px,#8800ff 360px,#8f00ff 368px,#9600ff 376px,#9d00ff 384px,#a400ff 392px,#ab00ff 400px,#b200ff 408px,#b900ff 416px,#c100ff 424px,#c800ff 432px,#cf00ff 440px,#d600ff 448px,#de00ff 456px,#e500ff 464px,#ec00ff 472px,#f400ff 480px,#fb00ff 488px,#ff00fb 496px,#ff00f4 504px,#ff00ed 512px,#ff00e7 520px,#ff00e1 528px,#ff00db 536px,#ff00d5 544px,#ff00d0 552px,#ff00cb 560px,#ff00c6 568px,#ff00c2 576px,#ff00bd 584px,#ff00b9 592px,#ff00b5 600px,#ff00b1 608px,#ff00ad 616px,#ff00a9 624px,#ff00a6 632px,#ff00a2 640px,#ff009f 648px,#ff009c 656px);"></div><div style="height:5px;background:linear-gradient(90deg,#0025ff 0px,#0023ff 8px,#0021ff 16px,#0020ff 24px,#001eff 32px,#001cff 40px,#001bff 48px,#0019ff 56px,#0017ff 64px,#0016ff 72px,#0014ff 80px,#0012ff 88px,#0010ff 96px,#000fff 104px,#000dff 112px,#000bff 120px,#0009ff 128px,#0008ff 136px,#0006ff 144px,#0004ff 152px,#0002ff 160px,#0001ff 168px,#0000ff 176px,#0000ff 184px,#0000ff 192px,#0200ff 200px,#0800ff 208px,#0f00ff 216px,#1500ff 224px,#1b00ff 232px,#2200ff 240px,#2800ff 248px,#2f00ff 256px,#3500ff 264px,#3c00ff 272px,#4200ff 280px,#4900ff 288px,#4f00ff 296px,#5600ff 304px,#5d00ff 312px,#6300ff 320px,#6a00ff 328px,#7100ff 336px,#7700ff 344px,#7e00ff 352px,#8500ff 360px,#8c00ff 368px,#9300ff 376px,#9a00ff 384px,#a100ff 392px,#a800ff 400px,#af00ff 408px,#b600ff 416px,#bd00ff 424px,#c400ff 432px,#cb00ff 440px,#d200ff 448px,#da00ff 456px,#e100ff 464px,#e800ff 472px,#ef00ff 480px,#f700ff 488px,#fe00ff 496px,#ff00f9 504px,#ff00f2 512px,#ff00eb 520px,#ff00e5 528px,#ff00df 536px,#ff00d9 544px,#ff00d4 552px,#ff00cf 560px,#ff00ca 568px,#ff00c5 576px,#ff00c1 584px,#ff00bc 592px,#ff00b8 600px,#ff00b4 608px,#ff00b0 616px,#ff00ac 624px,#ff00a9 632px,#ff00a5 640px,#ff00a2 648px,#ff009f 656px);"></div><div style="height:5px;background:linear-gradient(90deg,#0023ff 0px,#0021ff 8px,#0020ff 16px,#001eff 24px,#001cff 32px,#001bff 40px,#0019ff 48px,#0018ff 56px,#0016ff 64px,#0014ff 72px,#0012ff 80px,#0011ff 88px,#000fff 96px,#000dff 104px,#000cff 112px,#000aff 120px,#0008ff 128px,#0006ff 136px,#0005ff 144px,#0003ff 152px,#0001ff 160px,#0000ff 168px,#0000ff 176px,#0000ff 184px,#0000ff 192px,#0100ff 200px,#0700ff 208px,#0e00ff 216px,#1400ff 224px,#1a00ff 232px,#2100ff 240px,#2700ff 248px,#2d00ff 256px,#3400ff 264px,#3a00ff 272px,#4000ff 280px,#4700ff 288px,#4d00ff 296px,#5400ff 304px,#5b00ff 312px,#6100ff 320px,#6800ff 328px,#6e00ff 336px,#7500ff 344px,#7c00ff 352px,#8200ff 360px,#8900ff 368px,#9000ff 376px,#9700ff 384px,#9e00ff 392px,#a500ff 400px,#ab00ff 408px,#b200ff 416px,#b900ff 424px,#c000ff 432px,#c700ff 440px,#cf00ff 448px,#d600ff 456px,#dd00ff 464px,#e400ff 472px,#eb00ff 480px,#f200ff 488px,#fa00ff 496px,#ff00fd 504px,#ff00f6 512px,#ff00ef 520px,#ff00e9 528px,#ff00e3 536px,#ff00dd 544px,#ff00d8 552px,#ff00d2 560px,#ff00cd 568px,#ff00c9 576px,#ff00c4 584px,#ff00c0 592px,#ff00bb 600px,#ff00b7 608px,#ff00b3 616px,#ff00af 624px,#ff00ac 632px,#ff00a8 640px,#ff00a5 648px,#ff00a2 656px);"></div><div style="height:5px;background:linear-gradient(90deg,#0022ff 0px,#0020ff 8px,#001eff 16px,#001dff 24px,#001bff 32px,#0019ff 40px,#0018ff 48px,#0016ff 56px,#0014ff 64px,#0013ff 72px,#0011ff 80px,#000fff 88px,#000eff 96px,#000cff 104px,#000aff 112px,#0009ff 120px,#0007ff 128px,#0005ff 136px,#0004ff 144px,#0002ff 152px,#0000ff 160px,#0000ff 168px,#0000ff 176px,#0000ff 184px,#0000ff 192px,#0100ff 200px,#0700ff 208px,#0d00ff 216px,#1300ff 224px,#1900ff 232px,#1f00ff 240px,#2600ff 248px,#2c00ff 256px,#3200ff 264px,#3900ff 272px,#3f00ff 280px,#4500ff 288px,#4c00ff 296px,#5200ff 304px,#5900ff 312px,#5f00ff 320px,#6600ff 328px,#6c00ff 336px,#7300ff 344px,#7900ff 352px,#8000ff 360px,#8700ff 368px,#8d00ff 376px,#9400ff 384px,#9b00ff 392px,#a200ff 400px,#a800ff 408px,#af00ff 416px,#b600ff 424px,#bd00ff 432px,#c400ff 440px,#cb00ff 448px,#d200ff 456px,#d900ff 464px,#e000ff 472px,#e700ff 480px,#ee00ff 488px,#f500ff 496px,#fc00ff 504px,#ff00fb 512px,#ff00f4 520px,#ff00ed 528px,#ff00e7 536px,#ff00e1 544px,#ff00dc 552px,#ff00d6 560px,#ff00d1 568px,#ff00cc 576px,#ff00c7 584px,#ff00c3 592px,#ff00bf 600px,#ff00ba 608px,#ff00b6 616px,#ff00b3 624px,#ff00af 632px,#ff00ab 640px,#ff00a8 648px,#ff00a5 656px);"></div><div style="height:5px;background:linear-gradient(90deg,#0020ff 0px,#001fff 8px,#001dff 16px,#001bff 24px,#001aff 32px,#0018ff 40px,#0016ff 48px,#0015ff 56px,#0013ff 64px,#0012ff 72px,#0010ff 80px,#000eff 88px,#000dff 96px,#000bff 104px,#0009ff 112px,#0008ff 120px,#0006ff 128px,#0004ff 136px,#0002ff 144px,#0001ff 152px,#0000ff 160px,#0000ff 168px,#0000ff 176px,#0000ff 184px,#0000ff 192px,#0000ff 200px,#0600ff 208px,#0c00ff 216px,#1200ff 224px,#1800ff 232px,#1e00ff 240px,#2500ff 248px,#2b00ff 256px,#3100ff 264px,#3700ff 272px,#3d00ff 280px,#4400ff 288px,#4a00ff 296px,#5000ff 304px,#5700ff 312px,#5d00ff 320px,#6400ff 328px,#6a00ff 336px,#7000ff 344px,#7700ff 352px,#7d00ff 360px,#8400ff 368px,#8b00ff 376px,#9100ff 384px,#9800ff 392px,#9f00ff 400px,#a500ff 408px,#ac00ff 416px,#b300ff 424px,#ba00ff 432px,#c000ff 440px,#c700ff 448px,#ce00ff 456px,#d500ff 464px,#dc00ff 472px,#e300ff 480px,#ea00ff 488px,#f100ff 496px,#f800ff 504px,#ff00ff 512px,#ff00f8 520px,#ff00f1 528px,#ff00eb 536px,#ff00e5 544px,#ff00df 552px,#ff00da 560px,#ff00d5 568px,#ff00d0 576px,#ff00cb 584px,#ff00c6 592px,#ff00c2 600px,#ff00be 608px,#ff00ba 616px,#ff00b6 624px,#ff00b2 632px,#ff00ae 640px,#ff00ab 648px,#ff00a7 656px);"></div><div style="height:5px;background:linear-gradient(90deg,#001fff 0px,#001dff 8px,#001cff 16px,#001aff 24px,#0018ff 32px,#0017ff 40px,#0015ff 48px,#0014ff 56px,#0012ff 64px,#0010ff 72px,#000fff 80px,#000dff 88px,#000bff 96px,#000aff 104px,#0008ff 112px,#0006ff 120px,#0005ff 128px,#0003ff 136px,#0001ff 144px,#0000ff 152px,#0000ff 160px,#0000ff 168px,#0000ff 176px,#0000ff 184px,#0000ff 192px,#0000ff 200px,#0500ff 208px,#0b00ff 216px,#1100ff 224px,#1700ff 232px,#1d00ff 240px,#2300ff 248px,#2a00ff 256px,#3000ff 264px,#3600ff 272px,#3c00ff 280px,#4200ff 288px,#4800ff 296px,#4f00ff 304px,#5500ff 312px,#5b00ff 320px,#6200ff 328px,#6800ff 336px,#6e00ff 344px,#7500ff 352px,#7b00ff 360px,#8200ff 368px,#8800ff 376px,#8f00ff 384px,#9500ff 392px,#9c00ff 400px,#a200ff 408px,#a900ff 416px,#b000ff 424px,#b600ff 432px,#bd00ff 440px,#c400ff 448px,#ca00ff 456px,#d100ff 464px,#d800ff 472px,#df00ff 480px,#e600ff 488px,#ed00ff 496px,#f400ff 504px,#fb00ff 512px,#ff00fc 520px,#ff00f6 528px,#ff00ef 536px,#ff00e9 544px,#ff00e3 552px,#ff00de 560px,#ff00d8 568px,#ff00d3 576px,#ff00cf 584px,#ff00ca 592px,#ff00c5 600px,#ff00c1 608px,#ff00bd 616px,#ff00b9 624px,#ff00b5 632px,#ff00b1 640px,#ff00ae 648px,#ff00aa 656px);"></div><div style="height:5px;background:linear-gradient(90deg,#001dff 0px,#001cff 8px,#001aff 16px,#0019ff 24px,#0017ff 32px,#0015ff 40px,#0014ff 48px,#0012ff 56px,#0011ff 64px,#000fff 72px,#000dff 80px,#000cff 88px,#000aff 96px,#0009ff 104px,#0007ff 112px,#0005ff 120px,#0004ff 128px,#0002ff 136px,#0000ff 144px,#0000ff 152px,#0000ff 160px,#0000ff 168px,#0000ff 176px,#0000ff 184px,#0000ff 192px,#0000ff 200px,#0500ff 208px,#0b00ff 216px,#1000ff 224px,#1600ff 232px,#1c00ff 240px,#2200ff 248px,#2800ff 256px,#2e00ff 264px,#3400ff 272px,#3b00ff 280px,#4100ff 288px,#4700ff 296px,#4d00ff 304px,#5300ff 312px,#5900ff 320px,#6000ff 328px,#6600ff 336px,#6c00ff 344px,#7200ff 352px,#7900ff 360px,#7f00ff 368px,#8600ff 376px,#8c00ff 384px,#9200ff 392px,#9900ff 400px,#9f00ff 408px,#a600ff 416px,#ac00ff 424px,#b300ff 432px,#ba00ff 440px,#c000ff 448px,#c700ff 456px,#ce00ff 464px,#d400ff 472px,#db00ff 480px,#e200ff 488px,#e900ff 496px,#ef00ff 504px,#f600ff 512px,#fd00ff 520px,#ff00fa 528px,#ff00f3 536px,#ff00ed 544px,#ff00e7 552px,#ff00e2 560px,#ff00dc 568px,#ff00d7 576px,#ff00d2 584px,#ff00cd 592px,#ff00c9 600px,#ff00c4 608px,#ff00c0 616px,#ff00bc 624px,#ff00b8 632px,#ff00b4 640px,#ff00b1 648px,#ff00ad 656px);"></div><div style="height:5px;background:linear-gradient(90deg,#001cff 0px,#001aff 8px,#0019ff 16px,#0017ff 24px,#0016ff 32px,#0014ff 40px,#0013ff 48px,#0011ff 56px,#0010ff 64px,#000eff 72px,#000cff 80px,#000bff 88px,#0009ff 96px,#0008ff 104px,#0006ff 112px,#0004ff 120px,#0003ff 128px,#0001ff 136px,#0000ff 144px,#0000ff 152px,#0000ff 160px,#0000ff 168px,#0000ff 176px,#0000ff 184px,#0000ff 192px,#0000ff 200px,#0400ff 208px,#0a00ff 216px,#1000ff 224px,#1600ff 232px,#1b00ff 240px,#2100ff 248px,#2700ff 256px,#2d00ff 264px,#3300ff 272px,#3900ff 280px,#3f00ff 288px,#4500ff 296px,#4b00ff 304px,#5100ff 312px,#5800ff 320px,#5e00ff 328px,#6400ff 336px,#6a00ff 344px,#7000ff 352px,#7600ff 360px,#7d00ff 368px,#8300ff 376px,#8900ff 384px,#9000ff 392px,#9600ff 400px,#9d00ff 408px,#a300ff 416px,#a900ff 424px,#b000ff 432px,#b600ff 440px,#bd00ff 448px,#c300ff 456px,#ca00ff 464px,#d100ff 472px,#d700ff 480px,#de00ff 488px,#e500ff 496px,#eb00ff 504px,#f200ff 512px,#f900ff 520px,#ff00fe 528px,#ff00f8 536px,#ff00f1 544px,#ff00eb 552px,#ff00e5 560px,#ff00e0 568px,#ff00db 576px,#ff00d6 584px,#ff00d1 592px,#ff00cc 600px,#ff00c8 608px,#ff00c3 616px,#ff00bf 624px,#ff00bb 632px,#ff00b7 640px,#ff00b4 648px,#ff00b0 656px);"></div><div style="height:5px;background:linear-gradient(90deg,#001bff 0px,#0019ff 8px,#0018ff 16px,#0016ff 24px,#0015ff 32px,#0013ff 40px,#0011ff 48px,#0010ff 56px,#000eff 64px,#000dff 72px,#000bff 80px,#000aff 88px,#0008ff 96px,#0006ff 104px,#0005ff 112px,#0003ff 120px,#0002ff 128px,#0000ff 136px,#0000ff 144px,#0000ff 152px,#0000ff 160px,#0000ff 168px,#0000ff 176px,#0000ff 184px,#0000ff 192px,#0000ff 200px,#0300ff 208px,#0900ff 216px,#0f00ff 224px,#1500ff 232px,#1a00ff 240px,#2000ff 248px,#2600ff 256px,#2c00ff 264px,#3200ff 272px,#3800ff 280px,#3e00ff 288px,#4400ff 296px,#4a00ff 304px,#5000ff 312px,#5600ff 320px,#5c00ff 328px,#6200ff 336px,#6800ff 344px,#6e00ff 352px,#7400ff 360px,#7a00ff 368px,#8100ff 376px,#8700ff 384px,#8d00ff 392px,#9300ff 400px,#9a00ff 408px,#a000ff 416px,#a600ff 424px,#ad00ff 432px,#b300ff 440px,#ba00ff 448px,#c000ff 456px,#c700ff 464px,#cd00ff 472px,#d400ff 480px,#da00ff 488px,#e100ff 496px,#e800ff 504px,#ee00ff 512px,#f500ff 520px,#fc00ff 528px,#ff00fc 536px,#ff00f5 544px,#ff00ef 552px,#ff00e9 560px,#ff00e4 568px,#ff00de 576px,#ff00d9 584px,#ff00d4 592px,#ff00d0 600px,#ff00cb 608px,#ff00c7 616px,#ff00c2 624px,#ff00be 632px,#ff00ba 640px,#ff00b7 648px,#ff00b3 656px);"></div><div style="height:5px;background:linear-gradient(90deg,#0019ff 0px,#0018ff 8px,#0016ff 16px,#0015ff 24px,#0013ff 32px,#0012ff 40px,#0010ff 48px,#000fff 56px,#000dff 64px,#000cff 72px,#000aff 80px,#0009ff 88px,#0007ff 96px,#0005ff 104px,#0004ff 112px,#0002ff 120px,#0001ff 128px,#0000ff 136px,#0000ff 144px,#0000ff 152px,#0000ff 160px,#0000ff 168px,#0000ff 176px,#0000ff 184px,#0000ff 192px,#0000ff 200px,#0300ff 208px,#0800ff 216px,#0e00ff 224px,#1400ff 232px,#1a00ff 240px,#1f00ff 248px,#2500ff 256px,#2b00ff 264px,#3100ff 272px,#3700ff 280px,#3c00ff 288px,#4200ff 296px,#4800ff 304px,#4e00ff 312px,#5400ff 320px,#5a00ff 328px,#6000ff 336px,#6600ff 344px,#6c00ff 352px,#7200ff 360px,#7800ff 368px,#7e00ff 376px,#8400ff 384px,#8b00ff 392px,#9100ff 400px,#9700ff 408px,#9d00ff 416px,#a400ff 424px,#aa00ff 432px,#b000ff 440px,#b700ff 448px,#bd00ff 456px,#c300ff 464px,#ca00ff 472px,#d000ff 480px,#d700ff 488px,#dd00ff 496px,#e400ff 504px,#ea00ff 512px,#f100ff 520px,#f700ff 528px,#fe00ff 536px,#ff00f9 544px,#ff00f3 552px,#ff00ed 560px,#ff00e7 568px,#ff00e2 576px,#ff00dd 584px,#ff00d8 592px,#ff00d3 600px,#ff00ce 608px,#ff00ca 616px,#ff00c6 624px,#ff00c2 632px,#ff00be 640px,#ff00ba 648px,#ff00b6 656px);"></div><div style="height:5px;background:linear-gradient(90deg,#0018ff 0px,#0017ff 8px,#0015ff 16px,#0014ff 24px,#0012ff 32px,#0011ff 40px,#000fff 48px,#000eff 56px,#000cff 64px,#000bff 72px,#0009ff 80px,#0007ff 88px,#0006ff 96px,#0004ff 104px,#0003ff 112px,#0001ff 120px,#0000ff 128px,#0000ff 136px,#0000ff 144px,#0000ff 152px,#0000ff 160px,#0000ff 168px,#0000ff 176px,#0000ff 184px,#0000ff 192px,#0000ff 200px,#0200ff 208px,#0800ff 216px,#0d00ff 224px,#1300ff 232px,#1900ff 240px,#1e00ff 248px,#2400ff 256px,#2a00ff 264px,#2f00ff 272px,#3500ff 280px,#3b00ff 288px,#4100ff 296px,#4700ff 304px,#4c00ff 312px,#5200ff 320px,#5800ff 328px,#5e00ff 336px,#6400ff 344px,#6a00ff 352px,#7000ff 360px,#7600ff 368px,#7c00ff 376px,#8200ff 384px,#8800ff 392px,#8e00ff 400px,#9400ff 408px,#9b00ff 416px,#a100ff 424px,#a700ff 432px,#ad00ff 440px,#b300ff 448px,#ba00ff 456px,#c000ff 464px,#c600ff 472px,#cd00ff 480px,#d300ff 488px,#da00ff 496px,#e000ff 504px,#e600ff 512px,#ed00ff 520px,#f300ff 528px,#fa00ff 536px,#ff00fd 544px,#ff00f7 552px,#ff00f1 560px,#ff00eb 568px,#ff00e6 576px,#ff00e0 584px,#ff00db 592px,#ff00d6 600px,#ff00d2 608px,#ff00cd 616px,#ff00c9 624px,#ff00c5 632px,#ff00c1 640px,#ff00bd 648px,#ff00b9 656px);"></div><div style="height:5px;background:linear-gradient(90deg,#0017ff 0px,#0015ff 8px,#0014ff 16px,#0012ff 24px,#0011ff 32px,#0010ff 40px,#000eff 48px,#000dff 56px,#000bff 64px,#0009ff 72px,#0008ff 80px,#0006ff 88px,#0005ff 96px,#0003ff 104px,#0002ff 112px,#0000ff 120px,#0000ff 128px,#0000ff 136px,#0000ff 144px,#0000ff 152px,#0000ff 160px,#0000ff 168px,#0000ff 176px,#0000ff 184px,#0000ff 192px,#0000ff 200px,#0200ff 208px,#0700ff 216px,#0d00ff 224px,#1200ff 232px,#1800ff 240px,#1d00ff 248px,#2300ff 256px,#2900ff 264px,#2e00ff 272px,#3400ff 280px,#3a00ff 288px,#3f00ff 296px,#4500ff 304px,#4b00ff 312px,#5100ff 320px,#5700ff 328px,#5c00ff 336px,#6200ff 344px,#6800ff 352px,#6e00ff 360px,#7400ff 368px,#7a00ff 376px,#8000ff 384px,#8600ff 392px,#8c00ff 400px,#9200ff 408px,#9800ff 416px,#9e00ff 424px,#a400ff 432px,#aa00ff 440px,#b100ff 448px,#b700ff 456px,#bd00ff 464px,#c300ff 472px,#c900ff 480px,#d000ff 488px,#d600ff 496px,#dc00ff 504px,#e300ff 512px,#e900ff 520px,#f000ff 528px,#f600ff 536px,#fc00ff 544px,#ff00fb 552px,#ff00f5 560px,#ff00ef 568px,#ff00e9 576px,#ff00e4 584px,#ff00df 592px,#ff00da 600px,#ff00d5 608px,#ff00d0 616px,#ff00cc 624px,#ff00c8 632px,#ff00c4 640px,#ff00c0 648px,#ff00bc 656px);"></div><div style="height:5px;background:linear-gradient(90deg,#0016ff 0px,#0014ff 8px,#0013ff 16px,#0011ff 24px,#0010ff 32px,#000eff 40px,#000dff 48px,#000bff 56px,#000aff 64px,#0008ff 72px,#0007ff 80px,#0005ff 88px,#0004ff 96px,#0002ff 104px,#0001ff 112px,#0000ff 120px,#0000ff 128px,#0000ff 136px,#0000ff 144px,#0000ff 152px,#0000ff 160px,#0000ff 168px,#0000ff 176px,#0000ff 184px,#0000ff 192px,#0000ff 200px,#0100ff 208px,#0600ff 216px,#0c00ff 224px,#1100ff 232px,#1700ff 240px,#1c00ff 248px,#2200ff 256px,#2800ff 264px,#2d00ff 272px,#3300ff 280px,#3800ff 288px,#3e00ff 296px,#4400ff 304px,#4900ff 312px,#4f00ff 320px,#5500ff 328px,#5b00ff 336px,#6000ff 344px,#6600ff 352px,#6c00ff 360px,#7200ff 368px,#7800ff 376px,#7e00ff 384px,#8400ff 392px,#8900ff 400px,#8f00ff 408px,#9500ff 416px,#9b00ff 424px,#a100ff 432px,#a800ff 440px,#ae00ff 448px,#b400ff 456px,#ba00ff 464px,#c000ff 472px,#c600ff 480px,#cc00ff 488px,#d300ff 496px,#d900ff 504px,#df00ff 512px,#e500ff 520px,#ec00ff 528px,#f200ff 536px,#f800ff 544px,#ff00ff 552px,#ff00f9 560px,#ff00f3 568px,#ff00ed 576px,#ff00e8 584px,#ff00e2 592px,#ff00dd 600px,#ff00d8 608px,#ff00d4 616px,#ff00cf 624px,#ff00cb 632px,#ff00c7 640px,#ff00c3 648px,#ff00bf 656px);"></div><div style="height:5px;background:linear-gradient(90deg,#0015ff 0px,#0013ff 8px,#0012ff 16px,#0010ff 24px,#000fff 32px,#000dff 40px,#000cff 48px,#000aff 56px,#0009ff 64px,#0007ff 72px,#0006ff 80px,#0004ff 88px,#0003ff 96px,#0001ff 104px,#0000ff 112px,#0000ff 120px,#0000ff 128px,#0000ff 136px,#0000ff 144px,#0000ff 152px,#0000ff 160px,#0000ff 168px,#0000ff 176px,#0000ff 184px,#0000ff 192px,#0000ff 200px,#0000ff 208px,#0600ff 216px,#0b00ff 224px,#1100ff 232px,#1600ff 240px,#1c00ff 248px,#2100ff 256px,#2700ff 264px,#2c00ff 272px,#3200ff 280px,#3700ff 288px,#3d00ff 296px,#4200ff 304px,#4800ff 312px,#4e00ff 320px,#5300ff 328px,#5900ff 336px,#5f00ff 344px,#6400ff 352px,#6a00ff 360px,#7000ff 368px,#7600ff 376px,#7b00ff 384px,#8100ff 392px,#8700ff 400px,#8d00ff 408px,#9300ff 416px,#9900ff 424px,#9f00ff 432px,#a500ff 440px,#ab00ff 448px,#b100ff 456px,#b700ff 464px,#bd00ff 472px,#c300ff 480px,#c900ff 488px,#cf00ff 496px,#d500ff 504px,#dc00ff 512px,#e200ff 520px,#e800ff 528px,#ee00ff 536px,#f500ff 544px,#fb00ff 552px,#ff00fd 560px,#ff00f7 568px,#ff00f1 576px,#ff00eb 584px,#ff00e6 592px,#ff00e1 600px,#ff00dc 608px,#ff00d7 616px,#ff00d3 624px,#ff00ce 632px,#ff00ca 640px,#ff00c6 648px,#ff00c2 656px);"></div><div style="height:5px;background:linear-gradient(90deg,#0013ff 0px,#0012ff 8px,#0011ff 16px,#000fff 24px,#000eff 32px,#000cff 40px,#000bff 48px,#0009ff 56px,#0008ff 64px,#0006ff 72px,#0005ff 80px,#0003ff 88px,#0002ff 96px,#0000ff 104px,#0000ff 112px,#0000ff 120px,#0000ff 128px,#0000ff 136px,#0000ff 144px,#0000ff 152px,#0000ff 160px,#0000ff 168px,#0000ff 176px,#0000ff 184px,#0000ff 192px,#0000ff 200px,#0000ff 208px,#0500ff 216px,#0b00ff 224px,#1000ff 232px,#1500ff 240px,#1b00ff 248px,#2000ff 256px,#2600ff 264px,#2b00ff 272px,#3000ff 280px,#3600ff 288px,#3b00ff 296px,#4100ff 304px,#4700ff 312px,#4c00ff 320px,#5200ff 328px,#5700ff 336px,#5d00ff 344px,#6300ff 352px,#6800ff 360px,#6e00ff 368px,#7400ff 376px,#7900ff 384px,#7f00ff 392px,#8500ff 400px,#8b00ff 408px,#9100ff 416px,#9600ff 424px,#9c00ff 432px,#a200ff 440px,#a800ff 448px,#ae00ff 456px,#b400ff 464px,#ba00ff 472px,#c000ff 480px,#c600ff 488px,#cc00ff 496px,#d200ff 504px,#d800ff 512px,#de00ff 520px,#e400ff 528px,#eb00ff 536px,#f100ff 544px,#f700ff 552px,#fd00ff 560px,#ff00fb 568px,#ff00f5 576px,#ff00ef 584px,#ff00e9 592px,#ff00e4 600px,#ff00df 608px,#ff00da 616px,#ff00d6 624px,#ff00d1 632px,#ff00cd 640px,#ff00c9 648px,#ff00c5 656px);"></div><div style="height:5px;background:linear-gradient(90deg,#0012ff 0px,#0011ff 8px,#0010ff 16px,#000eff 24px,#000dff 32px,#000bff 40px,#000aff 48px,#0008ff 56px,#0007ff 64px,#0005ff 72px,#0004ff 80px,#0003ff 88px,#0001ff 96px,#0000ff 104px,#0000ff 112px,#0000ff 120px,#0000ff 128px,#0000ff 136px,#0000ff 144px,#0000ff 152px,#0000ff 160px,#0000ff 168px,#0000ff 176px,#0000ff 184px,#0000ff 192px,#0000ff 200px,#0000ff 208px,#0500ff 216px,#0a00ff 224px,#0f00ff 232px,#1500ff 240px,#1a00ff 248px,#1f00ff 256px,#2500ff 264px,#2a00ff 272px,#2f00ff 280px,#3500ff 288px,#3a00ff 296px,#4000ff 304px,#4500ff 312px,#4b00ff 320px,#5000ff 328px,#5600ff 336px,#5b00ff 344px,#6100ff 352px,#6600ff 360px,#6c00ff 368px,#7200ff 376px,#7700ff 384px,#7d00ff 392px,#8300ff 400px,#8800ff 408px,#8e00ff 416px,#9400ff 424px,#9a00ff 432px,#a000ff 440px,#a500ff 448px,#ab00ff 456px,#b100ff 464px,#b700ff 472px,#bd00ff 480px,#c300ff 488px,#c900ff 496px,#cf00ff 504px,#d500ff 512px,#db00ff 520px,#e100ff 528px,#e700ff 536px,#ed00ff 544px,#f300ff 552px,#f900ff 560px,#ff00fe 568px,#ff00f8 576px,#ff00f3 584px,#ff00ed 592px,#ff00e8 600px,#ff00e3 608px,#ff00de 616px,#ff00d9 624px,#ff00d5 632px,#ff00d0 640px,#ff00cc 648px,#ff00c8 656px);"></div><div style="height:5px;background:linear-gradient(90deg,#0011ff 0px,#0010ff 8px,#000eff 16px,#000dff 24px,#000cff 32px,#000aff 40px,#0009ff 48px,#0007ff 56px,#0006ff 64px,#0004ff 72px,#0003ff 80px,#0002ff 88px,#0000ff 96px,#0000ff 104px,#0000ff 112px,#0000ff 120px,#0000ff 128px,#0000ff 136px,#0000ff 144px,#0000ff 152px,#0000ff 160px,#0000ff 168px,#0000ff 176px,#0000ff 184px,#0000ff 192px,#0000ff 200px,#0000ff 208px,#0400ff 216px,#0900ff 224px,#0f00ff 232px,#1400ff 240px,#1900ff 248px,#1e00ff 256px,#2400ff 264px,#2900ff 272px,#2e00ff 280px,#3400ff 288px,#3900ff 296px,#3e00ff 304px,#4400ff 312px,#4900ff 320px,#4f00ff 328px,#5400ff 336px,#5a00ff 344px,#5f00ff 352px,#6500ff 360px,#6a00ff 368px,#7000ff 376px,#7500ff 384px,#7b00ff 392px,#8100ff 400px,#8600ff 408px,#8c00ff 416px,#9200ff 424px,#9700ff 432px,#9d00ff 440px,#a300ff 448px,#a900ff 456px,#ae00ff 464px,#b400ff 472px,#ba00ff 480px,#c000ff 488px,#c600ff 496px,#cc00ff 504px,#d200ff 512px,#d800ff 520px,#de00ff 528px,#e400ff 536px,#ea00ff 544px,#f000ff 552px,#f600ff 560px,#fc00ff 568px,#ff00fc 576px,#ff00f6 584px,#ff00f1 592px,#ff00eb 600px,#ff00e6 608px,#ff00e1 616px,#ff00dc 624px,#ff00d8 632px,#ff00d3 640px,#ff00cf 648px,#ff00cb 656px);"></div><div style="height:5px;background:linear-gradient(90deg,#0010ff 0px,#000fff 8px,#000dff 16px,#000cff 24px,#000bff 32px,#0009ff 40px,#0008ff 48px,#0006ff 56px,#0005ff 64px,#0004ff 72px,#0002ff 80px,#0001ff 88px,#0000ff 96px,#0000ff 104px,#0000ff 112px,#0000ff 120px,#0000ff 128px,#0000ff 136px,#0000ff 144px,#0000ff 152px,#0000ff 160px,#0000ff 168px,#0000ff 176px,#0000ff 184px,#0000ff 192px,#0000ff 200px,#0000ff 208px,#0400ff 216px,#0900ff 224px,#0e00ff 232px,#1300ff 240px,#1800ff 248px,#1d00ff 256px,#2300ff 264px,#2800ff 272px,#2d00ff 280px,#3200ff 288px,#3800ff 296px,#3d00ff 304px,#4200ff 312px,#4800ff 320px,#4d00ff 328px,#5300ff 336px,#5800ff 344px,#5d00ff 352px,#6300ff 360px,#6800ff 368px,#6e00ff 376px,#7300ff 384px,#7900ff 392px,#7e00ff 400px,#8400ff 408px,#8a00ff 416px,#8f00ff 424px,#9500ff 432px,#9b00ff 440px,#a000ff 448px,#a600ff 456px,#ac00ff 464px,#b100ff 472px,#b700ff 480px,#bd00ff 488px,#c300ff 496px,#c900ff 504px,#ce00ff 512px,#d400ff 520px,#da00ff 528px,#e000ff 536px,#e600ff 544px,#ec00ff 552px,#f200ff 560px,#f800ff 568px,#fe00ff 576px,#ff00fa 584px,#ff00f4 592px,#ff00ef 600px,#ff00ea 608px,#ff00e5 616px,#ff00e0 624px,#ff00db 632px,#ff00d7 640px,#ff00d2 648px,#ff00ce 656px);"></div><div style="height:5px;background:linear-gradient(90deg,#000fff 0px,#000eff 8px,#000cff 16px,#000bff 24px,#000aff 32px,#0008ff 40px,#0007ff 48px,#0005ff 56px,#0004ff 64px,#0003ff 72px,#0001ff 80px,#0000ff 88px,#0000ff 96px,#0000ff 104px,#0000ff 112px,#0000ff 120px,#0000ff 128px,#0000ff 136px,#0000ff 144px,#0000ff 152px,#0000ff 160px,#0000ff 168px,#0000ff 176px,#0000ff 184px,#0000ff 192px,#0000ff 200px,#0000ff 208px,#0300ff 216px,#0800ff 224px,#0d00ff 232px,#1200ff 240px,#1700ff 248px,#1d00ff 256px,#2200ff 264px,#2700ff 272px,#2c00ff 280px,#3100ff 288px,#3700ff 296px,#3c00ff 304px,#4100ff 312px,#4600ff 320px,#4c00ff 328px,#5100ff 336px,#5600ff 344px,#5c00ff 352px,#6100ff 360px,#6700ff 368px,#6c00ff 376px,#7100ff 384px,#7700ff 392px,#7c00ff 400px,#8200ff 408px,#8700ff 416px,#8d00ff 424px,#9300ff 432px,#9800ff 440px,#9e00ff 448px,#a300ff 456px,#a900ff 464px,#af00ff 472px,#b400ff 480px,#ba00ff 488px,#c000ff 496px,#c600ff 504px,#cb00ff 512px,#d100ff 520px,#d700ff 528px,#dd00ff 536px,#e300ff 544px,#e900ff 552px,#ee00ff 560px,#f400ff 568px,#fa00ff 576px,#ff00fe 584px,#ff00f8 592px,#ff00f2 600px,#ff00ed 608px,#ff00e8 616px,#ff00e3 624px,#ff00de 632px,#ff00da 640px,#ff00d5 648px,#ff00d1 656px);"></div><div style="height:5px;background:linear-gradient(90deg,#000eff 0px,#000dff 8px,#000bff 16px,#000aff 24px,#0009ff 32px,#0007ff 40px,#0006ff 48px,#0005ff 56px,#0003ff 64px,#0002ff 72px,#0000ff 80px,#0000ff 88px,#0000ff 96px,#0000ff 104px,#0000ff 112px,#0000ff 120px,#0000ff 128px,#0000ff 136px,#0000ff 144px,#0000ff 152px,#0000ff 160px,#0000ff 168px,#0000ff 176px,#0000ff 184px,#0000ff 192px,#0000ff 200px,#0000ff 208px,#0200ff 216px,#0700ff 224px,#0c00ff 232px,#1200ff 240px,#1700ff 248px,#1c00ff 256px,#2100ff 264px,#2600ff 272px,#2b00ff 280px,#3000ff 288px,#3500ff 296px,#3b00ff 304px,#4000ff 312px,#4500ff 320px,#4a00ff 328px,#5000ff 336px,#5500ff 344px,#5a00ff 352px,#5f00ff 360px,#6500ff 368px,#6a00ff 376px,#7000ff 384px,#7500ff 392px,#7a00ff 400px,#8000ff 408px,#8500ff 416px,#8b00ff 424px,#9000ff 432px,#9600ff 440px,#9b00ff 448px,#a100ff 456px,#a600ff 464px,#ac00ff 472px,#b200ff 480px,#b700ff 488px,#bd00ff 496px,#c300ff 504px,#c800ff 512px,#ce00ff 520px,#d400ff 528px,#da00ff 536px,#df00ff 544px,#e500ff 552px,#eb00ff 560px,#f100ff 568px,#f700ff 576px,#fd00ff 584px,#ff00fc 592px,#ff00f6 600px,#ff00f1 608px,#ff00eb 616px,#ff00e6 624px,#ff00e2 632px,#ff00dd 640px,#ff00d8 648px,#ff00d4 656px);"></div><div style="height:5px;background:linear-gradient(90deg,#000dff 0px,#000cff 8px,#000aff 16px,#0009ff 24px,#0008ff 32px,#0006ff 40px,#0005ff 48px,#0004ff 56px,#0002ff 64px,#0001ff 72px,#0000ff 80px,#0000ff 88px,#0000ff 96px,#0000ff 104px,#0000ff 112px,#0000ff 120px,#0000ff 128px,#0000ff 136px,#0000ff 144px,#0000ff 152px,#0000ff 160px,#0000ff 168px,#0000ff 176px,#0000ff 184px,#0000ff 192px,#0000ff 200px,#0000ff 208px,#0200ff 216px,#0700ff 224px,#0c00ff 232px,#1100ff 240px,#1600ff 248px,#1b00ff 256px,#2000ff 264px,#2500ff 272px,#2a00ff 280px,#2f00ff 288px,#3400ff 296px,#3900ff 304px,#3f00ff 312px,#4400ff 320px,#4900ff 328px,#4e00ff 336px,#5300ff 344px,#5900ff 352px,#5e00ff 360px,#6300ff 368px,#6800ff 376px,#6e00ff 384px,#7300ff 392px,#7800ff 400px,#7e00ff 408px,#8300ff 416px,#8900ff 424px,#8e00ff 432px,#9300ff 440px,#9900ff 448px,#9e00ff 456px,#a400ff 464px,#a900ff 472px,#af00ff 480px,#b500ff 488px,#ba00ff 496px,#c000ff 504px,#c500ff 512px,#cb00ff 520px,#d100ff 528px,#d600ff 536px,#dc00ff 544px,#e200ff 552px,#e800ff 560px,#ed00ff 568px,#f300ff 576px,#f900ff 584px,#ff00ff 592px,#ff00fa 600px,#ff00f4 608px,#ff00ef 616px,#ff00ea 624px,#ff00e5 632px,#ff00e0 640px,#ff00dc 648px,#ff00d7 656px);"></div><div style="height:5px;background:linear-gradient(90deg,#000cff 0px,#000bff 8px,#000aff 16px,#0008ff 24px,#0007ff 32px,#0005ff 40px,#0004ff 48px,#0003ff 56px,#0001ff 64px,#0000ff 72px,#0000ff 80px,#0000ff 88px,#0000ff 96px,#0000ff 104px,#0000ff 112px,#0000ff 120px,#0000ff 128px,#0000ff 136px,#0000ff 144px,#0000ff 152px,#0000ff 160px,#0000ff 168px,#0000ff 176px,#0000ff 184px,#0000ff 192px,#0000ff 200px,#0000ff 208px,#0100ff 216px,#0600ff 224px,#0b00ff 232px,#1000ff 240px,#1500ff 248px,#1a00ff 256px,#1f00ff 264px,#2400ff 272px,#2900ff 280px,#2e00ff 288px,#3300ff 296px,#3800ff 304px,#3d00ff 312px,#4200ff 320px,#4800ff 328px,#4d00ff 336px,#5200ff 344px,#5700ff 352px,#5c00ff 360px,#6100ff 368px,#6700ff 376px,#6c00ff 384px,#7100ff 392px,#7600ff 400px,#7c00ff 408px,#8100ff 416px,#8600ff 424px,#8c00ff 432px,#9100ff 440px,#9700ff 448px,#9c00ff 456px,#a100ff 464px,#a700ff 472px,#ac00ff 480px,#b200ff 488px,#b700ff 496px,#bd00ff 504px,#c200ff 512px,#c800ff 520px,#ce00ff 528px,#d300ff 536px,#d900ff 544px,#df00ff 552px,#e400ff 560px,#ea00ff 568px,#f000ff 576px,#f500ff 584px,#fb00ff 592px,#ff00fd 600px,#ff00f8 608px,#ff00f2 616px,#ff00ed 624px,#ff00e8 632px,#ff00e3 640px,#ff00df 648px,#ff00da 656px);"></div><div style="height:5px;background:linear-gradient(90deg,#000bff 0px,#000aff 8px,#0009ff 16px,#0007ff 24px,#0006ff 32px,#0005ff 40px,#0003ff 48px,#0002ff 56px,#0001ff 64px,#0000ff 72px,#0000ff 80px,#0000ff 88px,#0000ff 96px,#0000ff 104px,#0000ff 112px,#0000ff 120px,#0000ff 128px,#0000ff 136px,#0000ff 144px,#0000ff 152px,#0000ff 160px,#0000ff 168px,#0000ff 176px,#0000ff 184px,#0000ff 192px,#0000ff 200px,#0000ff 208px,#0100ff 216px,#0600ff 224px,#0b00ff 232px,#1000ff 240px,#1500ff 248px,#1900ff 256px,#1e00ff 264px,#2300ff 272px,#2800ff 280px,#2d00ff 288px,#3200ff 296px,#3700ff 304px,#3c00ff 312px,#4100ff 320px,#4700ff 328px,#4c00ff 336px,#5100ff 344px,#5600ff 352px,#5b00ff 360px,#6000ff 368px,#6500ff 376px,#6b00ff 384px,#7000ff 392px,#7500ff 400px,#7a00ff 408px,#8000ff 416px,#8500ff 424px,#8a00ff 432px,#9000ff 440px,#9500ff 448px,#9a00ff 456px,#a000ff 464px,#a500ff 472px,#aa00ff 480px,#b000ff 488px,#b500ff 496px,#bb00ff 504px,#c000ff 512px,#c600ff 520px,#cb00ff 528px,#d100ff 536px,#d600ff 544px,#dc00ff 552px,#e200ff 560px,#e700ff 568px,#ed00ff 576px,#f300ff 584px,#f800ff 592px,#fe00ff 600px,#ff00fa 608px,#ff00f5 616px,#ff00f0 624px,#ff00eb 632px,#ff00e6 640px,#ff00e1 648px,#ff00dd 656px);"></div><div style="height:5px;background:linear-gradient(90deg,#000bff 0px,#000aff 8px,#0009ff 16px,#0007ff 24px,#0006ff 32px,#0005ff 40px,#0003ff 48px,#0002ff 56px,#0001ff 64px,#0000ff 72px,#0000ff 80px,#0000ff 88px,#0000ff 96px,#0000ff 104px,#0000ff 112px,#0000ff 120px,#0000ff 128px,#0000ff 136px,#0000ff 144px,#0000ff 152px,#0000ff 160px,#0000ff 168px,#0000ff 176px,#0000ff 184px,#0000ff 192px,#0000ff 200px,#0000ff 208px,#0100ff 216px,#0600ff 224px,#0b00ff 232px,#1000ff 240px,#1500ff 248px,#1900ff 256px,#1e00ff 264px,#2300ff 272px,#2800ff 280px,#2d00ff 288px,#3200ff 296px,#3700ff 304px,#3c00ff 312px,#4100ff 320px,#4700ff 328px,#4c00ff 336px,#5100ff 344px,#5600ff 352px,#5b00ff 360px,#6000ff 368px,#6500ff 376px,#6b00ff 384px,#7000ff 392px,#7500ff 400px,#7a00ff 408px,#8000ff 416px,#8500ff 424px,#8a00ff 432px,#9000ff 440px,#9500ff 448px,#9a00ff 456px,#a000ff 464px,#a500ff 472px,#aa00ff 480px,#b000ff 488px,#b500ff 496px,#bb00ff 504px,#c000ff 512px,#c600ff 520px,#cb00ff 528px,#d100ff 536px,#d600ff 544px,#dc00ff 552px,#e200ff 560px,#e700ff 568px,#ed00ff 576px,#f300ff 584px,#f800ff 592px,#fe00ff 600px,#ff00fa 608px,#ff00f5 616px,#ff00f0 624px,#ff00eb 632px,#ff00e6 640px,#ff00e1 648px,#ff00dd 656px);"></div></div></div>
<div style="position:absolute;left:1012px;top:115px;width:652px;height:505px;background:rgba(0,0,0,0.4);clip-path:path(evenodd,'M280.2 484.4 L279.0 483.9 L277.3 483.3 L275.3 482.6 L273.1 481.7 L270.9 480.7 L268.9 479.5 L267.0 478.2 L265.2 476.7 L263.3 475.1 L261.4 473.4 L259.2 471.4 L256.7 469.3 L254.0 467.1 L251.1 464.7 L247.9 462.2 L244.5 459.4 L240.9 456.4 L236.9 453.0 L232.3 449.1 L227.2 444.7 L221.8 440.1 L216.4 435.4 L211.3 430.8 L206.7 426.7 L202.9 423.1 L199.6 419.9 L196.5 416.8 L193.5 413.7 L190.4 410.3 L186.8 406.3 L182.8 401.8 L178.6 397.0 L174.2 391.8 L169.7 386.3 L165.1 380.5 L160.3 374.3 L155.4 367.9 L150.3 361.0 L145.1 353.9 L139.8 346.4 L134.5 338.7 L129.0 330.6 L123.5 322.2 L117.9 313.4 L112.2 304.3 L106.4 295.1 L100.7 285.6 L95.1 276.2 L89.5 266.6 L83.9 256.8 L78.3 246.9 L72.8 236.9 L67.5 227.1 L62.5 217.3 L57.7 207.7 L53.1 198.0 L48.8 188.4 L44.6 178.9 L40.7 169.7 L37.0 160.8 L33.5 152.2 L30.3 143.8 L27.3 135.7 L24.5 127.8 L22.0 120.3 L19.7 113.2 L17.6 106.5 L15.8 100.1 L14.2 94.1 L12.9 88.3 L11.7 82.9 L10.7 77.8 L9.9 73.0 L9.3 68.5 L8.8 64.3 L8.6 60.4 L8.5 56.7 L8.5 53.2 L8.7 49.8 L9.1 46.7 L9.6 43.8 L10.2 41.1 L11.0 38.6 L11.9 36.2 L13.0 34.0 L14.2 32.0 L15.5 30.1 L16.9 28.4 L18.5 26.9 L20.1 25.5 L21.8 24.2 L23.6 23.1 L25.5 22.2 L27.5 21.4 L29.5 20.6 L31.6 20.0 L33.7 19.4 L36.0 19.0 L38.2 18.7 L40.6 18.4 L42.9 18.2 L45.3 17.9 L47.7 17.8 L50.2 17.6 L52.7 17.6 L55.2 17.5 L57.7 17.5 L60.3 17.4 L62.8 17.4 L65.3 17.4 L67.8 17.5 L70.3 17.5 L72.9 17.6 L75.5 17.6 L78.0 17.7 L80.6 17.8 L83.3 17.9 L85.9 18.1 L88.6 18.2 L91.3 18.4 L94.1 18.6 L96.8 18.7 L99.7 18.9 L102.5 19.2 L105.4 19.4 L108.4 19.6 L111.4 19.9 L114.4 20.1 L117.4 20.4 L120.5 20.7 L123.7 21.0 L126.9 21.3 L130.2 21.6 L133.5 21.9 L136.9 22.3 L140.3 22.6 L143.8 23.0 L147.3 23.3 L150.6 23.7 L153.6 24.0 L156.6 24.3 L160.1 24.7 L164.4 25.2 L169.9 25.8 L176.8 26.5 L184.8 27.4 L193.7 28.4 L203.1 29.5 L212.8 30.6 L222.6 31.7 L232.4 32.8 L242.6 34.0 L253.0 35.2 L263.8 36.4 L274.8 37.7 L286.1 39.0 L297.8 40.3 L309.8 41.7 L322.1 43.1 L334.6 44.6 L347.2 46.0 L359.7 47.5 L372.4 48.9 L385.3 50.4 L398.3 51.9 L411.2 53.4 L423.9 54.9 L436.3 56.3 L448.5 57.7 L460.7 59.1 L472.6 60.4 L484.3 61.8 L495.5 63.1 L506.2 64.3 L516.3 65.5 L526.1 66.6 L535.3 67.7 L544.2 68.7 L552.6 69.6 L560.6 70.6 L568.0 71.4 L575.0 72.2 L581.5 73.0 L587.6 73.7 L593.5 74.3 L599.1 75.0 L604.5 75.6 L609.7 76.2 L614.5 76.8 L619.0 77.3 L623.3 77.8 L627.4 78.3 L630.9 78.7 L634.0 79.0 L636.9 79.3 L639.7 79.7 L642.6 80.0 L645.9 80.4 L646.0 80.4 L646.0 108.2 Z M140.0 37.5 L486.0 69.0 L193.0 368.0 Z');"></div>
<div style="position:absolute;left:1144.1px;top:144.0px;width:15px;height:15px;border:1.6px solid #f0f0f0;box-sizing:border-box;background:transparent;"></div>
<div style="position:absolute;left:1168.2px;top:149.1px;width:9.8px;height:9.8px;border:1.2px solid #151515;box-sizing:border-box;border-radius:50%;background:#10a018;"></div>
<div style="position:absolute;left:1228.2px;top:151.9px;width:15px;height:15px;border:1.6px solid #f0f0f0;box-sizing:border-box;background:transparent;"></div>
<div style="position:absolute;left:1236.1px;top:154.5px;width:9.8px;height:9.8px;border:1.2px solid #151515;box-sizing:border-box;border-radius:50%;background:#b4b400;"></div>
<div style="position:absolute;left:1490.5px;top:176.5px;width:15px;height:15px;border:1.6px solid #f0f0f0;box-sizing:border-box;background:transparent;"></div>
<div style="position:absolute;left:1418.1px;top:172.1px;width:9.8px;height:9.8px;border:1.2px solid #151515;box-sizing:border-box;border-radius:50%;background:#a00018;"></div>
<div style="position:absolute;left:1159.0px;top:232.0px;width:15px;height:15px;border:1.6px solid #f0f0f0;box-sizing:border-box;background:transparent;"></div>
<div style="position:absolute;left:1179.1px;top:251.1px;width:9.8px;height:9.8px;border:1.2px solid #151515;box-sizing:border-box;border-radius:50%;background:#10a0a0;"></div>
<div style="position:absolute;left:1335.5px;top:333.5px;width:15px;height:15px;border:1.6px solid #f0f0f0;box-sizing:border-box;background:transparent;"></div>
<div style="position:absolute;left:1308.1px;top:346.6px;width:9.8px;height:9.8px;border:1.2px solid #151515;box-sizing:border-box;border-radius:50%;background:#b000b0;"></div>
<div style="position:absolute;left:1197.5px;top:475.5px;width:15px;height:15px;border:1.6px solid #f0f0f0;box-sizing:border-box;background:transparent;"></div>
<div style="position:absolute;left:1208.1px;top:501.1px;width:9.8px;height:9.8px;border:1.2px solid #101010;box-sizing:border-box;border-radius:50%;background:#001090;"></div>
<div style="position:absolute;left:1226.1px;top:236.1px;width:9.8px;height:9.8px;border:1.2px solid #151515;box-sizing:border-box;border-radius:50%;background:#d8d8d8;"></div>
<div style="position:absolute;left:1221.1px;top:220.9px;width:15px;height:15px;border:2.2px solid #000;box-sizing:border-box;background:rgba(255,255,255,0.5);"></div>
<div style="position:absolute;left:1227.9px;top:233.9px;width:9.8px;height:9.8px;border:1.2px solid #151515;box-sizing:border-box;border-radius:50%;background:#fff;"></div>
<div style="position:absolute;left:1403px;top:581.7px;width:252px;height:28.5px;background:#2d2d2d;"></div>
<div class="t" style="left:1404px;top:587.2px;font-size:19.6px;line-height:19.6px;color:#f4f4f4;font-weight:normal;">Gamut Coverage:&nbsp; 77,2%</div>
<div class="t" style="left:15px;top:690.0px;font-size:29.9px;line-height:29.9px;color:#f0f0f0;font-weight:normal;">Current Reading</div>
<div class="t" style="left:15px;top:763.2px;font-size:25.5px;line-height:25.5px;color:#f0f0f0;font-weight:normal;">x: 0,3073</div>
<div class="t" style="left:172px;top:763.2px;font-size:25.5px;line-height:25.5px;color:#f0f0f0;font-weight:normal;">y: 0,3089</div>
<div class="t" style="left:15px;top:804.2px;font-size:25.5px;line-height:25.5px;color:#f0f0f0;font-weight:normal;">fL: 110,28</div>
<div class="t" style="left:15px;top:844.2px;font-size:25.5px;line-height:25.5px;color:#f0f0f0;font-weight:normal;letter-spacing:0.4px;">cd/m²: 377,84</div>
<div class="t" style="left:-33px;width:1000px;text-align:center;top:671.4px;font-size:13.2px;line-height:13.2px;color:#cfcfcf;font-weight:normal;">RGB Balance</div>
<div style="position:absolute;left:357px;top:688px;width:250px;height:180px;background:#232323;"></div>
<div style="position:absolute;left:352px;top:688px;width:255px;height:1.5px;background:#8e8e8e;"></div>
<div class="t" style="left:-649.3px;width:1000px;text-align:right;top:681.8px;font-size:14.5px;line-height:14.5px;color:#cfcfcf;font-weight:normal;">110</div>
<div style="position:absolute;left:352px;top:733px;width:255px;height:1.5px;background:#8e8e8e;"></div>
<div class="t" style="left:-649.3px;width:1000px;text-align:right;top:726.8px;font-size:14.5px;line-height:14.5px;color:#cfcfcf;font-weight:normal;">105</div>
<div style="position:absolute;left:352px;top:778px;width:255px;height:1.5px;background:#8e8e8e;"></div>
<div class="t" style="left:-649.3px;width:1000px;text-align:right;top:771.8px;font-size:14.5px;line-height:14.5px;color:#cfcfcf;font-weight:normal;">100</div>
<div style="position:absolute;left:352px;top:823px;width:255px;height:1.5px;background:#8e8e8e;"></div>
<div class="t" style="left:-649.3px;width:1000px;text-align:right;top:816.8px;font-size:14.5px;line-height:14.5px;color:#cfcfcf;font-weight:normal;">95</div>
<div style="position:absolute;left:352px;top:868px;width:255px;height:1.5px;background:#8e8e8e;"></div>
<div class="t" style="left:-649.3px;width:1000px;text-align:right;top:861.8px;font-size:14.5px;line-height:14.5px;color:#cfcfcf;font-weight:normal;">90</div>
<div style="position:absolute;left:357px;top:688px;width:1.5px;height:186px;background:#8e8e8e;"></div>
<div style="position:absolute;left:607px;top:688px;width:1.5px;height:186px;background:#8e8e8e;"></div>
<div class="t" style="left:-18px;width:1000px;text-align:center;top:872.8px;font-size:13.5px;line-height:13.5px;color:#cfcfcf;font-weight:normal;">100W</div>
<div style="position:absolute;left:382px;top:755px;width:65.5px;height:113px;background:linear-gradient(#ff5858,#ff2020);border:1.5px solid #000;border-bottom:none;box-sizing:border-box;"></div>
<div style="position:absolute;left:449px;top:791px;width:64.5px;height:77px;background:linear-gradient(#5cb05c,#2a9a2a);border:1.5px solid #000;border-bottom:none;box-sizing:border-box;"></div>
<div style="position:absolute;left:515.5px;top:724px;width:65px;height:144px;background:linear-gradient(#5858ff,#2020f0);border:1.5px solid #000;border-bottom:none;box-sizing:border-box;"></div>
<div class="t" style="left:307.5px;width:1000px;text-align:center;top:662.5px;font-size:14px;line-height:14px;color:#cfcfcf;font-weight:normal;">CIE 1931 xy</div>
<div style="position:absolute;left:636.8px;top:678.8px;width:342.20000000000005px;height:199.5px;overflow:hidden;border:1px solid #9a9a9a;box-sizing:border-box;"><div style="margin:-4px;filter:blur(3px);"><div style="height:6px;background:linear-gradient(90deg,#77ffd6 0px,#80ffd5 12px,#88ffd5 24px,#90ffd5 36px,#97ffd4 48px,#9effd4 60px,#a4ffd3 72px,#abffd3 84px,#b1ffd3 96px,#b7ffd2 108px,#bdffd2 120px,#c3ffd1 132px,#c8ffd1 144px,#cdffd0 156px,#d3ffd0 168px,#d8ffd0 180px,#ddffcf 192px,#e2ffcf 204px,#e7ffce 216px,#ecffce 228px,#f1ffcd 240px,#f6ffcc 252px,#fbffcc 264px,#ffffcb 276px,#fffac7 288px,#fff5c3 300px,#fff1bf 312px,#ffedbb 324px,#ffe9b7 336px,#ffe5b4 348px);"></div><div style="height:6px;background:linear-gradient(90deg,#79ffd8 0px,#82ffd8 12px,#8affd7 24px,#92ffd7 36px,#99ffd7 48px,#a0ffd6 60px,#a7ffd6 72px,#adffd5 84px,#b3ffd5 96px,#b9ffd5 108px,#bfffd4 120px,#c5ffd4 132px,#caffd3 144px,#d0ffd3 156px,#d5ffd3 168px,#daffd2 180px,#e0ffd2 192px,#e5ffd1 204px,#eaffd1 216px,#efffd0 228px,#f4ffd0 240px,#f8ffcf 252px,#fdffcf 264px,#fffccc 276px,#fff7c8 288px,#fff3c3 300px,#ffefc0 312px,#ffebbc 324px,#ffe7b8 336px,#ffe3b5 348px);"></div><div style="height:6px;background:linear-gradient(90deg,#7cffda 0px,#85ffda 12px,#8dffda 24px,#95ffd9 36px,#9cffd9 48px,#a3ffd9 60px,#a9ffd8 72px,#b0ffd8 84px,#b6ffd8 96px,#bcffd7 108px,#c2ffd7 120px,#c7ffd6 132px,#cdffd6 144px,#d2ffd6 156px,#d8ffd5 168px,#ddffd5 180px,#e2ffd4 192px,#e7ffd4 204px,#ecffd3 216px,#f1ffd3 228px,#f6ffd3 240px,#fbffd2 252px,#fffed1 264px,#fff9cd 276px,#fff5c8 288px,#fff1c4 300px,#ffecc0 312px,#ffe8bd 324px,#ffe5b9 336px,#ffe1b5 348px);"></div><div style="height:6px;background:linear-gradient(90deg,#7fffdd 0px,#88ffdc 12px,#90ffdc 24px,#97ffdc 36px,#9effdb 48px,#a5ffdb 60px,#acffdb 72px,#b2ffda 84px,#b8ffda 96px,#beffda 108px,#c4ffd9 120px,#caffd9 132px,#cfffd9 144px,#d5ffd8 156px,#daffd8 168px,#dfffd7 180px,#e4ffd7 192px,#eaffd7 204px,#efffd6 216px,#f4ffd6 228px,#f9ffd5 240px,#feffd5 252px,#fffcd2 264px,#fff7cd 276px,#fff3c9 288px,#ffeec5 300px,#ffeac1 312px,#ffe6be 324px,#ffe2ba 336px,#ffdfb6 348px);"></div><div style="height:6px;background:linear-gradient(90deg,#82ffdf 0px,#8affdf 12px,#92ffde 24px,#9affde 36px,#a1ffde 48px,#a7ffde 60px,#aeffdd 72px,#b4ffdd 84px,#baffdd 96px,#c0ffdc 108px,#c6ffdc 120px,#ccffdc 132px,#d2ffdb 144px,#d7ffdb 156px,#dcffdb 168px,#e2ffda 180px,#e7ffda 192px,#ecffd9 204px,#f1ffd9 216px,#f6ffd9 228px,#fbffd8 240px,#fffed7 252px,#fff9d2 264px,#fff4ce 276px,#fff0ca 288px,#ffecc6 300px,#ffe8c2 312px,#ffe4be 324px,#ffe0bb 336px,#ffdcb7 348px);"></div><div style="height:6px;background:linear-gradient(90deg,#84ffe1 0px,#8dffe1 12px,#95ffe1 24px,#9cffe1 36px,#a3ffe0 48px,#aaffe0 60px,#b0ffe0 72px,#b7ffdf 84px,#bdffdf 96px,#c3ffdf 108px,#c9ffdf 120px,#ceffde 132px,#d4ffde 144px,#d9ffde 156px,#dfffdd 168px,#e4ffdd 180px,#e9ffdd 192px,#efffdc 204px,#f4ffdc 216px,#f9ffdb 228px,#feffdb 240px,#fffbd7 252px,#fff7d3 264px,#fff2cf 276px,#ffeecb 288px,#ffe9c7 300px,#ffe5c3 312px,#ffe2bf 324px,#ffdebc 336px,#ffdab8 348px);"></div><div style="height:6px;background:linear-gradient(90deg,#87ffe4 0px,#8fffe4 12px,#97ffe3 24px,#9fffe3 36px,#a6ffe3 48px,#acffe3 60px,#b3ffe2 72px,#b9ffe2 84px,#bfffe2 96px,#c5ffe1 108px,#cbffe1 120px,#d1ffe1 132px,#d6ffe1 144px,#dcffe0 156px,#e1ffe0 168px,#e7ffe0 180px,#ecffdf 192px,#f1ffdf 204px,#f6ffdf 216px,#fbffde 228px,#fffedd 240px,#fff9d8 252px,#fff4d4 264px,#fff0cf 276px,#ffebcb 288px,#ffe7c7 300px,#ffe3c4 312px,#ffdfc0 324px,#ffdcbc 336px,#ffd8b9 348px);"></div><div style="height:6px;background:linear-gradient(90deg,#8affe6 0px,#92ffe6 12px,#9affe6 24px,#a1ffe6 36px,#a8ffe5 48px,#afffe5 60px,#b5ffe5 72px,#bcffe5 84px,#c2ffe4 96px,#c8ffe4 108px,#ceffe4 120px,#d3ffe4 132px,#d9ffe3 144px,#deffe3 156px,#e4ffe3 168px,#e9ffe2 180px,#efffe2 192px,#f4ffe2 204px,#f9ffe2 216px,#feffe1 228px,#fffbdd 240px,#fff6d9 252px,#fff1d4 264px,#ffedd0 276px,#ffe9cc 288px,#ffe5c8 300px,#ffe1c4 312px,#ffddc1 324px,#ffd9bd 336px,#ffd6ba 348px);"></div><div style="height:6px;background:linear-gradient(90deg,#8dffe9 0px,#95ffe9 12px,#9cffe8 24px,#a4ffe8 36px,#abffe8 48px,#b1ffe8 60px,#b8ffe8 72px,#beffe7 84px,#c4ffe7 96px,#caffe7 108px,#d0ffe7 120px,#d6ffe6 132px,#dbffe6 144px,#e1ffe6 156px,#e6ffe6 168px,#ecffe5 180px,#f1ffe5 192px,#f6ffe5 204px,#fcffe5 216px,#fffde3 228px,#fff8de 240px,#fff3d9 252px,#ffefd5 264px,#ffebd1 276px,#ffe6cd 288px,#ffe2c9 300px,#ffdec5 312px,#ffdbc2 324px,#ffd7be 336px,#ffd4bb 348px);"></div><div style="height:6px;background:linear-gradient(90deg,#8fffeb 0px,#97ffeb 12px,#9fffeb 24px,#a6ffeb 36px,#adffeb 48px,#b4ffea 60px,#baffea 72px,#c1ffea 84px,#c7ffea 96px,#cdffea 108px,#d3ffe9 120px,#d8ffe9 132px,#deffe9 144px,#e4ffe9 156px,#e9ffe8 168px,#efffe8 180px,#f4ffe8 192px,#f9ffe8 204px,#feffe7 216px,#fffae3 228px,#fff6de 240px,#fff1da 252px,#ffecd6 264px,#ffe8d1 276px,#ffe4cd 288px,#ffe0ca 300px,#ffdcc6 312px,#ffd8c2 324px,#ffd5bf 336px,#ffd1bb 348px);"></div><div style="height:6px;background:linear-gradient(90deg,#92ffee 0px,#9affee 12px,#a2ffed 24px,#a9ffed 36px,#b0ffed 48px,#b6ffed 60px,#bdffed 72px,#c3ffed 84px,#c9ffec 96px,#cfffec 108px,#d5ffec 120px,#dbffec 132px,#e1ffec 144px,#e6ffec 156px,#ecffeb 168px,#f1ffeb 180px,#f7ffeb 192px,#fcffeb 204px,#fffde8 216px,#fff8e4 228px,#fff3df 240px,#ffeedb 252px,#ffead6 264px,#ffe6d2 276px,#ffe2ce 288px,#ffdeca 300px,#ffdac7 312px,#ffd6c3 324px,#ffd3c0 336px,#ffcfbc 348px);"></div><div style="height:6px;background:linear-gradient(90deg,#95fff0 0px,#9dfff0 12px,#a4fff0 24px,#abfff0 36px,#b2fff0 48px,#b9fff0 60px,#c0fff0 72px,#c6ffef 84px,#ccffef 96px,#d2ffef 108px,#d8ffef 120px,#deffef 132px,#e3ffef 144px,#e9ffee 156px,#efffee 168px,#f4ffee 180px,#f9ffee 192px,#ffffee 204px,#fffae9 216px,#fff5e4 228px,#fff0e0 240px,#ffecdb 252px,#ffe7d7 264px,#ffe3d3 276px,#ffdfcf 288px,#ffdbcb 300px,#ffd7c7 312px,#ffd4c4 324px,#ffd0c0 336px,#ffcdbd 348px);"></div><div style="height:6px;background:linear-gradient(90deg,#98fff3 0px,#9ffff3 12px,#a7fff3 24px,#aefff3 36px,#b5fff3 48px,#bcfff2 60px,#c2fff2 72px,#c8fff2 84px,#cffff2 96px,#d5fff2 108px,#dbfff2 120px,#e0fff2 132px,#e6fff2 144px,#ecfff1 156px,#f1fff1 168px,#f7fff1 180px,#fcfff1 192px,#fffcee 204px,#fff7e9 216px,#fff2e5 228px,#ffeee0 240px,#ffe9dc 252px,#ffe5d7 264px,#ffe1d3 276px,#ffddcf 288px,#ffd9cc 300px,#ffd5c8 312px,#ffd2c5 324px,#ffcec1 336px,#ffcbbe 348px);"></div><div style="height:6px;background:linear-gradient(90deg,#9afff6 0px,#a2fff6 12px,#aafff5 24px,#b1fff5 36px,#b8fff5 48px,#befff5 60px,#c5fff5 72px,#cbfff5 84px,#d1fff5 96px,#d7fff5 108px,#ddfff5 120px,#e3fff5 132px,#e9fff5 144px,#eefff4 156px,#f4fff4 168px,#fafff4 180px,#fffff4 192px,#fffaef 204px,#fff4ea 216px,#fff0e5 228px,#ffebe1 240px,#ffe7dc 252px,#ffe2d8 264px,#ffded4 276px,#ffdad0 288px,#ffd6cc 300px,#ffd3c9 312px,#ffcfc5 324px,#ffccc2 336px,#ffc8bf 348px);"></div><div style="height:6px;background:linear-gradient(90deg,#9dfff8 0px,#a5fff8 12px,#acfff8 24px,#b3fff8 36px,#bafff8 48px,#c1fff8 60px,#c7fff8 72px,#cefff8 84px,#d4fff8 96px,#dafff8 108px,#e0fff8 120px,#e6fff8 132px,#ecfff8 144px,#f1fff8 156px,#f7fff7 168px,#fdfff7 180px,#fffcf4 192px,#fff7ef 204px,#fff2ea 216px,#ffede6 228px,#ffe8e1 240px,#ffe4dd 252px,#ffe0d9 264px,#ffdcd5 276px,#ffd8d1 288px,#ffd4cd 300px,#ffd0c9 312px,#ffcdc6 324px,#ffcac3 336px,#ffc6bf 348px);"></div><div style="height:6px;background:linear-gradient(90deg,#a0fffb 0px,#a8fffb 12px,#affffb 24px,#b6fffb 36px,#bdfffb 48px,#c4fffb 60px,#cafffb 72px,#d0fffb 84px,#d7fffb 96px,#ddfffb 108px,#e3fffb 120px,#e9fffb 132px,#eefffb 144px,#f4fffb 156px,#fafffb 168px,#fffffa 180px,#fff9f5 192px,#fff4f0 204px,#ffefeb 216px,#ffeae6 228px,#ffe6e2 240px,#ffe1dd 252px,#ffddd9 264px,#ffd9d5 276px,#ffd5d1 288px,#ffd2ce 300px,#ffceca 312px,#ffcbc7 324px,#ffc7c3 336px,#ffc4c0 348px);"></div><div style="height:6px;background:linear-gradient(90deg,#a3fffe 0px,#aafffe 12px,#b2fffe 24px,#b9fffe 36px,#c0fffe 48px,#c6fffe 60px,#cdfffe 72px,#d3fffe 84px,#d9fffe 96px,#e0fffe 108px,#e6fffe 120px,#ebfffe 132px,#f1fffe 144px,#f7fffe 156px,#fdfffe 168px,#fffcfa 180px,#fff6f5 192px,#fff1f0 204px,#ffeceb 216px,#ffe8e6 228px,#ffe3e2 240px,#ffdfde 252px,#ffdbda 264px,#ffd7d6 276px,#ffd3d2 288px,#ffcfce 300px,#ffcccb 312px,#ffc8c7 324px,#ffc5c4 336px,#ffc2c1 348px);"></div><div style="height:6px;background:linear-gradient(90deg,#a4fdff 0px,#acfdff 12px,#b3fdff 24px,#bafdff 36px,#c1fdff 48px,#c8fdff 60px,#cefdff 72px,#d5fdff 84px,#dbfdff 96px,#e1fdff 108px,#e7fdff 120px,#edfdff 132px,#f2fdff 144px,#f8fdff 156px,#fefdff 168px,#fff9fb 180px,#fff3f5 192px,#ffeef0 204px,#ffeaec 216px,#ffe5e7 228px,#ffe1e3 240px,#ffdcde 252px,#ffd8da 264px,#ffd4d6 276px,#ffd1d3 288px,#ffcdcf 300px,#ffc9cb 312px,#ffc6c8 324px,#ffc3c5 336px,#ffbfc1 348px);"></div><div style="height:6px;background:linear-gradient(90deg,#a5fbff 0px,#adfbff 12px,#b4faff 24px,#bbfaff 36px,#c2faff 48px,#c8faff 60px,#cffaff 72px,#d5faff 84px,#dbfaff 96px,#e1faff 108px,#e7faff 120px,#edfaff 132px,#f2faff 144px,#f8faff 156px,#fefaff 168px,#fff6fb 180px,#fff0f6 192px,#ffecf1 204px,#ffe7ec 216px,#ffe2e7 228px,#ffdee3 240px,#ffdadf 252px,#ffd6db 264px,#ffd2d7 276px,#ffced3 288px,#ffcad0 300px,#ffc7cc 312px,#ffc4c9 324px,#ffc0c5 336px,#ffbdc2 348px);"></div><div style="height:6px;background:linear-gradient(90deg,#a6f8ff 0px,#aef8ff 12px,#b5f8ff 24px,#bcf8ff 36px,#c2f7ff 48px,#c9f7ff 60px,#cff7ff 72px,#d5f7ff 84px,#dbf7ff 96px,#e1f7ff 108px,#e7f7ff 120px,#edf7ff 132px,#f2f7ff 144px,#f8f7ff 156px,#fdf7ff 168px,#fff3fb 180px,#ffeef6 192px,#ffe9f1 204px,#ffe4ec 216px,#ffe0e8 228px,#ffdbe3 240px,#ffd7df 252px,#ffd3db 264px,#ffcfd7 276px,#ffccd4 288px,#ffc8d0 300px,#ffc5cd 312px,#ffc1c9 324px,#ffbec6 336px,#ffbbc3 348px);"></div><div style="height:6px;background:linear-gradient(90deg,#a7f5ff 0px,#aff5ff 12px,#b6f5ff 24px,#bcf5ff 36px,#c3f5ff 48px,#c9f4ff 60px,#cff4ff 72px,#d5f4ff 84px,#dbf4ff 96px,#e1f4ff 108px,#e7f4ff 120px,#edf4ff 132px,#f2f4ff 144px,#f8f3ff 156px,#fdf3ff 168px,#fff0fb 180px,#ffebf6 192px,#ffe6f1 204px,#ffe1ed 216px,#ffdde8 228px,#ffd9e4 240px,#ffd5e0 252px,#ffd1dc 264px,#ffcdd8 276px,#ffc9d4 288px,#ffc6d1 300px,#ffc2cd 312px,#ffbfca 324px,#ffbcc7 336px,#ffb9c3 348px);"></div><div style="height:6px;background:linear-gradient(90deg,#a8f2ff 0px,#aff2ff 12px,#b6f2ff 24px,#bdf2ff 36px,#c3f2ff 48px,#c9f2ff 60px,#d0f1ff 72px,#d6f1ff 84px,#dbf1ff 96px,#e1f1ff 108px,#e7f1ff 120px,#edf1ff 132px,#f2f0ff 144px,#f8f0ff 156px,#fdf0ff 168px,#ffedfc 180px,#ffe8f7 192px,#ffe3f2 204px,#ffdfed 216px,#ffdae9 228px,#ffd6e4 240px,#ffd2e0 252px,#ffcedc 264px,#ffcad9 276px,#ffc7d5 288px,#ffc3d1 300px,#ffc0ce 312px,#ffbdca 324px,#ffb9c7 336px,#ffb6c4 348px);"></div><div style="height:6px;background:linear-gradient(90deg,#a9f0ff 0px,#b0efff 12px,#b7efff 24px,#bdefff 36px,#c4efff 48px,#caefff 60px,#d0efff 72px,#d6eeff 84px,#dceeff 96px,#e1eeff 108px,#e7eeff 120px,#edeeff 132px,#f2edff 144px,#f7edff 156px,#fdedff 168px,#ffeafc 180px,#ffe5f7 192px,#ffe0f2 204px,#ffdced 216px,#ffd8e9 228px,#ffd3e5 240px,#ffcfe1 252px,#ffccdd 264px,#ffc8d9 276px,#ffc4d5 288px,#ffc1d2 300px,#ffbdce 312px,#ffbacb 324px,#ffb7c8 336px,#ffb4c5 348px);"></div><div style="height:6px;background:linear-gradient(90deg,#aaedff 0px,#b1edff 12px,#b8ecff 24px,#beecff 36px,#c4ecff 48px,#caecff 60px,#d0ecff 72px,#d6ebff 84px,#dcebff 96px,#e1ebff 108px,#e7ebff 120px,#ecebff 132px,#f2eaff 144px,#f7eaff 156px,#fdeaff 168px,#ffe7fc 180px,#ffe2f7 192px,#ffdef2 204px,#ffd9ee 216px,#ffd5e9 228px,#ffd1e5 240px,#ffcde1 252px,#ffc9dd 264px,#ffc5da 276px,#ffc2d6 288px,#ffbed2 300px,#ffbbcf 312px,#ffb8cc 324px,#ffb5c8 336px,#ffb2c5 348px);"></div><div style="height:6px;background:linear-gradient(90deg,#abeaff 0px,#b2eaff 12px,#b8eaff 24px,#bee9ff 36px,#c5e9ff 48px,#cbe9ff 60px,#d1e9ff 72px,#d6e9ff 84px,#dce8ff 96px,#e2e8ff 108px,#e7e8ff 120px,#ece8ff 132px,#f2e7ff 144px,#f7e7ff 156px,#fce7ff 168px,#ffe4fc 180px,#ffdff7 192px,#ffdbf3 204px,#ffd6ee 216px,#ffd2ea 228px,#ffcee6 240px,#ffcae2 252px,#ffc6de 264px,#ffc3da 276px,#ffbfd6 288px,#ffbcd3 300px,#ffb9d0 312px,#ffb5cc 324px,#ffb2c9 336px,#ffafc6 348px);"></div><div style="height:6px;background:linear-gradient(90deg,#ace7ff 0px,#b2e7ff 12px,#b9e7ff 24px,#bfe7ff 36px,#c5e6ff 48px,#cbe6ff 60px,#d1e6ff 72px,#d7e6ff 84px,#dce5ff 96px,#e2e5ff 108px,#e7e5ff 120px,#ece4ff 132px,#f2e4ff 144px,#f7e4ff 156px,#fce4ff 168px,#ffe1fd 180px,#ffdcf8 192px,#ffd8f3 204px,#ffd4ef 216px,#ffd0ea 228px,#ffcce6 240px,#ffc8e2 252px,#ffc4de 264px,#ffc0db 276px,#ffbdd7 288px,#ffb9d3 300px,#ffb6d0 312px,#ffb3cd 324px,#ffb0ca 336px,#ffadc7 348px);"></div><div style="height:6px;background:linear-gradient(90deg,#ace5ff 0px,#b3e4ff 12px,#b9e4ff 24px,#c0e4ff 36px,#c6e4ff 48px,#cbe3ff 60px,#d1e3ff 72px,#d7e3ff 84px,#dce2ff 96px,#e2e2ff 108px,#e7e2ff 120px,#ece1ff 132px,#f2e1ff 144px,#f7e1ff 156px,#fce0ff 168px,#ffdefd 180px,#ffdaf8 192px,#ffd5f3 204px,#ffd1ef 216px,#ffcdeb 228px,#ffc9e6 240px,#ffc5e3 252px,#ffc1df 264px,#ffbedb 276px,#ffbad7 288px,#ffb7d4 300px,#ffb4d1 312px,#ffb1cd 324px,#ffadca 336px,#ffaac7 348px);"></div><div style="height:6px;background:linear-gradient(90deg,#ade2ff 0px,#b4e2ff 12px,#bae1ff 24px,#c0e1ff 36px,#c6e1ff 48px,#cce1ff 60px,#d1e0ff 72px,#d7e0ff 84px,#dce0ff 96px,#e2dfff 108px,#e7dfff 120px,#ecdeff 132px,#f2deff 144px,#f7deff 156px,#fcddff 168px,#ffdbfd 180px,#ffd7f8 192px,#ffd2f4 204px,#ffceef 216px,#ffcaeb 228px,#ffc6e7 240px,#ffc2e3 252px,#ffbfdf 264px,#ffbbdb 276px,#ffb8d8 288px,#ffb4d5 300px,#ffb1d1 312px,#ffaece 324px,#ffabcb 336px,#ffa8c8 348px);"></div><div style="height:6px;background:linear-gradient(90deg,#aedfff 0px,#b4dfff 12px,#bbdfff 24px,#c1deff 36px,#c6deff 48px,#ccdeff 60px,#d2ddff 72px,#d7ddff 84px,#ddddff 96px,#e2dcff 108px,#e7dcff 120px,#ecdbff 132px,#f2dbff 144px,#f7dbff 156px,#fcdaff 168px,#ffd8fd 180px,#ffd4f9 192px,#ffd0f4 204px,#ffcbf0 216px,#ffc7eb 228px,#ffc4e7 240px,#ffc0e3 252px,#ffbce0 264px,#ffb9dc 276px,#ffb5d8 288px,#ffb2d5 300px,#ffafd2 312px,#ffaccf 324px,#ffa9cb 336px,#ffa6c8 348px);"></div><div style="height:6px;background:linear-gradient(90deg,#afddff 0px,#b5dcff 12px,#bbdcff 24px,#c1dcff 36px,#c7dbff 48px,#ccdbff 60px,#d2dbff 72px,#d7daff 84px,#dddaff 96px,#e2d9ff 108px,#e7d9ff 120px,#ecd9ff 132px,#f1d8ff 144px,#f7d8ff 156px,#fbd7ff 168px,#ffd6fe 180px,#ffd1f9 192px,#ffcdf4 204px,#ffc9f0 216px,#ffc5ec 228px,#ffc1e8 240px,#ffbde4 252px,#ffbae0 264px,#ffb6dc 276px,#ffb3d9 288px,#ffafd6 300px,#ffacd2 312px,#ffa9cf 324px,#ffa6cc 336px,#ffa3c9 348px);"></div><div style="height:6px;background:linear-gradient(90deg,#afdaff 0px,#b6daff 12px,#bcd9ff 24px,#c1d9ff 36px,#c7d8ff 48px,#cdd8ff 60px,#d2d8ff 72px,#d8d7ff 84px,#ddd7ff 96px,#e2d6ff 108px,#e7d6ff 120px,#ecd6ff 132px,#f1d5ff 144px,#f6d5ff 156px,#fbd4ff 168px,#ffd3fe 180px,#ffcef9 192px,#ffcaf5 204px,#ffc6f0 216px,#ffc2ec 228px,#ffbee8 240px,#ffbbe4 252px,#ffb7e0 264px,#ffb4dd 276px,#ffb0d9 288px,#ffadd6 300px,#ffaad3 312px,#ffa7d0 324px,#ffa4cc 336px,#ffa1ca 348px);"></div><div style="height:6px;background:linear-gradient(90deg,#b0d7ff 0px,#b6d7ff 12px,#bcd7ff 24px,#c2d6ff 36px,#c8d6ff 48px,#cdd5ff 60px,#d3d5ff 72px,#d8d4ff 84px,#ddd4ff 96px,#e2d4ff 108px,#e7d3ff 120px,#ecd3ff 132px,#f1d2ff 144px,#f6d2ff 156px,#fbd1ff 168px,#ffd0fe 180px,#ffcbf9 192px,#ffc7f5 204px,#ffc3f1 216px,#ffbfec 228px,#ffbbe8 240px,#ffb8e5 252px,#ffb4e1 264px,#ffb1dd 276px,#ffaeda 288px,#ffaad6 300px,#ffa7d3 312px,#ffa4d0 324px,#ffa1cd 336px,#ff9eca 348px);"></div><div style="height:6px;background:linear-gradient(90deg,#b1d5ff 0px,#b7d4ff 12px,#bdd4ff 24px,#c2d3ff 36px,#c8d3ff 48px,#cdd2ff 60px,#d3d2ff 72px,#d8d2ff 84px,#ddd1ff 96px,#e2d1ff 108px,#e7d0ff 120px,#ecd0ff 132px,#f1cfff 144px,#f6cfff 156px,#fbceff 168px,#ffcdfe 180px,#ffc8fa 192px,#ffc4f5 204px,#ffc0f1 216px,#ffbced 228px,#ffb9e9 240px,#ffb5e5 252px,#ffb2e1 264px,#ffaede 276px,#ffabda 288px,#ffa8d7 300px,#ffa5d4 312px,#ffa2d1 324px,#ff9fce 336px,#ff9ccb 348px);"></div><div style="height:6px;background:linear-gradient(90deg,#b1d2ff 0px,#b7d2ff 12px,#bdd1ff 24px,#c3d1ff 36px,#c8d0ff 48px,#ced0ff 60px,#d3cfff 72px,#d8cfff 84px,#ddceff 96px,#e2ceff 108px,#e7cdff 120px,#eccdff 132px,#f1ccff 144px,#f6cbff 156px,#fbcbff 168px,#ffcafe 180px,#ffc6fa 192px,#ffc1f5 204px,#ffbef1 216px,#ffbaed 228px,#ffb6e9 240px,#ffb2e5 252px,#ffafe2 264px,#ffacde 276px,#ffa8db 288px,#ffa5d7 300px,#ffa2d4 312px,#ff9fd1 324px,#ff9cce 336px,#ff99cb 348px);"></div><div style="height:6px;background:linear-gradient(90deg,#b2cfff 0px,#b8cfff 12px,#beceff 24px,#c3ceff 36px,#c9cdff 48px,#cecdff 60px,#d3ccff 72px,#d8ccff 84px,#decbff 96px,#e3cbff 108px,#e7caff 120px,#eccaff 132px,#f1c9ff 144px,#f6c8ff 156px,#fbc8ff 168px,#ffc7ff 180px,#ffc3fa 192px,#ffbff6 204px,#ffbbf1 216px,#ffb7ed 228px,#ffb3e9 240px,#ffb0e6 252px,#fface2 264px,#ffa9df 276px,#ffa6db 288px,#ffa3d8 300px,#ff9fd5 312px,#ff9cd2 324px,#ff99cf 336px,#ff97cc 348px);"></div></div></div>
<div style="position:absolute;left:799.3px;top:769.3px;width:15.5px;height:15.5px;border:2.6px solid #000;box-sizing:border-box;background:#fbfbfb;"></div>
<div style="position:absolute;left:764.5px;top:851.5px;width:9.5px;height:9.5px;border:1.2px solid #222;box-sizing:border-box;border-radius:50%;background:#fff;"></div>
<div style="position:absolute;left:734.5px;top:862.5px;width:9.5px;height:9.5px;border:1.2px solid #333;box-sizing:border-box;border-radius:50%;background:#b8b8b8;"></div>
<div style="position:absolute;left:995px;top:663px;width:653px;height:225px;background:#000;"></div>
<div style="position:absolute;left:996.5px;top:664px;width:649.5px;height:17px;background:#2a2a2a;"></div>
<div style="position:absolute;left:996.5px;top:681px;width:649.5px;height:16px;background:#131313;"></div>
<div class="t" style="left:628.3px;width:1000px;text-align:center;top:671.7px;font-size:19px;line-height:19px;color:#f2f2f2;font-weight:normal;transform:scaleX(0.87);">White</div>
<div class="t" style="left:700.7px;width:1000px;text-align:center;top:671.7px;font-size:19px;line-height:19px;color:#f2f2f2;font-weight:normal;transform:scaleX(0.87);">Red</div>
<div class="t" style="left:774px;width:1000px;text-align:center;top:671.7px;font-size:19px;line-height:19px;color:#f2f2f2;font-weight:normal;transform:scaleX(0.87);">Green</div>
<div class="t" style="left:847.2px;width:1000px;text-align:center;top:671.7px;font-size:19px;line-height:19px;color:#f2f2f2;font-weight:normal;transform:scaleX(0.87);">Blue</div>
<div class="t" style="left:920px;width:1000px;text-align:center;top:671.7px;font-size:19px;line-height:19px;color:#f2f2f2;font-weight:normal;transform:scaleX(0.87);">Cyan</div>
<div class="t" style="left:994.5px;width:1000px;text-align:center;top:671.7px;font-size:19px;line-height:19px;color:#f2f2f2;font-weight:normal;transform:scaleX(0.87);">Magenta</div>
<div class="t" style="left:1069px;width:1000px;text-align:center;top:671.7px;font-size:19px;line-height:19px;color:#f2f2f2;font-weight:normal;transform:scaleX(0.87);">Yellow</div>
<div style="position:absolute;left:1630px;top:680px;width:16px;height:17px;background:#2e2e2e;"></div>
<div style="position:absolute;left:1627.5px;top:676px;width:1.5px;height:2px;background:#d0d0d0;"></div>
<div style="position:absolute;left:1627.5px;top:686px;width:1.5px;height:2px;background:#d0d0d0;"></div>
<div style="position:absolute;left:996.5px;top:697.8px;width:633.5px;height:31px;background:#3b3b3b;"></div>
<div style="position:absolute;left:996.5px;top:728.8px;width:633.5px;height:31px;background:#7a7a7a;"></div>
<div style="position:absolute;left:996.5px;top:759.8px;width:633.5px;height:31px;background:#3b3b3b;"></div>
<div style="position:absolute;left:996.5px;top:790.8px;width:633.5px;height:31px;background:#7a7a7a;"></div>
<div style="position:absolute;left:996.5px;top:821.8px;width:633.5px;height:31px;background:#3b3b3b;"></div>
<div style="position:absolute;left:996.5px;top:852.8px;width:633.5px;height:15px;background:#7a7a7a;"></div>
<div style="position:absolute;left:995px;top:663px;width:635px;height:205px;overflow:hidden;"><div class="t" style="left:14.5px;top:41.9px;font-size:19.3px;line-height:19.3px;color:#f4f4f4;font-weight:bold;transform:scaleX(0.85);transform-origin:0 50%;">x: CIE31</div><div class="t" style="left:98.70000000000005px;top:41.7px;font-size:19.6px;line-height:19.6px;color:#f0f0f0;font-weight:normal;transform:scaleX(0.84);transform-origin:0 50%;">0,3028</div><div class="t" style="left:176px;top:41.7px;font-size:19.6px;line-height:19.6px;color:#f0f0f0;font-weight:normal;transform:scaleX(0.84);transform-origin:0 50%;">0,5911</div><div class="t" style="left:245.20000000000005px;top:41.7px;font-size:19.6px;line-height:19.6px;color:#f0f0f0;font-weight:normal;transform:scaleX(0.84);transform-origin:0 50%;">0,3334</div><div class="t" style="left:322.5px;top:41.7px;font-size:19.6px;line-height:19.6px;color:#f0f0f0;font-weight:normal;transform:scaleX(0.84);transform-origin:0 50%;">0,1491</div><div class="t" style="left:391.70000000000005px;top:41.7px;font-size:19.6px;line-height:19.6px;color:#f0f0f0;font-weight:normal;transform:scaleX(0.84);transform-origin:0 50%;">0,2341</div><div class="t" style="left:469px;top:41.7px;font-size:19.6px;line-height:19.6px;color:#f0f0f0;font-weight:normal;transform:scaleX(0.84);transform-origin:0 50%;">0,2902</div><div class="t" style="left:540.2px;top:41.7px;font-size:19.6px;line-height:19.6px;color:#f0f0f0;font-weight:normal;transform:scaleX(0.84);transform-origin:0 50%;">0,4255</div><div class="t" style="left:617.5px;top:41.7px;font-size:19.6px;line-height:19.6px;color:#f0f0f0;font-weight:normal;transform:scaleX(0.84);transform-origin:0 50%;">0,3</div><div class="t" style="left:14.5px;top:72.7px;font-size:19.3px;line-height:19.3px;color:#f4f4f4;font-weight:bold;transform:scaleX(0.85);transform-origin:0 50%;">y: CIE31</div><div class="t" style="left:98.70000000000005px;top:72.6px;font-size:19.6px;line-height:19.6px;color:#f0f0f0;font-weight:normal;transform:scaleX(0.84);transform-origin:0 50%;">0,3064</div><div class="t" style="left:176px;top:72.6px;font-size:19.6px;line-height:19.6px;color:#f0f0f0;font-weight:normal;transform:scaleX(0.84);transform-origin:0 50%;">0,3674</div><div class="t" style="left:245.20000000000005px;top:72.6px;font-size:19.6px;line-height:19.6px;color:#f0f0f0;font-weight:normal;transform:scaleX(0.84);transform-origin:0 50%;">0,5727</div><div class="t" style="left:322.5px;top:72.6px;font-size:19.6px;line-height:19.6px;color:#f0f0f0;font-weight:normal;transform:scaleX(0.84);transform-origin:0 50%;">0,0470</div><div class="t" style="left:391.70000000000005px;top:72.6px;font-size:19.6px;line-height:19.6px;color:#f0f0f0;font-weight:normal;transform:scaleX(0.84);transform-origin:0 50%;">0,2900</div><div class="t" style="left:469px;top:72.6px;font-size:19.6px;line-height:19.6px;color:#f0f0f0;font-weight:normal;transform:scaleX(0.84);transform-origin:0 50%;">0,1489</div><div class="t" style="left:540.2px;top:72.6px;font-size:19.6px;line-height:19.6px;color:#f0f0f0;font-weight:normal;transform:scaleX(0.84);transform-origin:0 50%;">0,5009</div><div class="t" style="left:617.5px;top:72.6px;font-size:19.6px;line-height:19.6px;color:#f0f0f0;font-weight:normal;transform:scaleX(0.84);transform-origin:0 50%;">0,3</div><div class="t" style="left:14.5px;top:103.6px;font-size:19.3px;line-height:19.3px;color:#f4f4f4;font-weight:bold;transform:scaleX(0.85);transform-origin:0 50%;">Y</div><div class="t" style="left:98.70000000000005px;top:103.4px;font-size:19.6px;line-height:19.6px;color:#f0f0f0;font-weight:normal;transform:scaleX(0.84);transform-origin:0 50%;">191,7606</div><div class="t" style="left:176px;top:103.4px;font-size:19.6px;line-height:19.6px;color:#f0f0f0;font-weight:normal;transform:scaleX(0.84);transform-origin:0 50%;">43,0588</div><div class="t" style="left:245.20000000000005px;top:103.4px;font-size:19.6px;line-height:19.6px;color:#f0f0f0;font-weight:normal;transform:scaleX(0.84);transform-origin:0 50%;">129,9411</div><div class="t" style="left:322.5px;top:103.4px;font-size:19.6px;line-height:19.6px;color:#f0f0f0;font-weight:normal;transform:scaleX(0.84);transform-origin:0 50%;">11,9185</div><div class="t" style="left:391.70000000000005px;top:103.4px;font-size:19.6px;line-height:19.6px;color:#f0f0f0;font-weight:normal;transform:scaleX(0.84);transform-origin:0 50%;">140,1001</div><div class="t" style="left:469px;top:103.4px;font-size:19.6px;line-height:19.6px;color:#f0f0f0;font-weight:normal;transform:scaleX(0.84);transform-origin:0 50%;">55,4992</div><div class="t" style="left:540.2px;top:103.4px;font-size:19.6px;line-height:19.6px;color:#f0f0f0;font-weight:normal;transform:scaleX(0.84);transform-origin:0 50%;">165,3623</div><div class="t" style="left:617.5px;top:103.4px;font-size:19.6px;line-height:19.6px;color:#f0f0f0;font-weight:normal;transform:scaleX(0.84);transform-origin:0 50%;">37</div><div class="t" style="left:14.5px;top:134.4px;font-size:19.3px;line-height:19.3px;color:#f4f4f4;font-weight:bold;transform:scaleX(0.85);transform-origin:0 50%;">Target Y</div><div class="t" style="left:98.70000000000005px;top:134.2px;font-size:19.6px;line-height:19.6px;color:#f0f0f0;font-weight:normal;transform:scaleX(0.84);transform-origin:0 50%;">196,8539</div><div class="t" style="left:176px;top:134.2px;font-size:19.6px;line-height:19.6px;color:#f0f0f0;font-weight:normal;transform:scaleX(0.84);transform-origin:0 50%;">41,8622</div><div class="t" style="left:245.20000000000005px;top:134.2px;font-size:19.6px;line-height:19.6px;color:#f0f0f0;font-weight:normal;transform:scaleX(0.84);transform-origin:0 50%;">140,7817</div><div class="t" style="left:322.5px;top:134.2px;font-size:19.6px;line-height:19.6px;color:#f0f0f0;font-weight:normal;transform:scaleX(0.84);transform-origin:0 50%;">14,2100</div><div class="t" style="left:391.70000000000005px;top:134.2px;font-size:19.6px;line-height:19.6px;color:#f0f0f0;font-weight:normal;transform:scaleX(0.84);transform-origin:0 50%;">154,9918</div><div class="t" style="left:469px;top:134.2px;font-size:19.6px;line-height:19.6px;color:#f0f0f0;font-weight:normal;transform:scaleX(0.84);transform-origin:0 50%;">56,0722</div><div class="t" style="left:540.2px;top:134.2px;font-size:19.6px;line-height:19.6px;color:#f0f0f0;font-weight:normal;transform:scaleX(0.84);transform-origin:0 50%;">182,6439</div><div class="t" style="left:617.5px;top:134.2px;font-size:19.6px;line-height:19.6px;color:#f0f0f0;font-weight:normal;transform:scaleX(0.84);transform-origin:0 50%;">37</div><div class="t" style="left:14.5px;top:165.2px;font-size:19.3px;line-height:19.3px;color:#f4f4f4;font-weight:bold;transform:scaleX(0.85);transform-origin:0 50%;">ΔE 2000</div><div class="t" style="left:98.70000000000005px;top:165.1px;font-size:19.6px;line-height:19.6px;color:#f0f0f0;font-weight:normal;transform:scaleX(0.84);transform-origin:0 50%;">9,2463</div><div class="t" style="left:176px;top:165.1px;font-size:19.6px;line-height:19.6px;color:#f0f0f0;font-weight:normal;transform:scaleX(0.84);transform-origin:0 50%;">6,7735</div><div class="t" style="left:245.20000000000005px;top:165.1px;font-size:19.6px;line-height:19.6px;color:#f0f0f0;font-weight:normal;transform:scaleX(0.84);transform-origin:0 50%;">5,0510</div><div class="t" style="left:322.5px;top:165.1px;font-size:19.6px;line-height:19.6px;color:#f0f0f0;font-weight:normal;transform:scaleX(0.84);transform-origin:0 50%;">3,8454</div><div class="t" style="left:391.70000000000005px;top:165.1px;font-size:19.6px;line-height:19.6px;color:#f0f0f0;font-weight:normal;transform:scaleX(0.84);transform-origin:0 50%;">12,4004</div><div class="t" style="left:469px;top:165.1px;font-size:19.6px;line-height:19.6px;color:#f0f0f0;font-weight:normal;transform:scaleX(0.84);transform-origin:0 50%;">3,3822</div><div class="t" style="left:540.2px;top:165.1px;font-size:19.6px;line-height:19.6px;color:#f0f0f0;font-weight:normal;transform:scaleX(0.84);transform-origin:0 50%;">2,7751</div><div class="t" style="left:617.5px;top:165.1px;font-size:19.6px;line-height:19.6px;color:#f0f0f0;font-weight:normal;transform:scaleX(0.84);transform-origin:0 50%;">10</div><div class="t" style="left:14.5px;top:196.1px;font-size:19.3px;line-height:19.3px;color:#f4f4f4;font-weight:bold;transform:scaleX(0.85);transform-origin:0 50%;">ΔE ITP</div><div class="t" style="left:98.70000000000005px;top:196.0px;font-size:19.6px;line-height:19.6px;color:#f0f0f0;font-weight:normal;transform:scaleX(0.84);transform-origin:0 50%;">9,2068</div><div class="t" style="left:176px;top:196.0px;font-size:19.6px;line-height:19.6px;color:#f0f0f0;font-weight:normal;transform:scaleX(0.84);transform-origin:0 50%;">52,1662</div><div class="t" style="left:245.20000000000005px;top:196.0px;font-size:19.6px;line-height:19.6px;color:#f0f0f0;font-weight:normal;transform:scaleX(0.84);transform-origin:0 50%;">17,1827</div><div class="t" style="left:322.5px;top:196.0px;font-size:19.6px;line-height:19.6px;color:#f0f0f0;font-weight:normal;transform:scaleX(0.84);transform-origin:0 50%;">11,1627</div><div class="t" style="left:391.70000000000005px;top:196.0px;font-size:19.6px;line-height:19.6px;color:#f0f0f0;font-weight:normal;transform:scaleX(0.84);transform-origin:0 50%;">19,0673</div><div class="t" style="left:469px;top:196.0px;font-size:19.6px;line-height:19.6px;color:#f0f0f0;font-weight:normal;transform:scaleX(0.84);transform-origin:0 50%;">31,3818</div><div class="t" style="left:540.2px;top:196.0px;font-size:19.6px;line-height:19.6px;color:#f0f0f0;font-weight:normal;transform:scaleX(0.84);transform-origin:0 50%;">8,2018</div><div class="t" style="left:617.5px;top:196.0px;font-size:19.6px;line-height:19.6px;color:#f0f0f0;font-weight:normal;transform:scaleX(0.84);transform-origin:0 50%;">8,</div></div>
<div style="position:absolute;left:1630px;top:697px;width:17px;height:171px;background:#4a4a4a;"></div>
<div style="position:absolute;left:1632.5px;top:720px;width:12px;height:105px;background:#3a3a3a;border-radius:6px;"></div>
<div style="position:absolute;left:1631.5px;top:700px;width:14px;height:17px;background:#6a6a6a;border-radius:3px;"></div>
<div style="position:absolute;left:1633px;top:704px;width:0;height:0;border-left:5.5px solid transparent;border-right:5.5px solid transparent;border-bottom:6px solid #333;"></div>
<div style="position:absolute;left:1631.5px;top:850px;width:14px;height:16px;background:#6a6a6a;border-radius:3px;"></div>
<div style="position:absolute;left:1633px;top:855px;width:0;height:0;border-left:5.5px solid transparent;border-right:5.5px solid transparent;border-top:6px solid #333;"></div>
<div style="position:absolute;left:996.5px;top:868px;width:633.5px;height:19px;background:#5a5a5a;"></div>
<div style="position:absolute;left:1012px;top:870px;width:550px;height:15px;background:#3c3c3c;border-radius:7px;"></div>
<div style="position:absolute;left:998px;top:870px;width:14px;height:16px;background:#686868;border-radius:3px;"></div>
<div style="position:absolute;left:1001.5px;top:872.5px;width:0;height:0;border-top:5.5px solid transparent;border-bottom:5.5px solid transparent;border-right:6px solid #333;"></div>
<div style="position:absolute;left:1614px;top:870px;width:14px;height:16px;background:#686868;border-radius:3px;"></div>
<div style="position:absolute;left:1618px;top:872.5px;width:0;height:0;border-top:5.5px solid transparent;border-bottom:5.5px solid transparent;border-left:6px solid #333;"></div>
<div style="position:absolute;left:1630px;top:868px;width:17px;height:20px;background:#333;"></div>
<div style="position:absolute;left:1.5px;top:932px;width:155px;height:80px;background:linear-gradient(#a6a6a6 0%,#9a9a9a 12%,#7a7a7a 50%,#5c5c5c 100%);border-radius:5px;"></div>
<div style="position:absolute;left:7.0px;top:938px;width:144px;height:45px;background:#c0c0c0;border-radius:4px;box-shadow:inset 0 1.5px 1px rgba(0,0,0,0.35), 0 1px 0 rgba(255,255,255,0.25);"></div>
<div class="t" style="left:-421.5px;width:1000px;text-align:center;top:990.5px;font-size:13.5px;line-height:13.5px;color:#303030;font-weight:bold;">White</div>
<div style="position:absolute;left:159px;top:932px;width:155px;height:80px;background:linear-gradient(#a6a6a6 0%,#9a9a9a 12%,#7a7a7a 50%,#5c5c5c 100%);border-radius:5px;"></div>
<div style="position:absolute;left:164.5px;top:938px;width:144px;height:45px;background:#c00000;border-radius:4px;box-shadow:inset 0 1.5px 1px rgba(0,0,0,0.35), 0 1px 0 rgba(255,255,255,0.25);"></div>
<div class="t" style="left:-264px;width:1000px;text-align:center;top:990.5px;font-size:13.5px;line-height:13.5px;color:#303030;font-weight:bold;">Red</div>
<div style="position:absolute;left:317.5px;top:932px;width:155px;height:80px;background:linear-gradient(#a6a6a6 0%,#9a9a9a 12%,#7a7a7a 50%,#5c5c5c 100%);border-radius:5px;"></div>
<div style="position:absolute;left:323.0px;top:938px;width:144px;height:45px;background:#00c000;border-radius:4px;box-shadow:inset 0 1.5px 1px rgba(0,0,0,0.35), 0 1px 0 rgba(255,255,255,0.25);"></div>
<div class="t" style="left:-105.5px;width:1000px;text-align:center;top:990.5px;font-size:13.5px;line-height:13.5px;color:#303030;font-weight:bold;">Green</div>
<div style="position:absolute;left:475.5px;top:932px;width:155px;height:80px;background:linear-gradient(#a6a6a6 0%,#9a9a9a 12%,#7a7a7a 50%,#5c5c5c 100%);border-radius:5px;"></div>
<div style="position:absolute;left:481.0px;top:938px;width:144px;height:45px;background:#0000c0;border-radius:4px;box-shadow:inset 0 1.5px 1px rgba(0,0,0,0.35), 0 1px 0 rgba(255,255,255,0.25);"></div>
<div class="t" style="left:52.5px;width:1000px;text-align:center;top:990.5px;font-size:13.5px;line-height:13.5px;color:#303030;font-weight:bold;">Blue</div>
<div style="position:absolute;left:633px;top:932px;width:155px;height:80px;background:linear-gradient(#a6a6a6 0%,#9a9a9a 12%,#7a7a7a 50%,#5c5c5c 100%);border-radius:5px;"></div>
<div style="position:absolute;left:638.5px;top:938px;width:144px;height:45px;background:#00c0c0;border-radius:4px;box-shadow:inset 0 1.5px 1px rgba(0,0,0,0.35), 0 1px 0 rgba(255,255,255,0.25);"></div>
<div class="t" style="left:210px;width:1000px;text-align:center;top:990.5px;font-size:13.5px;line-height:13.5px;color:#303030;font-weight:bold;">Cyan</div>
<div style="position:absolute;left:791px;top:932px;width:155px;height:80px;background:linear-gradient(#a6a6a6 0%,#9a9a9a 12%,#7a7a7a 50%,#5c5c5c 100%);border-radius:5px;"></div>
<div style="position:absolute;left:796.5px;top:938px;width:144px;height:45px;background:#c000c0;border-radius:4px;box-shadow:inset 0 1.5px 1px rgba(0,0,0,0.35), 0 1px 0 rgba(255,255,255,0.25);"></div>
<div class="t" style="left:368px;width:1000px;text-align:center;top:990.5px;font-size:13.5px;line-height:13.5px;color:#303030;font-weight:bold;">Magenta</div>
<div style="position:absolute;left:949px;top:932px;width:155px;height:80px;background:linear-gradient(#a6a6a6 0%,#9a9a9a 12%,#7a7a7a 50%,#5c5c5c 100%);border-radius:5px;"></div>
<div style="position:absolute;left:954.5px;top:938px;width:144px;height:45px;background:#c0c000;border-radius:4px;box-shadow:inset 0 1.5px 1px rgba(0,0,0,0.35), 0 1px 0 rgba(255,255,255,0.25);"></div>
<div class="t" style="left:526px;width:1000px;text-align:center;top:990.5px;font-size:13.5px;line-height:13.5px;color:#303030;font-weight:bold;">Yellow</div>
<div style="position:absolute;left:1107.5px;top:932px;width:155px;height:80px;background:linear-gradient(#1c1c1c,#2a2a2a 15%,#303030);border-radius:5px;"></div>
<div style="position:absolute;left:1113.5px;top:938px;width:143px;height:45px;background:#fff;border-radius:4px;box-shadow:inset 0 1.5px 1px rgba(0,0,0,0.3);"></div>
<div class="t" style="left:685px;width:1000px;text-align:center;top:991.2px;font-size:13.5px;line-height:13.5px;color:#f8f8f8;font-weight:bold;">100W</div>
<div style="position:absolute;left:1266.5px;top:931.5px;width:60px;height:23px;background:linear-gradient(#8a8a8a,#6e6e6e);border-radius:5px 5px 0 0;"></div>
<div style="position:absolute;left:1266.5px;top:954.5px;width:60px;height:1.5px;background:#3a3a3a;"></div>
<div style="position:absolute;left:1266.5px;top:956px;width:60px;height:56px;background:linear-gradient(#8a8a8a,#6a6a6a);"></div>
<div style="position:absolute;left:1288px;top:934px;width:18px;height:18px;border-radius:50%;background:linear-gradient(#5e5e5e,#8a8a8a);"></div>
<div style="position:absolute;left:1291.5px;top:939px;width:0;height:0;border-left:5.5px solid transparent;border-right:5.5px solid transparent;border-bottom:6px solid #222;"></div>
<div style="position:absolute;left:1277px;top:962.5px;width:39px;height:37.5px;background:linear-gradient(#a0a0a0,#9a9a9a 50%,#888 52%,#909090);border:3px solid #1a1a1a;border-radius:6px;box-sizing:border-box;"></div>
<div style="position:absolute;left:1288px;top:973px;width:17px;height:17px;background:#000;"></div>
<div style="position:absolute;left:1327.5px;top:931.5px;width:58.0px;height:37px;background:linear-gradient(#8a8a8a,#5a5a5a);"></div>
<div style="position:absolute;left:1343.5px;top:937px;width:26px;height:26px;border-radius:50%;background:linear-gradient(#5a5a5a,#8e8e8e);"></div>
<div style="position:absolute;left:1351.5px;top:945px;width:10px;height:10px;background:#262626;"></div>
<div style="position:absolute;left:1386.5px;top:931.5px;width:54.5px;height:37px;background:linear-gradient(#8a8a8a,#5a5a5a);"></div>
<div style="position:absolute;left:1400.75px;top:937px;width:26px;height:26px;border-radius:50%;background:linear-gradient(#5a5a5a,#8e8e8e);"></div>
<div style="position:absolute;left:1409.75px;top:943.5px;width:0;height:0;border-top:6.5px solid transparent;border-bottom:6.5px solid transparent;border-left:11px solid #262626;"></div>
<div style="position:absolute;left:1442px;top:931.5px;width:56px;height:37px;background:linear-gradient(#6a6a6a,#4a4a4a);"></div>
<div style="position:absolute;left:1457.0px;top:937px;width:26px;height:26px;border-radius:50%;background:linear-gradient(#474747,#6a6a6a);"></div>
<div class="t" style="left:970.0px;width:1000px;text-align:center;top:944.0px;font-size:12px;line-height:12px;color:#222;font-weight:bold;letter-spacing:-1px;">[↔]</div>
<div style="position:absolute;left:1499.5px;top:931.5px;width:55.0px;height:37px;background:linear-gradient(#8a8a8a,#5a5a5a);"></div>
<div style="position:absolute;left:1514.0px;top:937px;width:26px;height:26px;border-radius:50%;background:linear-gradient(#5a5a5a,#8e8e8e);"></div>
<div class="t" style="left:1027.0px;width:1000px;text-align:center;top:938.0px;font-size:22px;line-height:22px;color:#262626;font-weight:bold;">∞</div>
<div style="position:absolute;left:1555.5px;top:931.5px;width:55.0px;height:37px;background:linear-gradient(#8a8a8a,#5a5a5a);"></div>
<div style="position:absolute;left:1570.0px;top:937px;width:26px;height:26px;border-radius:50%;background:linear-gradient(#5a5a5a,#8e8e8e);"></div>
<svg style="position:absolute;left:1574.0px;top:941px" width="18" height="18" viewBox="0 0 18 18"><path d="M3.5 8 A5.5 5.5 0 0 1 13.5 5.5" stroke="#262626" stroke-width="2.6" fill="none"/><path d="M11 2.5 L15.5 3 L14.5 7.5 Z" fill="#262626"/><path d="M14.5 10 A5.5 5.5 0 0 1 4.5 12.5" stroke="#262626" stroke-width="2.6" fill="none"/><path d="M7 15.5 L2.5 15 L3.5 10.5 Z" fill="#262626"/></svg>
<div style="position:absolute;left:1327.5px;top:969px;width:170px;height:45px;background:linear-gradient(#a8a8a8,#8a8a8a 50%,#6e6e6e);"></div>
<div style="position:absolute;left:1498.5px;top:969px;width:175px;height:45px;background:linear-gradient(#a8a8a8,#8a8a8a 50%,#6e6e6e);"></div>
<div style="position:absolute;left:1497.5px;top:969px;width:1px;height:45px;background:#3a3a3a;"></div>
<div style="position:absolute;left:1352px;top:975px;width:28px;height:28px;border-radius:50%;background:linear-gradient(#7e7e7e,#a8a8a8);"></div>
<div class="t" style="left:866px;width:1000px;text-align:center;top:977.0px;font-size:22px;line-height:22px;color:#3a3a3a;font-weight:bold;">«</div>
<div style="position:absolute;left:1618px;top:975px;width:28px;height:28px;border-radius:50%;background:linear-gradient(#7e7e7e,#a8a8a8);"></div>
<div class="t" style="left:1132px;width:1000px;text-align:center;top:977.0px;font-size:22px;line-height:22px;color:#3a3a3a;font-weight:bold;">»</div>
<div class="t" style="left:1399px;top:975.0px;font-size:29px;line-height:29px;color:#383838;font-weight:normal;-webkit-text-stroke:0.7px #383838;">Back</div>
<div class="t" style="left:1533px;top:975.0px;font-size:29px;line-height:29px;color:#383838;font-weight:normal;-webkit-text-stroke:0.7px #383838;letter-spacing:1.2px;">Next</div>
<svg style="position:absolute;left:1617px;top:928px" width="42" height="42" viewBox="-21 -21 42 42"><g stroke="#1a1a1a" stroke-opacity="0.35" stroke-width="10" stroke-linecap="round"><path d="M0.3 -16 L0.3 16 M-13.6 -8 L13.6 8 M-13.6 8 L13.6 -8" transform="translate(0.5,0.8)"/></g><g stroke="#e00c0c" stroke-width="7" stroke-linecap="round"><path d="M0 -14 L0 14 M-12.3 -7 L12.3 7 M-12.3 7 L12.3 -7"/></g></svg>
<!--TABLE-->
<!--BOTTOM-->
</body></html>
